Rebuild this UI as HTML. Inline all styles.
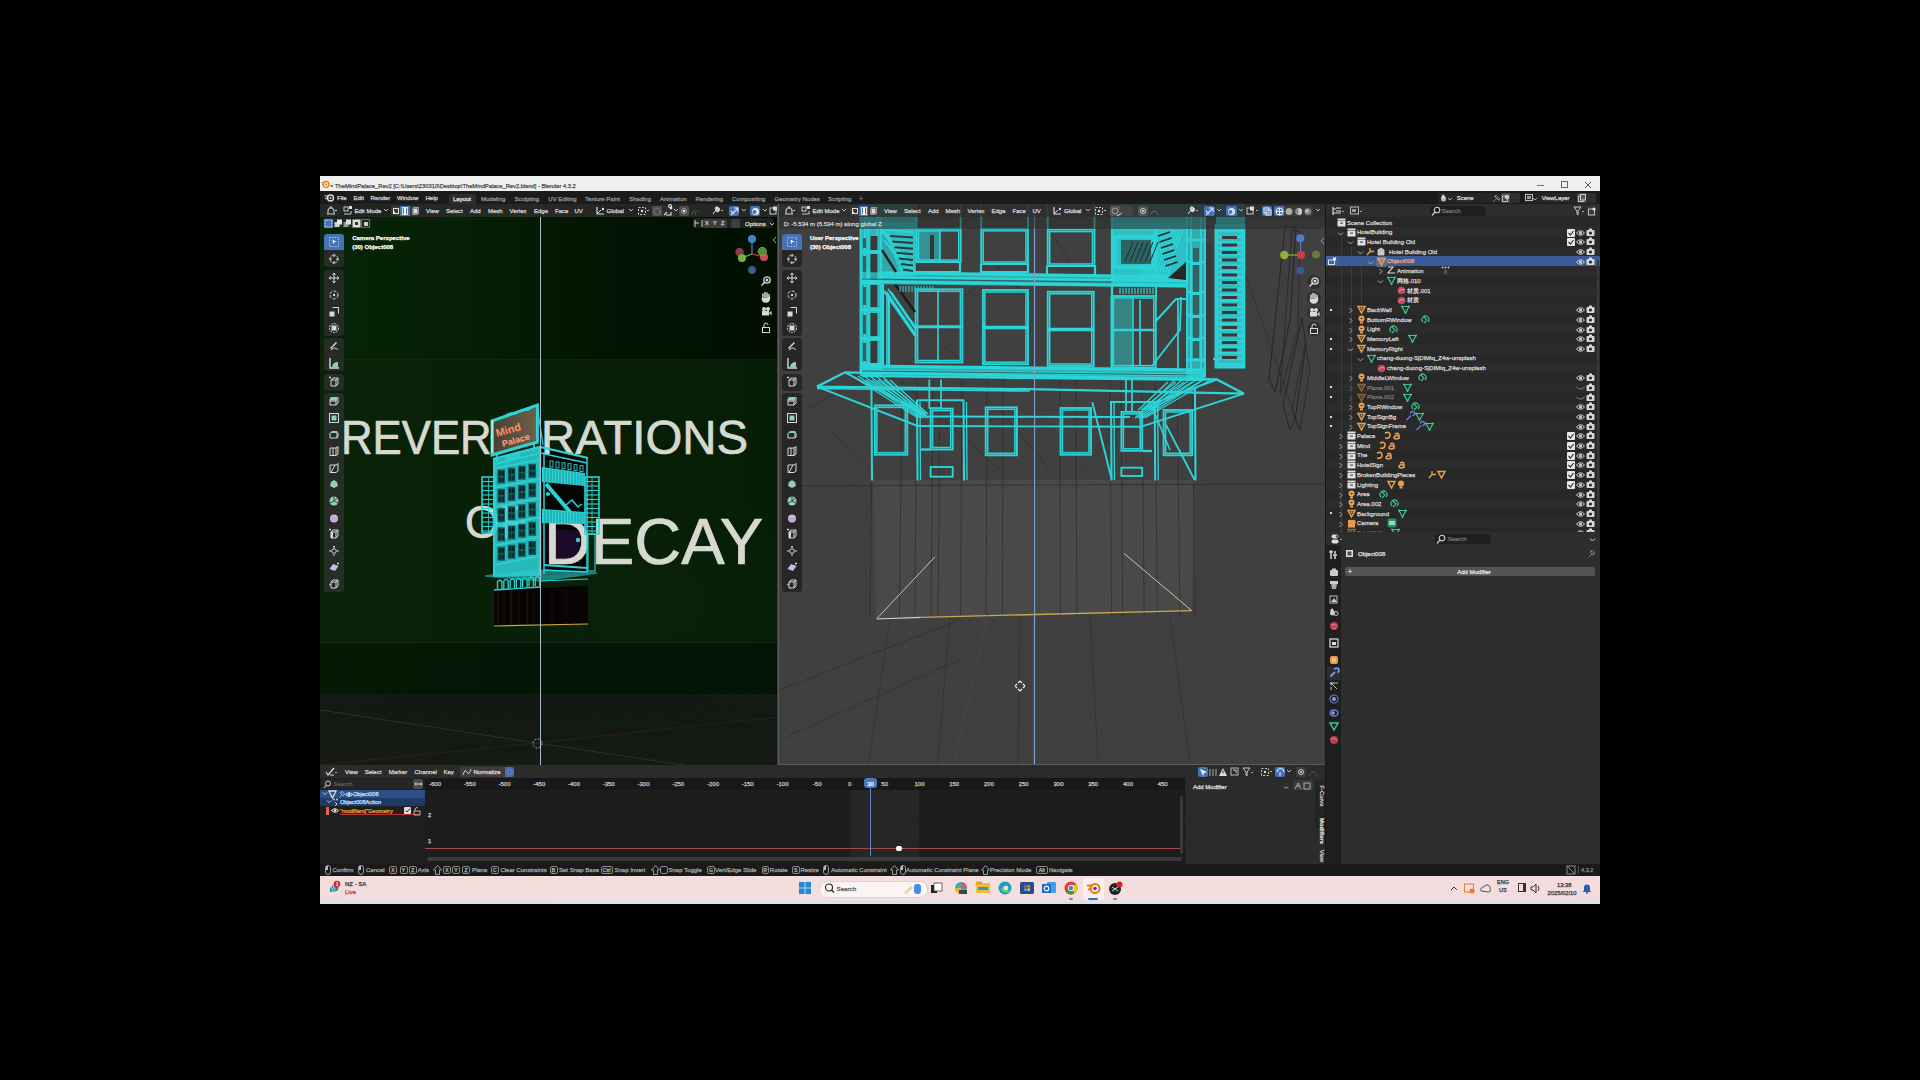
<!DOCTYPE html>
<html><head><meta charset="utf-8">
<style>
html,body{margin:0;padding:0;width:1920px;height:1080px;overflow:hidden;background:#000;}
body{font-family:"Liberation Sans",sans-serif;position:relative;}
.a{position:absolute;}
.t{position:absolute;white-space:nowrap;line-height:1;-webkit-text-stroke:0.25px currentColor;}
svg.a{overflow:visible;}
</style></head><body>
<!-- frames -->
<div class="a" style="left:320px;top:204px;width:457px;height:561px;background:#061406;"></div>
<div class="a" style="left:779px;top:204px;width:546px;height:561px;background:#3d3d3d;"></div>
<div class="a" style="left:1325px;top:204px;width:1px;height:660px;background:#161616;"></div>
<div class="a" style="left:1326px;top:204px;width:274px;height:328px;background:#282828;"></div>
<div class="a" style="left:1326px;top:532px;width:274px;height:332px;background:#2f2f2f;"></div>
<div class="a" style="left:320px;top:765px;width:1005px;height:99px;background:#1e1e1e;"></div>
<div class="a" style="left:320px;top:864px;width:1280px;height:12px;background:#1a1a1a;"></div>
<div class="a" style="left:320px;top:876px;width:1280px;height:28px;background:#f4dcdc;"></div>
<!-- top -->
<div class="a" style="left:320px;top:176px;width:1280px;height:15px;background:#f0f0f0;"></div>
<svg class="a" style="left:321px;top:180px" width="9" height="8" viewBox="0 0 9 8"><circle cx="5" cy="4.3" r="3" fill="none" stroke="#e87d0d" stroke-width="1.3"/><circle cx="5" cy="4.3" r="1.1" fill="#e87d0d"/><path d="M0.5 2.5 L4 2.5 M1 5 L3 4" stroke="#e87d0d" stroke-width="1"/></svg>
<div class="t" style="left:330.5px;top:183.92px;font-size:6px;color:#555;">*</div>
<div class="t" style="left:334.87px;top:183.07px;font-size:6.17px;color:#4a4a4a;transform:scaleX(0.9356);transform-origin:0 0;">TheMindPalace_Rev2 [C:\Users\230310\Desktop\TheMindPalace_Rev2.blend] - Blender 4.3.2</div>
<div class="a" style="left:1537px;top:185px;width:7px;height:1px;background:#777;"></div>
<div class="a" style="left:1561px;top:181px;width:5px;height:5px;border:1px solid #666;"></div>
<svg class="a" style="left:1584px;top:181px" width="8" height="8"><path d="M1 1L7 7M7 1L1 7" stroke="#555" stroke-width="1"/></svg>
<div class="a" style="left:320px;top:191px;width:1280px;height:13px;background:#1b1b1b;"></div>
<svg class="a" style="left:324px;top:193px" width="11" height="9" viewBox="0 0 11 9"><circle cx="6.5" cy="5" r="3" fill="none" stroke="#ddd" stroke-width="1.4"/><circle cx="6.5" cy="5" r="1" fill="#ddd"/><path d="M0.5 3 L5 3 M1 6 L4 4.5" stroke="#ddd" stroke-width="1.1"/></svg>
<div class="t" style="left:337px;top:195.12px;font-size:6px;color:#d8d8d8;">File</div>
<div class="t" style="left:353.5px;top:195.12px;font-size:6px;color:#d8d8d8;">Edit</div>
<div class="t" style="left:370.5px;top:195.12px;font-size:6px;color:#d8d8d8;">Render</div>
<div class="t" style="left:397px;top:195.12px;font-size:6px;color:#d8d8d8;">Window</div>
<div class="t" style="left:425.5px;top:195.12px;font-size:6px;color:#d8d8d8;">Help</div>
<div class="a" style="left:449px;top:194px;width:27px;height:10px;background:#2d2d2d;border-radius:2px 2px 0 0;"></div>
<div class="t" style="left:453px;top:195.92px;font-size:6px;color:#e8e8e8;">Layout</div>
<div class="t" style="left:481px;top:195.92px;font-size:6px;color:#9a9a9a;">Modeling</div>
<div class="t" style="left:514.5px;top:195.92px;font-size:6px;color:#9a9a9a;">Sculpting</div>
<div class="t" style="left:548.3px;top:195.92px;font-size:6px;color:#9a9a9a;">UV Editing</div>
<div class="t" style="left:585px;top:195.92px;font-size:6px;color:#9a9a9a;">Texture Paint</div>
<div class="t" style="left:629px;top:195.92px;font-size:6px;color:#9a9a9a;">Shading</div>
<div class="t" style="left:660px;top:195.92px;font-size:6px;color:#9a9a9a;">Animation</div>
<div class="t" style="left:695.5px;top:195.92px;font-size:6px;color:#9a9a9a;">Rendering</div>
<div class="t" style="left:732px;top:195.92px;font-size:6px;color:#9a9a9a;">Compositing</div>
<div class="t" style="left:774.5px;top:195.92px;font-size:6px;color:#9a9a9a;">Geometry Nodes</div>
<div class="t" style="left:828px;top:195.92px;font-size:6px;color:#9a9a9a;">Scripting</div>
<div class="t" style="left:859px;top:195.07px;font-size:7px;color:#777;">+</div>
<div class="a" style="left:1438px;top:193px;width:82px;height:10px;background:#252525;border-radius:2px;"></div>
<svg class="a" style="left:1440px;top:194px" width="12" height="8"><circle cx="3.5" cy="5" r="2.5" fill="#bbb"/><path d="M3 0 L6 4 L1 4Z" fill="#ddd"/><path d="M8 4 L10 6 L12 4" stroke="#aaa" fill="none"/></svg>
<div class="t" style="left:1456.7px;top:195.42px;font-size:6px;color:#dcdcdc;">Scene</div>
<svg class="a" style="left:1492px;top:194px" width="9" height="9"><path d="M1 8 L4 5 M3 2 L7 6 M4 1 L8 5 L6.5 6.5 L2.5 2.5Z" stroke="#888" fill="none" stroke-width="0.9"/></svg>
<div class="a" style="left:1501px;top:193px;width:9px;height:10px;background:#4a4a4a;border-radius:2px 0 0 2px;"></div>
<div class="a" style="left:1510px;top:193px;width:10px;height:10px;background:#303030;border-radius:0 2px 2px 0;"></div>
<svg class="a" style="left:1502px;top:194px" width="8" height="8"><rect x="0.5" y="2" width="5" height="5.5" fill="none" stroke="#bbb"/><circle cx="5" cy="3" r="2.3" fill="#ccc"/></svg>
<div class="a" style="left:1524px;top:193px;width:72px;height:10px;background:#252525;border-radius:2px;"></div>
<svg class="a" style="left:1525px;top:194px" width="12" height="8"><rect x="0.5" y="0.5" width="7" height="6" fill="none" stroke="#bbb"/><rect x="2" y="2" width="4" height="3" fill="#999"/><path d="M8 4 L10 6 L12 4" stroke="#aaa" fill="none"/></svg>
<div class="t" style="left:1541.7px;top:195.42px;font-size:6px;color:#dcdcdc;">ViewLayer</div>
<div class="a" style="left:1577px;top:193px;width:9px;height:10px;background:#4a4a4a;border-radius:2px 0 0 2px;"></div>
<div class="a" style="left:1586px;top:193px;width:10px;height:10px;background:#303030;border-radius:0 2px 2px 0;"></div>
<svg class="a" style="left:1578px;top:194px" width="8" height="8"><rect x="0.5" y="2" width="5" height="5.5" fill="none" stroke="#bbb"/><rect x="2.5" y="0.5" width="5" height="5.5" fill="#555" stroke="#ccc"/></svg>
<!-- lv -->
<div class="a" style="left:320px;top:204px;width:457px;height:561px;overflow:hidden;background:#041404;"><div class="a" style="left:0;top:0;width:457px;height:156px;background:linear-gradient(to right,#062406 0%,#052005 30%,#021402 65%,#011001 100%);"></div><div class="a" style="left:0;top:156px;width:457px;height:282px;background:linear-gradient(to right,#082308 0%,#072007 50%,#061d06 100%);"></div><div class="a" style="left:0;top:156px;width:457px;height:282px;background:radial-gradient(ellipse 150px 120px at 340px 240px, rgba(10,36,10,0.6), rgba(0,0,0,0) 100%);"></div><div class="a" style="left:0;top:438px;width:457px;height:52px;background:linear-gradient(to right,#051905,#041604 60%,#041404);"></div><div class="a" style="left:0;top:155px;width:457px;height:1px;background:rgba(40,80,40,0.25);"></div><div class="a" style="left:0;top:438px;width:457px;height:1px;background:rgba(70,110,70,0.25);"></div><div class="a" style="left:0;top:490px;width:457px;height:71px;background:linear-gradient(#111711,#151a15);"></div></div>
<svg class="a" style="left:0;top:0" width="1920" height="1080"><defs><clipPath id="lvclip"><rect x="320" y="694" width="456" height="71"/></clipPath></defs><g clip-path="url(#lvclip)"><line x1="313" y1="694" x2="-331" y2="765" stroke="#1b211b" stroke-width="0.6"/><line x1="329" y1="694" x2="-269" y2="765" stroke="#1b211b" stroke-width="0.6"/><line x1="345" y1="694" x2="-207" y2="765" stroke="#1b211b" stroke-width="0.6"/><line x1="361" y1="694" x2="-145" y2="765" stroke="#1b211b" stroke-width="0.6"/><line x1="377" y1="694" x2="-83" y2="765" stroke="#1b211b" stroke-width="0.6"/><line x1="393" y1="694" x2="-21" y2="765" stroke="#1b211b" stroke-width="0.6"/><line x1="409" y1="694" x2="41" y2="765" stroke="#1b211b" stroke-width="0.6"/><line x1="425" y1="694" x2="103" y2="765" stroke="#1b211b" stroke-width="0.6"/><line x1="441" y1="694" x2="165" y2="765" stroke="#1b211b" stroke-width="0.6"/><line x1="457" y1="694" x2="227" y2="765" stroke="#1b211b" stroke-width="0.6"/><line x1="473" y1="694" x2="289" y2="765" stroke="#1b211b" stroke-width="0.6"/><line x1="489" y1="694" x2="351" y2="765" stroke="#1b211b" stroke-width="0.6"/><line x1="505" y1="694" x2="413" y2="765" stroke="#1b211b" stroke-width="0.6"/><line x1="521" y1="694" x2="475" y2="765" stroke="#1b211b" stroke-width="0.6"/><line x1="537" y1="694" x2="537" y2="765" stroke="#1b211b" stroke-width="0.6"/><line x1="553" y1="694" x2="599" y2="765" stroke="#1b211b" stroke-width="0.6"/><line x1="569" y1="694" x2="661" y2="765" stroke="#1b211b" stroke-width="0.6"/><line x1="585" y1="694" x2="723" y2="765" stroke="#1b211b" stroke-width="0.6"/><line x1="601" y1="694" x2="785" y2="765" stroke="#1b211b" stroke-width="0.6"/><line x1="617" y1="694" x2="847" y2="765" stroke="#1b211b" stroke-width="0.6"/><line x1="633" y1="694" x2="909" y2="765" stroke="#1b211b" stroke-width="0.6"/><line x1="649" y1="694" x2="971" y2="765" stroke="#1b211b" stroke-width="0.6"/><line x1="665" y1="694" x2="1033" y2="765" stroke="#1b211b" stroke-width="0.6"/><line x1="681" y1="694" x2="1095" y2="765" stroke="#1b211b" stroke-width="0.6"/><line x1="697" y1="694" x2="1157" y2="765" stroke="#1b211b" stroke-width="0.6"/><line x1="713" y1="694" x2="1219" y2="765" stroke="#1b211b" stroke-width="0.6"/><line x1="729" y1="694" x2="1281" y2="765" stroke="#1b211b" stroke-width="0.6"/><line x1="745" y1="694" x2="1343" y2="765" stroke="#1b211b" stroke-width="0.6"/><line x1="761" y1="694" x2="1405" y2="765" stroke="#1b211b" stroke-width="0.6"/><line x1="320" y1="699" x2="777" y2="699" stroke="#1a1f1a" stroke-width="0.6"/><line x1="320" y1="705" x2="777" y2="705" stroke="#1a1f1a" stroke-width="0.6"/><line x1="320" y1="713" x2="777" y2="713" stroke="#1a1f1a" stroke-width="0.6"/><line x1="320" y1="723" x2="777" y2="723" stroke="#1a1f1a" stroke-width="0.6"/><line x1="320" y1="736" x2="777" y2="736" stroke="#1a1f1a" stroke-width="0.6"/><line x1="320" y1="752" x2="777" y2="752" stroke="#1a1f1a" stroke-width="0.6"/><line x1="320" y1="710" x2="537" y2="743" stroke="#3c3e1c" stroke-width="0.7"/><line x1="537" y1="743" x2="690" y2="766" stroke="#3c3e1c" stroke-width="0.7"/><line x1="320" y1="765" x2="537" y2="743" stroke="#3e2020" stroke-width="0.7"/><line x1="537" y1="743" x2="777" y2="717" stroke="#3e2020" stroke-width="0.7"/></g></svg>
<svg class="a" style="left:0;top:0" width="1920" height="1080"><polygon points="494,589 588,586 588,624 494,626" fill="#070403"/><line x1="498" y1="591" x2="498" y2="624" stroke="#2a1808" stroke-width="1.2"/><line x1="504" y1="591" x2="504" y2="624" stroke="#1c1006" stroke-width="1.2"/><line x1="511" y1="591" x2="511" y2="624" stroke="#2a1808" stroke-width="1.2"/><line x1="519" y1="591" x2="519" y2="624" stroke="#1c1006" stroke-width="1.2"/><line x1="527" y1="591" x2="527" y2="624" stroke="#2a1808" stroke-width="1.2"/><line x1="534" y1="591" x2="534" y2="624" stroke="#1c1006" stroke-width="1.2"/><line x1="552" y1="591" x2="552" y2="624" stroke="#160c06" stroke-width="1.2"/><line x1="566" y1="591" x2="566" y2="624" stroke="#160c06" stroke-width="1.2"/><line x1="494" y1="626" x2="588" y2="624" stroke="#c8a838" stroke-width="1.2"/><polygon points="540,447 588,458 588,573 540,576" fill="#040606"/><polygon points="548,528 582,531 582,562 548,563" fill="#1c0a26"/></svg>
<div class="t" style="left:340.89px;top:413.57px;font-size:47.46px;color:#d6d9d0;transform:scaleX(0.9216);transform-origin:0 0;-webkit-text-stroke:0.7px #d6d9d0;">REVER</div>
<div class="t" style="left:540.59px;top:413.57px;font-size:47.46px;color:#d6d9d0;transform:scaleX(0.9982);transform-origin:0 0;-webkit-text-stroke:0.7px #d6d9d0;">RATIONS</div>
<div class="t" style="left:464.57px;top:500.45px;font-size:45.54px;color:#d6d9d0;transform:scaleX(0.9847);transform-origin:0 0;-webkit-text-stroke:0.7px #d6d9d0;">OF</div>
<div class="t" style="left:544.13px;top:509.62px;font-size:64.47px;color:#d6d9d0;transform:scaleX(1.0087);transform-origin:0 0;-webkit-text-stroke:0.7px #d6d9d0;">DECAY</div>
<svg class="a" style="left:0;top:0" width="1920" height="1080"><polygon points="493,459 540,447 540,576 493,577" fill="#2bd3d6" opacity="0.86"/><rect x="497.5" y="469.5" width="7.5" height="14" fill="#0d4648" opacity="0.85"/><rect x="498.7" y="471.0" width="2.2" height="4.5" fill="#061c1d"/><rect x="501.8" y="471.0" width="2.2" height="4.5" fill="#061c1d"/><rect x="498.7" y="477.5" width="2.2" height="4.5" fill="#0a2a2b"/><rect x="501.8" y="477.5" width="2.2" height="4.5" fill="#0a2a2b"/><rect x="507.8" y="467.6" width="7.5" height="14" fill="#0d4648" opacity="0.85"/><rect x="509.0" y="469.1" width="2.2" height="4.5" fill="#061c1d"/><rect x="512.1" y="469.1" width="2.2" height="4.5" fill="#061c1d"/><rect x="509.0" y="475.6" width="2.2" height="4.5" fill="#0a2a2b"/><rect x="512.1" y="475.6" width="2.2" height="4.5" fill="#0a2a2b"/><rect x="518.1" y="465.7" width="7.5" height="14" fill="#0d4648" opacity="0.85"/><rect x="519.3" y="467.2" width="2.2" height="4.5" fill="#061c1d"/><rect x="522.4" y="467.2" width="2.2" height="4.5" fill="#061c1d"/><rect x="519.3" y="473.7" width="2.2" height="4.5" fill="#0a2a2b"/><rect x="522.4" y="473.7" width="2.2" height="4.5" fill="#0a2a2b"/><rect x="528.4" y="463.8" width="7.5" height="14" fill="#0d4648" opacity="0.85"/><rect x="529.6" y="465.3" width="2.2" height="4.5" fill="#061c1d"/><rect x="532.7" y="465.3" width="2.2" height="4.5" fill="#061c1d"/><rect x="529.6" y="471.8" width="2.2" height="4.5" fill="#0a2a2b"/><rect x="532.7" y="471.8" width="2.2" height="4.5" fill="#0a2a2b"/><rect x="497.5" y="488.8" width="7.5" height="14" fill="#0d4648" opacity="0.85"/><rect x="498.7" y="490.3" width="2.2" height="4.5" fill="#061c1d"/><rect x="501.8" y="490.3" width="2.2" height="4.5" fill="#061c1d"/><rect x="498.7" y="496.8" width="2.2" height="4.5" fill="#0a2a2b"/><rect x="501.8" y="496.8" width="2.2" height="4.5" fill="#0a2a2b"/><rect x="507.8" y="486.9" width="7.5" height="14" fill="#0d4648" opacity="0.85"/><rect x="509.0" y="488.4" width="2.2" height="4.5" fill="#061c1d"/><rect x="512.1" y="488.4" width="2.2" height="4.5" fill="#061c1d"/><rect x="509.0" y="494.9" width="2.2" height="4.5" fill="#0a2a2b"/><rect x="512.1" y="494.9" width="2.2" height="4.5" fill="#0a2a2b"/><rect x="518.1" y="485.0" width="7.5" height="14" fill="#0d4648" opacity="0.85"/><rect x="519.3" y="486.5" width="2.2" height="4.5" fill="#061c1d"/><rect x="522.4" y="486.5" width="2.2" height="4.5" fill="#061c1d"/><rect x="519.3" y="493.0" width="2.2" height="4.5" fill="#0a2a2b"/><rect x="522.4" y="493.0" width="2.2" height="4.5" fill="#0a2a2b"/><rect x="528.4" y="483.1" width="7.5" height="14" fill="#0d4648" opacity="0.85"/><rect x="529.6" y="484.6" width="2.2" height="4.5" fill="#061c1d"/><rect x="532.7" y="484.6" width="2.2" height="4.5" fill="#061c1d"/><rect x="529.6" y="491.1" width="2.2" height="4.5" fill="#0a2a2b"/><rect x="532.7" y="491.1" width="2.2" height="4.5" fill="#0a2a2b"/><rect x="497.5" y="508.1" width="7.5" height="14" fill="#0d4648" opacity="0.85"/><rect x="498.7" y="509.6" width="2.2" height="4.5" fill="#061c1d"/><rect x="501.8" y="509.6" width="2.2" height="4.5" fill="#061c1d"/><rect x="498.7" y="516.1" width="2.2" height="4.5" fill="#0a2a2b"/><rect x="501.8" y="516.1" width="2.2" height="4.5" fill="#0a2a2b"/><rect x="507.8" y="506.2" width="7.5" height="14" fill="#0d4648" opacity="0.85"/><rect x="509.0" y="507.7" width="2.2" height="4.5" fill="#061c1d"/><rect x="512.1" y="507.7" width="2.2" height="4.5" fill="#061c1d"/><rect x="509.0" y="514.2" width="2.2" height="4.5" fill="#0a2a2b"/><rect x="512.1" y="514.2" width="2.2" height="4.5" fill="#0a2a2b"/><rect x="518.1" y="504.3" width="7.5" height="14" fill="#0d4648" opacity="0.85"/><rect x="519.3" y="505.8" width="2.2" height="4.5" fill="#061c1d"/><rect x="522.4" y="505.8" width="2.2" height="4.5" fill="#061c1d"/><rect x="519.3" y="512.3" width="2.2" height="4.5" fill="#0a2a2b"/><rect x="522.4" y="512.3" width="2.2" height="4.5" fill="#0a2a2b"/><rect x="528.4" y="502.4" width="7.5" height="14" fill="#0d4648" opacity="0.85"/><rect x="529.6" y="503.9" width="2.2" height="4.5" fill="#061c1d"/><rect x="532.7" y="503.9" width="2.2" height="4.5" fill="#061c1d"/><rect x="529.6" y="510.4" width="2.2" height="4.5" fill="#0a2a2b"/><rect x="532.7" y="510.4" width="2.2" height="4.5" fill="#0a2a2b"/><rect x="497.5" y="527.4" width="7.5" height="14" fill="#0d4648" opacity="0.85"/><rect x="498.7" y="528.9" width="2.2" height="4.5" fill="#061c1d"/><rect x="501.8" y="528.9" width="2.2" height="4.5" fill="#061c1d"/><rect x="498.7" y="535.4" width="2.2" height="4.5" fill="#0a2a2b"/><rect x="501.8" y="535.4" width="2.2" height="4.5" fill="#0a2a2b"/><rect x="507.8" y="525.5" width="7.5" height="14" fill="#0d4648" opacity="0.85"/><rect x="509.0" y="527.0" width="2.2" height="4.5" fill="#061c1d"/><rect x="512.1" y="527.0" width="2.2" height="4.5" fill="#061c1d"/><rect x="509.0" y="533.5" width="2.2" height="4.5" fill="#0a2a2b"/><rect x="512.1" y="533.5" width="2.2" height="4.5" fill="#0a2a2b"/><rect x="518.1" y="523.6" width="7.5" height="14" fill="#0d4648" opacity="0.85"/><rect x="519.3" y="525.1" width="2.2" height="4.5" fill="#061c1d"/><rect x="522.4" y="525.1" width="2.2" height="4.5" fill="#061c1d"/><rect x="519.3" y="531.6" width="2.2" height="4.5" fill="#0a2a2b"/><rect x="522.4" y="531.6" width="2.2" height="4.5" fill="#0a2a2b"/><rect x="528.4" y="521.7" width="7.5" height="14" fill="#0d4648" opacity="0.85"/><rect x="529.6" y="523.2" width="2.2" height="4.5" fill="#061c1d"/><rect x="532.7" y="523.2" width="2.2" height="4.5" fill="#061c1d"/><rect x="529.6" y="529.7" width="2.2" height="4.5" fill="#0a2a2b"/><rect x="532.7" y="529.7" width="2.2" height="4.5" fill="#0a2a2b"/><rect x="497.5" y="546.7" width="7.5" height="14" fill="#0d4648" opacity="0.85"/><rect x="498.7" y="548.2" width="2.2" height="4.5" fill="#061c1d"/><rect x="501.8" y="548.2" width="2.2" height="4.5" fill="#061c1d"/><rect x="498.7" y="554.7" width="2.2" height="4.5" fill="#0a2a2b"/><rect x="501.8" y="554.7" width="2.2" height="4.5" fill="#0a2a2b"/><rect x="507.8" y="544.8" width="7.5" height="14" fill="#0d4648" opacity="0.85"/><rect x="509.0" y="546.3" width="2.2" height="4.5" fill="#061c1d"/><rect x="512.1" y="546.3" width="2.2" height="4.5" fill="#061c1d"/><rect x="509.0" y="552.8" width="2.2" height="4.5" fill="#0a2a2b"/><rect x="512.1" y="552.8" width="2.2" height="4.5" fill="#0a2a2b"/><rect x="518.1" y="542.9" width="7.5" height="14" fill="#0d4648" opacity="0.85"/><rect x="519.3" y="544.4" width="2.2" height="4.5" fill="#061c1d"/><rect x="522.4" y="544.4" width="2.2" height="4.5" fill="#061c1d"/><rect x="519.3" y="550.9" width="2.2" height="4.5" fill="#0a2a2b"/><rect x="522.4" y="550.9" width="2.2" height="4.5" fill="#0a2a2b"/><rect x="528.4" y="541.0" width="7.5" height="14" fill="#0d4648" opacity="0.85"/><rect x="529.6" y="542.5" width="2.2" height="4.5" fill="#061c1d"/><rect x="532.7" y="542.5" width="2.2" height="4.5" fill="#061c1d"/><rect x="529.6" y="549.0" width="2.2" height="4.5" fill="#0a2a2b"/><rect x="532.7" y="549.0" width="2.2" height="4.5" fill="#0a2a2b"/><line x1="494" y1="468.5" x2="540" y2="459.5" stroke="#2bd3d6" stroke-width="1.6"/><line x1="494" y1="487.8" x2="540" y2="478.8" stroke="#2bd3d6" stroke-width="1.6"/><line x1="494" y1="507.1" x2="540" y2="498.1" stroke="#2bd3d6" stroke-width="1.6"/><line x1="494" y1="526.4" x2="540" y2="517.4" stroke="#2bd3d6" stroke-width="1.6"/><line x1="494" y1="545.7" x2="540" y2="536.7" stroke="#2bd3d6" stroke-width="1.6"/><line x1="494" y1="565.0" x2="540" y2="556.0" stroke="#2bd3d6" stroke-width="1.6"/><polyline points="493,459 540,447 588,458" fill="none" stroke="#2bd3d6" stroke-width="2.2"/><polyline points="495,464 540,453 587,463" fill="none" stroke="#2bd3d6" stroke-width="1.6"/><line x1="540" y1="447" x2="540" y2="576" stroke="#2bd3d6" stroke-width="2.5"/><line x1="494" y1="459" x2="494" y2="577" stroke="#2bd3d6" stroke-width="1.8"/><line x1="587" y1="458" x2="587" y2="573" stroke="#2bd3d6" stroke-width="1.5"/><line x1="544" y1="452" x2="544" y2="574" stroke="#2bd3d6" stroke-width="1.5"/><rect x="550" y="461.0" width="3" height="6" fill="none" stroke="#2bd3d6" stroke-width="0.9"/><rect x="556" y="461.9" width="3" height="6" fill="none" stroke="#2bd3d6" stroke-width="0.9"/><rect x="562" y="462.8" width="3" height="6" fill="none" stroke="#2bd3d6" stroke-width="0.9"/><rect x="568" y="463.7" width="3" height="6" fill="none" stroke="#2bd3d6" stroke-width="0.9"/><rect x="574" y="464.6" width="3" height="6" fill="none" stroke="#2bd3d6" stroke-width="0.9"/><rect x="580" y="465.5" width="3" height="6" fill="none" stroke="#2bd3d6" stroke-width="0.9"/><polygon points="542,467 585,473 585,486 542,482" fill="#2bd3d6"/><line x1="545" y1="468.4" x2="545" y2="482.3" stroke="#17888a" stroke-width="0.8"/><line x1="548" y1="468.8" x2="548" y2="482.5" stroke="#17888a" stroke-width="0.8"/><line x1="551" y1="469.3" x2="551" y2="482.8" stroke="#17888a" stroke-width="0.8"/><line x1="554" y1="469.7" x2="554" y2="483.1" stroke="#17888a" stroke-width="0.8"/><line x1="557" y1="470.1" x2="557" y2="483.4" stroke="#17888a" stroke-width="0.8"/><line x1="560" y1="470.5" x2="560" y2="483.6" stroke="#17888a" stroke-width="0.8"/><line x1="563" y1="470.9" x2="563" y2="483.9" stroke="#17888a" stroke-width="0.8"/><line x1="566" y1="471.4" x2="566" y2="484.2" stroke="#17888a" stroke-width="0.8"/><line x1="569" y1="471.8" x2="569" y2="484.4" stroke="#17888a" stroke-width="0.8"/><line x1="572" y1="472.2" x2="572" y2="484.7" stroke="#17888a" stroke-width="0.8"/><line x1="575" y1="472.6" x2="575" y2="485.0" stroke="#17888a" stroke-width="0.8"/><line x1="578" y1="473.0" x2="578" y2="485.2" stroke="#17888a" stroke-width="0.8"/><line x1="581" y1="473.5" x2="581" y2="485.5" stroke="#17888a" stroke-width="0.8"/><line x1="584" y1="473.9" x2="584" y2="485.8" stroke="#17888a" stroke-width="0.8"/><polygon points="542,509 585,512 585,524 542,523" fill="#2bd3d6"/><line x1="545" y1="510.2" x2="545" y2="523.1" stroke="#17888a" stroke-width="0.8"/><line x1="548" y1="510.4" x2="548" y2="523.1" stroke="#17888a" stroke-width="0.8"/><line x1="551" y1="510.6" x2="551" y2="523.2" stroke="#17888a" stroke-width="0.8"/><line x1="554" y1="510.8" x2="554" y2="523.2" stroke="#17888a" stroke-width="0.8"/><line x1="557" y1="511.1" x2="557" y2="523.3" stroke="#17888a" stroke-width="0.8"/><line x1="560" y1="511.3" x2="560" y2="523.4" stroke="#17888a" stroke-width="0.8"/><line x1="563" y1="511.5" x2="563" y2="523.4" stroke="#17888a" stroke-width="0.8"/><line x1="566" y1="511.7" x2="566" y2="523.5" stroke="#17888a" stroke-width="0.8"/><line x1="569" y1="511.9" x2="569" y2="523.5" stroke="#17888a" stroke-width="0.8"/><line x1="572" y1="512.1" x2="572" y2="523.6" stroke="#17888a" stroke-width="0.8"/><line x1="575" y1="512.3" x2="575" y2="523.7" stroke="#17888a" stroke-width="0.8"/><line x1="578" y1="512.5" x2="578" y2="523.7" stroke="#17888a" stroke-width="0.8"/><line x1="581" y1="512.7" x2="581" y2="523.8" stroke="#17888a" stroke-width="0.8"/><line x1="584" y1="512.9" x2="584" y2="523.8" stroke="#17888a" stroke-width="0.8"/><line x1="546" y1="484" x2="570" y2="512" stroke="#2bd3d6" stroke-width="4"/><path d="M566 505 L572 500 L578 507 L582 504" stroke="#2bd3d6" stroke-width="1.5" fill="none"/><circle cx="548" cy="494" r="2" fill="#2bd3d6"/><circle cx="578" cy="540" r="2.2" fill="#2bd3d6"/><line x1="544" y1="565" x2="587" y2="568" stroke="#2bd3d6" stroke-width="2"/><line x1="544" y1="570" x2="587" y2="572" stroke="#2bd3d6" stroke-width="1.5"/><rect x="482" y="477" width="13" height="56" fill="none" stroke="#2bd3d6" stroke-width="1.6"/><line x1="488.5" y1="477" x2="488.5" y2="533" stroke="#2bd3d6" stroke-width="0.8"/><line x1="482" y1="481.5" x2="495" y2="481.5" stroke="#2bd3d6" stroke-width="1.1"/><line x1="482" y1="486.0" x2="495" y2="486.0" stroke="#2bd3d6" stroke-width="1.1"/><line x1="482" y1="490.5" x2="495" y2="490.5" stroke="#2bd3d6" stroke-width="1.1"/><line x1="482" y1="495.0" x2="495" y2="495.0" stroke="#2bd3d6" stroke-width="1.1"/><line x1="482" y1="499.5" x2="495" y2="499.5" stroke="#2bd3d6" stroke-width="1.1"/><line x1="482" y1="504.0" x2="495" y2="504.0" stroke="#2bd3d6" stroke-width="1.1"/><line x1="482" y1="508.5" x2="495" y2="508.5" stroke="#2bd3d6" stroke-width="1.1"/><line x1="482" y1="513.0" x2="495" y2="513.0" stroke="#2bd3d6" stroke-width="1.1"/><line x1="482" y1="517.5" x2="495" y2="517.5" stroke="#2bd3d6" stroke-width="1.1"/><line x1="482" y1="522.0" x2="495" y2="522.0" stroke="#2bd3d6" stroke-width="1.1"/><line x1="482" y1="526.5" x2="495" y2="526.5" stroke="#2bd3d6" stroke-width="1.1"/><line x1="482" y1="531.0" x2="495" y2="531.0" stroke="#2bd3d6" stroke-width="1.1"/><rect x="585" y="477" width="14" height="57" fill="none" stroke="#2bd3d6" stroke-width="1.6"/><line x1="592.0" y1="477" x2="592.0" y2="534" stroke="#2bd3d6" stroke-width="0.8"/><line x1="585" y1="481.5" x2="599" y2="481.5" stroke="#2bd3d6" stroke-width="1.1"/><line x1="585" y1="486.0" x2="599" y2="486.0" stroke="#2bd3d6" stroke-width="1.1"/><line x1="585" y1="490.5" x2="599" y2="490.5" stroke="#2bd3d6" stroke-width="1.1"/><line x1="585" y1="495.0" x2="599" y2="495.0" stroke="#2bd3d6" stroke-width="1.1"/><line x1="585" y1="499.5" x2="599" y2="499.5" stroke="#2bd3d6" stroke-width="1.1"/><line x1="585" y1="504.0" x2="599" y2="504.0" stroke="#2bd3d6" stroke-width="1.1"/><line x1="585" y1="508.5" x2="599" y2="508.5" stroke="#2bd3d6" stroke-width="1.1"/><line x1="585" y1="513.0" x2="599" y2="513.0" stroke="#2bd3d6" stroke-width="1.1"/><line x1="585" y1="517.5" x2="599" y2="517.5" stroke="#2bd3d6" stroke-width="1.1"/><line x1="585" y1="522.0" x2="599" y2="522.0" stroke="#2bd3d6" stroke-width="1.1"/><line x1="585" y1="526.5" x2="599" y2="526.5" stroke="#2bd3d6" stroke-width="1.1"/><line x1="585" y1="531.0" x2="599" y2="531.0" stroke="#2bd3d6" stroke-width="1.1"/><rect x="588" y="534" width="7" height="37" fill="none" stroke="#2bd3d6" stroke-width="1.1"/><polygon points="485,576 540,570 597,573 540,581" fill="#2bd3d6" opacity="0.55" stroke="#2bd3d6" stroke-width="1.6"/><path d="M497.5 589.5 V581.5 Q499.7 579.0 501.9 581.5 V589.5" fill="none" stroke="#2bd3d6" stroke-width="1.3"/><path d="M503.8 588.9 V580.9 Q506.0 578.4 508.2 580.9 V588.9" fill="none" stroke="#2bd3d6" stroke-width="1.3"/><path d="M510.1 588.3 V580.3 Q512.3 577.8 514.5 580.3 V588.3" fill="none" stroke="#2bd3d6" stroke-width="1.3"/><path d="M516.4 587.7 V579.7 Q518.6 577.2 520.8 579.7 V587.7" fill="none" stroke="#2bd3d6" stroke-width="1.3"/><path d="M522.7 587.1 V579.1 Q524.9 576.6 527.1 579.1 V587.1" fill="none" stroke="#2bd3d6" stroke-width="1.3"/><path d="M529.0 586.5 V578.5 Q531.2 576.0 533.4 578.5 V586.5" fill="none" stroke="#2bd3d6" stroke-width="1.3"/><path d="M535.3 585.9 V577.9 Q537.5 575.4 539.7 577.9 V585.9" fill="none" stroke="#2bd3d6" stroke-width="1.3"/><line x1="494" y1="590" x2="540" y2="587" stroke="#2bd3d6" stroke-width="1.4"/><line x1="540" y1="581" x2="588" y2="579" stroke="#2bd3d6" stroke-width="1.2"/><line x1="497" y1="452" x2="497" y2="462" stroke="#2bd3d6" stroke-width="1.8"/><line x1="534" y1="443" x2="534" y2="452" stroke="#2bd3d6" stroke-width="1.8"/><polygon points="505,455 520,451 520,458 505,461" fill="#2bd3d6" opacity="0.7"/><defs><linearGradient id="sgn" x1="0" y1="0" x2="1" y2="0"><stop offset="0" stop-color="#4a4030"/><stop offset="1" stop-color="#6c6048"/></linearGradient></defs><polygon points="492,421 537.4,405 537.4,442 492,455" fill="url(#sgn)" stroke="#2bd3d6" stroke-width="3"/><path d="M505 416 Q510 412 515 414 Q522 409 528 410 Q533 406 537 405" fill="none" stroke="#2bd3d6" stroke-width="2"/><rect x="491" y="420" width="2.5" height="33" fill="#bfe8e8" opacity="0.8"/><text x="497" y="437" font-family="Liberation Sans" font-weight="bold" font-size="11" fill="#ff8f6a" transform="rotate(-16 497 437)">Mind</text><text x="503" y="447" font-family="Liberation Sans" font-weight="bold" font-size="9" fill="#ffa080" transform="rotate(-16 503 447)">Palace</text><line x1="537" y1="405" x2="543" y2="445" stroke="#2bd3d6" stroke-width="1.2"/></svg>
<div class="a" style="left:540px;top:204px;width:1px;height:561px;background:#a8bcd0;"></div>
<svg class="a" style="left:531px;top:737px" width="13" height="13"><circle cx="6.5" cy="6.5" r="4.5" fill="none" stroke="#c8c8c8" stroke-dasharray="2 1.5" stroke-width="0.8"/></svg>
<div class="a" style="left:320px;top:204px;width:457px;height:13px;background:rgba(40,42,40,0.92);"></div>
<svg class="a" style="left:325px;top:205px" width="14" height="11" viewBox="0 0 14 11"><path d="M3 9 L3 6 A3 3 0 0 1 9 6 L9 9 M2 9H10 M6 1 V3 M4 3 H8" stroke="#ccc" fill="none" stroke-width="1.1"/><path d="M10 5 L11 6 L12 5" stroke="#ccc" fill="none"/></svg>
<div class="a" style="left:341px;top:205px;width:50px;height:11px;background:rgba(30,30,30,0.6);border-radius:2px;"></div>
<svg class="a" style="left:343px;top:205px" width="10" height="11" viewBox="0 0 10 11"><rect x="1" y="2" width="4" height="4" fill="none" stroke="#ccc"/><rect x="6" y="1" width="3" height="3" fill="#ddd"/><path d="M1 9 H8 V6" stroke="#ccc" fill="none"/></svg>
<div class="t" style="left:354.4px;top:208.22px;font-size:6px;color:#dddddd;">Edit Mode</div>
<svg class="a" style="left:383px;top:208px" width="6" height="5" viewBox="0 0 6 5"><path d="M1 1 L3 3 L5 1" stroke="#bbb" fill="none"/></svg>
<div class="a" style="left:391px;top:206px;width:9px;height:10px;background:#3a3a3a;border-radius:2px 0 0 2px;"></div>
<div class="a" style="left:400px;top:206px;width:10px;height:10px;background:#4772b3;"></div>
<div class="a" style="left:410px;top:206px;width:9px;height:10px;background:#3a3a3a;border-radius:0 2px 2px 0;"></div>
<svg class="a" style="left:393px;top:208px" width="6" height="6" viewBox="0 0 6 6"><rect x="0.5" y="0.5" width="5" height="5" fill="none" stroke="#ddd"/><circle cx="1" cy="4.5" r="1" fill="#fff"/></svg>
<svg class="a" style="left:402px;top:207px" width="6" height="8" viewBox="0 0 6 8"><rect x="0.5" y="0.5" width="5" height="7" fill="none" stroke="#ddd"/><rect x="2" y="1" width="2" height="7" fill="#fff"/></svg>
<svg class="a" style="left:412px;top:207px" width="7" height="8" viewBox="0 0 7 8"><rect x="0.5" y="1.5" width="5" height="6" fill="#ddd"/><rect x="1.5" y="0.5" width="5" height="6" fill="none" stroke="#999"/></svg>
<div class="t" style="left:426px;top:208.22px;font-size:6px;color:#d6d6d6;">View</div>
<div class="t" style="left:446px;top:208.22px;font-size:6px;color:#d6d6d6;">Select</div>
<div class="t" style="left:470px;top:208.22px;font-size:6px;color:#d6d6d6;">Add</div>
<div class="t" style="left:488px;top:208.22px;font-size:6px;color:#d6d6d6;">Mesh</div>
<div class="t" style="left:509.5px;top:208.22px;font-size:6px;color:#d6d6d6;">Vertex</div>
<div class="t" style="left:534px;top:208.22px;font-size:6px;color:#d6d6d6;">Edge</div>
<div class="t" style="left:555px;top:208.22px;font-size:6px;color:#d6d6d6;">Face</div>
<div class="t" style="left:574.5px;top:208.22px;font-size:6px;color:#d6d6d6;">UV</div>
<svg class="a" style="left:595px;top:206px" width="10" height="10" viewBox="0 0 10 10"><path d="M2 1 V8 H9" stroke="#ddd" fill="none" stroke-width="1.2"/><path d="M2 8 L6 4" stroke="#ddd"/><circle cx="8" cy="3" r="1.2" fill="#ddd"/></svg>
<div class="a" style="left:604px;top:206px;width:34px;height:10px;background:rgba(30,30,30,0.5);border-radius:2px;"></div>
<div class="t" style="left:606.5px;top:208.22px;font-size:6px;color:#dddddd;">Global</div>
<svg class="a" style="left:628px;top:208px" width="6" height="5" viewBox="0 0 6 5"><path d="M1 1 L3 3 L5 1" stroke="#bbb" fill="none"/></svg>
<svg class="a" style="left:637px;top:206px" width="13" height="10" viewBox="0 0 13 10"><rect x="1.5" y="1.5" width="7" height="7" fill="none" stroke="#ccc" stroke-dasharray="2 1.5"/><circle cx="5" cy="5" r="1.2" fill="#ddd"/><path d="M10 4 L11 5 L12 4" stroke="#bbb" fill="none"/></svg>
<div class="a" style="left:652px;top:206px;width:10px;height:10px;background:#4d4d4d;border-radius:2px 0 0 2px;"></div>
<div class="a" style="left:662px;top:206px;width:15px;height:10px;background:#2e2e2e;border-radius:0 2px 2px 0;"></div>
<svg class="a" style="left:653px;top:207px" width="9" height="9" viewBox="0 0 9 9"><circle cx="4" cy="4.5" r="3.2" fill="none" stroke="#999" stroke-dasharray="1.2 0.8"/></svg>
<svg class="a" style="left:663px;top:206px" width="10" height="10" viewBox="0 0 10 10"><path d="M1 9 L4 6 M3 9 H8 V6 M7 1.5 A1.5 1.5 0 1 1 7.1 1.5" stroke="#ddd" fill="none" stroke-width="1.2"/><circle cx="8" cy="2" r="1.3" fill="#eee"/></svg>
<svg class="a" style="left:673px;top:208px" width="6" height="5" viewBox="0 0 6 5"><path d="M1 1 L3 3 L5 1" stroke="#bbb" fill="none"/></svg>
<div class="a" style="left:679px;top:206px;width:10px;height:10px;background:#4d4d4d;border-radius:2px;"></div>
<svg class="a" style="left:681px;top:208px" width="6" height="6" viewBox="0 0 6 6"><circle cx="3" cy="3" r="2.5" fill="none" stroke="#999"/><circle cx="3" cy="3" r="1.2" fill="#eee"/></svg>
<svg class="a" style="left:691px;top:207px" width="10" height="9" viewBox="0 0 10 9"><path d="M1 8 Q3 0 5 8 M6 5 L8 3" stroke="#555" fill="none"/></svg>
<svg class="a" style="left:711px;top:206px" width="13" height="10" viewBox="0 0 13 10"><path d="M2 8 L5 4 M4 2 A2.5 2.5 0 1 1 8 5 L6 6Z" stroke="#ddd" fill="#ccc"/><path d="M10 4 L11 5 L12 4" stroke="#bbb" fill="none"/></svg>
<div class="a" style="left:729px;top:206px;width:10px;height:10px;background:#4772b3;border-radius:2px;"></div>
<svg class="a" style="left:730px;top:207px" width="9" height="9" viewBox="0 0 9 9"><path d="M1 8 L8 1 M4 1 H8 V5 M1 4 L4 7" stroke="#cfe0ff" fill="none" stroke-width="1.1"/></svg>
<svg class="a" style="left:741px;top:208px" width="6" height="5" viewBox="0 0 6 5"><path d="M1 1 L3 3 L5 1" stroke="#bbb" fill="none"/></svg>
<div class="a" style="left:750px;top:206px;width:10px;height:10px;background:#4772b3;border-radius:2px;"></div>
<svg class="a" style="left:751px;top:207px" width="9" height="9" viewBox="0 0 9 9"><circle cx="4.5" cy="4.5" r="3.5" fill="#dfe8ff"/><circle cx="3.5" cy="5" r="2" fill="#4772b3"/></svg>
<svg class="a" style="left:762px;top:208px" width="6" height="5" viewBox="0 0 6 5"><path d="M1 1 L3 3 L5 1" stroke="#bbb" fill="none"/></svg>
<svg class="a" style="left:769px;top:206px" width="9" height="10" viewBox="0 0 9 10"><rect x="1" y="2" width="6" height="6" fill="none" stroke="#ccc"/><rect x="4" y="0.5" width="4" height="4" fill="#ddd"/></svg>
<div class="a" style="left:323px;top:218px;width:48px;height:10px;background:rgba(40,44,40,0.75);border-radius:2px;"></div>
<div class="a" style="left:324px;top:219px;width:9px;height:9px;background:#4772b3;"></div>
<svg class="a" style="left:324px;top:219px" width="9" height="9" viewBox="0 0 9 9"><rect x="1" y="1" width="7" height="7" fill="none" stroke="#cfe0ff" stroke-dasharray="1.2 0.8"/></svg>
<svg class="a" style="left:334px;top:219px" width="9" height="9" viewBox="0 0 9 9"><rect x="0.5" y="3" width="5" height="5" fill="#d0d0d0"/><rect x="3" y="0.5" width="5" height="5" fill="#e8e8e8"/></svg>
<svg class="a" style="left:343px;top:219px" width="9" height="9" viewBox="0 0 9 9"><rect x="0.5" y="3" width="5" height="5" fill="#999" /><rect x="3" y="0.5" width="5" height="5" fill="#e0e0e0"/></svg>
<svg class="a" style="left:352px;top:219px" width="9" height="9" viewBox="0 0 9 9"><rect x="0.5" y="0.5" width="8" height="8" fill="#ddd"/><rect x="3" y="3" width="3" height="3" fill="#333"/></svg>
<svg class="a" style="left:361px;top:219px" width="9" height="9" viewBox="0 0 9 9"><rect x="0.5" y="0.5" width="8" height="8" fill="none" stroke="#aaa" stroke-dasharray="1 1"/><rect x="3" y="3" width="4" height="4" fill="#ccc"/></svg>
<div class="a" style="left:693px;top:218px;width:80px;height:10px;background:rgba(40,44,40,0.75);border-radius:2px;"></div>
<svg class="a" style="left:694px;top:219px" width="10" height="9" viewBox="0 0 10 9"><path d="M1 1 V8 M1 4 H5 M8 1 V8" stroke="#ccc" fill="none"/></svg>
<div class="a" style="left:703px;top:219px;width:24px;height:9px;background:#3d3d3d;border-radius:2px;"></div>
<div class="t" style="left:705px;top:221.34px;font-size:5.5px;color:#ccc;">X</div>
<div class="t" style="left:713px;top:221.34px;font-size:5.5px;color:#ccc;">Y</div>
<div class="t" style="left:721px;top:221.34px;font-size:5.5px;color:#ccc;">Z</div>
<div class="a" style="left:731px;top:219px;width:9px;height:9px;background:#3d3d3d;border-radius:2px;"></div>
<div class="t" style="left:745px;top:221.22px;font-size:6px;color:#dddddd;">Options</div>
<svg class="a" style="left:769px;top:222px" width="6" height="5" viewBox="0 0 6 5"><path d="M1 1 L3 3 L5 1" stroke="#bbb" fill="none"/></svg>
<div class="t" style="left:352.2px;top:234.52px;font-size:6px;color:#ffffff;font-weight:bold;">Camera Perspective</div>
<div class="t" style="left:352.2px;top:243.52px;font-size:6px;color:#ffffff;font-weight:bold;">(30) Object008</div>
<div class="a" style="left:324px;top:234px;width:20px;height:33px;background:rgba(42,46,42,0.88);border-radius:3px;"></div>
<div class="a" style="left:324px;top:234px;width:20px;height:16px;background:#4772b3;border-radius:3px 3px 0 0;"></div>
<svg class="a" style="left:328px;top:236px" width="12" height="12" viewBox="0 0 12 12"><rect x="1.5" y="1.5" width="9" height="9" fill="none" stroke="#9cc0ee" stroke-dasharray="1.5 1"/><path d="M4.5 3.5 L8.5 6 L6 6.3 L5.2 8.5Z" fill="#fff"/></svg>
<svg class="a" style="left:328px;top:253px" width="12" height="12" viewBox="0 0 12 12"><circle cx="6" cy="6" r="4" fill="none" stroke="#d9d9d9" stroke-dasharray="2 1"/><path d="M6 1V4M6 8V11M1 6H4M8 6H11" stroke="#d9d9d9"/></svg>
<div class="a" style="left:324px;top:270px;width:20px;height:66px;background:rgba(42,46,42,0.88);border-radius:3px;"></div>
<svg class="a" style="left:328px;top:272px" width="12" height="12" viewBox="0 0 12 12"><path d="M6 1V11M1 6H11M6 1L4.5 2.8M6 1L7.5 2.8M6 11L4.5 9.2M6 11L7.5 9.2M1 6L2.8 4.5M1 6L2.8 7.5M11 6L9.2 4.5M11 6L9.2 7.5" stroke="#d9d9d9" fill="none"/></svg>
<svg class="a" style="left:328px;top:289px" width="12" height="12" viewBox="0 0 12 12"><circle cx="6" cy="6" r="4" fill="none" stroke="#d9d9d9" stroke-dasharray="3 1.5"/><circle cx="6" cy="6" r="1.2" fill="#d9d9d9"/></svg>
<svg class="a" style="left:328px;top:306px" width="12" height="12" viewBox="0 0 12 12"><rect x="1.5" y="5.5" width="5" height="5" fill="#d9d9d9"/><path d="M4.5 1.5H10.5V7.5" fill="none" stroke="#d9d9d9"/></svg>
<svg class="a" style="left:328px;top:322px" width="12" height="12" viewBox="0 0 12 12"><circle cx="6" cy="6" r="4.5" fill="none" stroke="#d9d9d9" stroke-dasharray="2 1"/><rect x="3.5" y="3.5" width="5" height="5" fill="#d9d9d9"/></svg>
<div class="a" style="left:324px;top:338px;width:20px;height:33px;background:rgba(42,46,42,0.88);border-radius:3px;"></div>
<svg class="a" style="left:328px;top:340px" width="12" height="12" viewBox="0 0 12 12"><path d="M2 8 L8 2 L9 3 L3 9Z" fill="#d9d9d9"/><path d="M3 10 Q7 6 10 10" stroke="#d9d9d9" fill="none"/></svg>
<svg class="a" style="left:328px;top:357px" width="12" height="12" viewBox="0 0 12 12"><path d="M2 1V11H11" stroke="#d9d9d9" fill="none" stroke-width="1.4"/><path d="M4 10 A6 6 0 0 1 10 5 V10Z" fill="#8fd1b0"/></svg>
<div class="a" style="left:324px;top:374px;width:20px;height:17px;background:rgba(42,46,42,0.88);border-radius:3px;"></div>
<svg class="a" style="left:328px;top:376px" width="12" height="12" viewBox="0 0 12 12"><path d="M3 4 L8 4 L10 2 L5 2Z M3 4V10H8V4 M8 10L10 8V2" stroke="#d9d9d9" fill="none"/><path d="M1 1.5H3M2 0.5V2.5" stroke="#d9d9d9"/></svg>
<div class="a" style="left:324px;top:393px;width:20px;height:199px;background:rgba(42,46,42,0.88);border-radius:3px;"></div>
<svg class="a" style="left:328px;top:395px" width="12" height="12" viewBox="0 0 12 12"><path d="M2 4 L8 4 L10 2 L4 2Z" fill="#8fd1b0"/><path d="M2 4V6H8V4M2 6V10H8V6M8 10L10 8V2" stroke="#d9d9d9" fill="none"/><rect x="2" y="2.5" width="7" height="3" fill="#8fd1b0"/></svg>
<svg class="a" style="left:328px;top:412px" width="12" height="12" viewBox="0 0 12 12"><rect x="1.5" y="1.5" width="9" height="9" fill="none" stroke="#d9d9d9"/><rect x="3.5" y="3.5" width="5" height="5" fill="#8fd1b0"/></svg>
<svg class="a" style="left:328px;top:428px" width="12" height="12" viewBox="0 0 12 12"><path d="M2 5 L4 3 H9 L10 5Z" fill="#8fd1b0"/><path d="M2 5V10H9V5M9 10L10 9V5" stroke="#d9d9d9" fill="none"/></svg>
<svg class="a" style="left:328px;top:445px" width="12" height="12" viewBox="0 0 12 12"><path d="M2 3H8L10 1.5V9L8 10.5H2Z M8 3V10.5 M5 3V10.5" stroke="#d9d9d9" fill="none"/></svg>
<svg class="a" style="left:328px;top:462px" width="12" height="12" viewBox="0 0 12 12"><path d="M2 3H8L10 1.5V9L8 10.5H2Z M3 10.5L7 3" stroke="#d9d9d9" fill="none"/></svg>
<svg class="a" style="left:328px;top:478px" width="12" height="12" viewBox="0 0 12 12"><path d="M3 4 L6 2 L9 4 L10 8 L6 10 L2 8Z" fill="#8fd1b0"/></svg>
<svg class="a" style="left:328px;top:495px" width="12" height="12" viewBox="0 0 12 12"><circle cx="6" cy="6" r="4.5" fill="#8fd1b0"/><path d="M6 6V1.5M6 6L10 8M6 6L2 8M6 6L9.5 3" stroke="#2a2a2a" stroke-width="0.8"/></svg>
<svg class="a" style="left:328px;top:512px" width="12" height="12" viewBox="0 0 12 12"><circle cx="6" cy="6.5" r="4" fill="#cdb8e0"/><path d="M2.5 6H9.5M3 8H9" stroke="#a590c0" stroke-width="0.7"/></svg>
<svg class="a" style="left:328px;top:528px" width="12" height="12" viewBox="0 0 12 12"><path d="M3 4 L8 4 L10 2 L5 2Z M3 4V10H8V4 M8 10L10 8V2" stroke="#d9d9d9" fill="none"/><path d="M1 1.5H3M2 0.5V2.5" stroke="#d9d9d9"/><rect x="3" y="4" width="2" height="6" fill="#d9d9d9"/></svg>
<svg class="a" style="left:328px;top:545px" width="12" height="12" viewBox="0 0 12 12"><circle cx="6" cy="6" r="2.3" fill="none" stroke="#d9d9d9"/><path d="M6 1V3M6 9V11M1 6H3M9 6H11M6 1L5 2M6 1L7 2" stroke="#d9d9d9" fill="none"/></svg>
<svg class="a" style="left:328px;top:561px" width="12" height="12" viewBox="0 0 12 12"><path d="M1.5 8 L5 3 L10.5 5 L7 10Z" fill="#cdb8e0"/><path d="M10 1.5V3.5M9 2.5H11" stroke="#d9d9d9"/></svg>
<svg class="a" style="left:328px;top:578px" width="12" height="12" viewBox="0 0 12 12"><path d="M3 4 L8 4 L10 2 L5 2Z M3 4V10H8V4 M8 10L10 8V2" stroke="#d9d9d9" fill="none"/><path d="M1 7 L3 6" stroke="#d9d9d9"/></svg>
<svg class="a" style="left:0;top:0" width="1920" height="1080"><line x1="752" y1="254" x2="752" y2="240" stroke="#5a80c0" stroke-width="1.2"/><line x1="752" y1="254" x2="742" y2="258" stroke="#7ab040" stroke-width="1.2"/><line x1="752" y1="254" x2="764" y2="257" stroke="#c04050" stroke-width="1.2"/><circle cx="739.5" cy="252" r="4.2" fill="#8a3a44"/><circle cx="752" cy="270" r="4" fill="#3a5a90"/><circle cx="742" cy="258" r="4" fill="#7ab040"/><circle cx="764" cy="257" r="4" fill="#d04858"/><circle cx="762.3" cy="251.5" r="4.2" fill="#5a8a30" stroke="#a0c060" stroke-width="0.6"/><circle cx="752" cy="239" r="4" fill="#4a80d0"/></svg>
<svg class="a" style="left:760px;top:275.0px" width="12" height="12" viewBox="0 0 12 12"><circle cx="7" cy="5" r="3.2" fill="none" stroke="#d9d9d9" stroke-width="1.3"/><circle cx="7" cy="5" r="1.5" fill="#d9d9d9"/><path d="M4.7 7.3 L1.5 10.5" stroke="#d9d9d9" stroke-width="1.5"/></svg>
<svg class="a" style="left:760px;top:290.5px" width="12" height="12" viewBox="0 0 12 12"><path d="M3 6 V3 M5 6V1.5 M7 6V2 M9 6.5V3.5 M2.5 7 Q2 11 6 11 Q9.5 11 9.5 6" stroke="#d9d9d9" stroke-width="1.5" fill="#d9d9d9" stroke-linecap="round"/></svg>
<svg class="a" style="left:760px;top:306.0px" width="12" height="12" viewBox="0 0 12 12"><circle cx="4" cy="3" r="2" fill="#d9d9d9"/><circle cx="8" cy="3" r="2" fill="#d9d9d9"/><rect x="2" y="5" width="7" height="4.5" fill="#d9d9d9"/><path d="M9 7 L11.5 5 V9.5Z" fill="#d9d9d9"/></svg>
<svg class="a" style="left:760px;top:321.5px" width="12" height="12" viewBox="0 0 12 12"><rect x="2.5" y="5.5" width="7" height="5" fill="none" stroke="#d9d9d9"/><path d="M4 5.5 V3 A2 2 0 0 1 8 3" stroke="#d9d9d9" fill="none"/></svg>
<svg class="a" style="left:772px;top:236px" width="6" height="8" viewBox="0 0 6 8"><path d="M4 1 L1 4 L4 7" stroke="#999" fill="none"/></svg>
<div class="a" style="left:776.5px;top:204px;width:1.5px;height:561px;background:#2a2a2a;"></div>
<!-- rv -->
<div class="a" style="left:777px;top:204px;width:548px;height:561px;background:#3c3c3c;"></div>
<svg class="a" style="left:0;top:0" width="1920" height="1080"><defs><clipPath id="rvclip"><rect x="778" y="204" width="547" height="560"/></clipPath></defs><g clip-path="url(#rvclip)"><rect x="778" y="204" width="547" height="561" fill="#404040"/><line x1="754" y1="480" x2="-66" y2="765" stroke="#474747" stroke-width="0.6"/><line x1="782" y1="480" x2="44" y2="765" stroke="#474747" stroke-width="0.6"/><line x1="810" y1="480" x2="154" y2="765" stroke="#474747" stroke-width="0.6"/><line x1="838" y1="480" x2="264" y2="765" stroke="#474747" stroke-width="0.6"/><line x1="866" y1="480" x2="374" y2="765" stroke="#474747" stroke-width="0.6"/><line x1="894" y1="480" x2="484" y2="765" stroke="#474747" stroke-width="0.6"/><line x1="922" y1="480" x2="594" y2="765" stroke="#474747" stroke-width="0.6"/><line x1="950" y1="480" x2="704" y2="765" stroke="#474747" stroke-width="0.6"/><line x1="978" y1="480" x2="814" y2="765" stroke="#474747" stroke-width="0.6"/><line x1="1006" y1="480" x2="924" y2="765" stroke="#474747" stroke-width="0.6"/><line x1="1034" y1="480" x2="1034" y2="765" stroke="#474747" stroke-width="0.6"/><line x1="1062" y1="480" x2="1144" y2="765" stroke="#474747" stroke-width="0.6"/><line x1="1090" y1="480" x2="1254" y2="765" stroke="#474747" stroke-width="0.6"/><line x1="1118" y1="480" x2="1364" y2="765" stroke="#474747" stroke-width="0.6"/><line x1="1146" y1="480" x2="1474" y2="765" stroke="#474747" stroke-width="0.6"/><line x1="1174" y1="480" x2="1584" y2="765" stroke="#474747" stroke-width="0.6"/><line x1="1202" y1="480" x2="1694" y2="765" stroke="#474747" stroke-width="0.6"/><line x1="1230" y1="480" x2="1804" y2="765" stroke="#474747" stroke-width="0.6"/><line x1="1258" y1="480" x2="1914" y2="765" stroke="#474747" stroke-width="0.6"/><line x1="1286" y1="480" x2="2024" y2="765" stroke="#474747" stroke-width="0.6"/><line x1="1314" y1="480" x2="2134" y2="765" stroke="#474747" stroke-width="0.6"/><line x1="1342" y1="480" x2="2244" y2="765" stroke="#474747" stroke-width="0.6"/><line x1="779" y1="500" x2="1325" y2="488" stroke="#464646" stroke-width="0.6"/><line x1="779" y1="522" x2="1325" y2="510" stroke="#464646" stroke-width="0.6"/><line x1="779" y1="548" x2="1325" y2="536" stroke="#464646" stroke-width="0.6"/><line x1="779" y1="580" x2="1325" y2="568" stroke="#464646" stroke-width="0.6"/><line x1="779" y1="620" x2="1325" y2="608" stroke="#464646" stroke-width="0.6"/><line x1="779" y1="670" x2="1325" y2="658" stroke="#464646" stroke-width="0.6"/><line x1="779" y1="735" x2="1325" y2="723" stroke="#464646" stroke-width="0.6"/><line x1="779" y1="690" x2="960" y2="620" stroke="#2a2a2a" stroke-width="0.6"/><line x1="779" y1="740" x2="963" y2="658" stroke="#2c2c2c" stroke-width="0.6"/><polygon points="873,480 1194,480 1192,611 876,619" fill="#4c4c4c" opacity="0.75"/><line x1="873" y1="380" x2="869.8" y2="617" stroke="#2e2e2e" stroke-width="0.8"/><line x1="902" y1="380" x2="899.4" y2="617" stroke="#2e2e2e" stroke-width="0.8"/><line x1="917" y1="380" x2="914.7" y2="617" stroke="#2e2e2e" stroke-width="0.8"/><line x1="933" y1="380" x2="931.0" y2="617" stroke="#2e2e2e" stroke-width="0.8"/><line x1="940" y1="380" x2="938.1" y2="617" stroke="#2e2e2e" stroke-width="0.8"/><line x1="962" y1="380" x2="960.6" y2="617" stroke="#2e2e2e" stroke-width="0.8"/><line x1="987" y1="380" x2="986.1" y2="617" stroke="#2e2e2e" stroke-width="0.8"/><line x1="1003" y1="380" x2="1002.4" y2="617" stroke="#2e2e2e" stroke-width="0.8"/><line x1="1034" y1="380" x2="1034.0" y2="617" stroke="#2e2e2e" stroke-width="0.8"/><line x1="1060" y1="380" x2="1060.5" y2="617" stroke="#2e2e2e" stroke-width="0.8"/><line x1="1076" y1="380" x2="1076.8" y2="617" stroke="#2e2e2e" stroke-width="0.8"/><line x1="1110" y1="380" x2="1111.5" y2="617" stroke="#2e2e2e" stroke-width="0.8"/><line x1="1121" y1="380" x2="1122.7" y2="617" stroke="#2e2e2e" stroke-width="0.8"/><line x1="1142" y1="380" x2="1144.2" y2="617" stroke="#2e2e2e" stroke-width="0.8"/><line x1="1155" y1="380" x2="1157.4" y2="617" stroke="#2e2e2e" stroke-width="0.8"/><line x1="1177" y1="380" x2="1179.9" y2="617" stroke="#2e2e2e" stroke-width="0.8"/><line x1="1192" y1="380" x2="1195.2" y2="617" stroke="#2e2e2e" stroke-width="0.8"/><line x1="890" y1="617" x2="868.4" y2="765" stroke="#2e2e2e" stroke-width="0.6"/><line x1="950" y1="617" x2="937.4" y2="765" stroke="#2e2e2e" stroke-width="0.6"/><line x1="1020" y1="617" x2="1017.9" y2="765" stroke="#2e2e2e" stroke-width="0.6"/><line x1="1090" y1="617" x2="1098.4" y2="765" stroke="#2e2e2e" stroke-width="0.6"/><line x1="1170" y1="617" x2="1190.4" y2="765" stroke="#2e2e2e" stroke-width="0.6"/><line x1="860" y1="230" x2="940" y2="300" stroke="#2c2c2c" stroke-width="0.6"/><line x1="880" y1="290" x2="960" y2="360" stroke="#2c2c2c" stroke-width="0.6"/><line x1="960" y1="228" x2="1030" y2="300" stroke="#2c2c2c" stroke-width="0.6"/><line x1="1050" y1="230" x2="1100" y2="310" stroke="#2c2c2c" stroke-width="0.6"/><line x1="1120" y1="300" x2="1190" y2="240" stroke="#2c2c2c" stroke-width="0.6"/><line x1="900" y1="380" x2="1000" y2="470" stroke="#2c2c2c" stroke-width="0.6"/><line x1="1080" y1="470" x2="1160" y2="385" stroke="#2c2c2c" stroke-width="0.6"/><line x1="960" y1="300" x2="1030" y2="240" stroke="#2c2c2c" stroke-width="0.6"/><line x1="1000" y1="410" x2="1050" y2="470" stroke="#2c2c2c" stroke-width="0.6"/><line x1="830" y1="430" x2="873" y2="470" stroke="#2c2c2c" stroke-width="0.6"/><line x1="779" y1="425" x2="860" y2="380" stroke="#2c2c2c" stroke-width="0.6"/><line x1="1230" y1="230" x2="1300" y2="430" stroke="#2c2c2c" stroke-width="0.6"/><polygon points="1285,227 1296,227 1290,320 1275,392 1269,379" fill="none" stroke="#1e1e1e" stroke-width="0.8"/><polygon points="1292,230 1300,232 1298,330 1280,394" fill="none" stroke="#1e1e1e" stroke-width="0.6"/><polygon points="1302,318 1306,345 1295,420 1290,430 1283,405" fill="none" stroke="#1e1e1e" stroke-width="0.8"/><polygon points="1305,345 1310,370 1300,430 1292,410" fill="none" stroke="#1e1e1e" stroke-width="0.6"/><polyline points="860.5,204 860.5,375" fill="none" stroke="#2bd5d8" stroke-width="1.885" opacity="1"/><polyline points="865,204 865,375" fill="none" stroke="#2bd5d8" stroke-width="1.885" opacity="1"/><polyline points="868.5,204 868.5,375" fill="none" stroke="#2bd5d8" stroke-width="1.885" opacity="1"/><polyline points="877.5,204 877.5,375" fill="none" stroke="#2bd5d8" stroke-width="1.885" opacity="1"/><polyline points="881,204 881,375" fill="none" stroke="#2bd5d8" stroke-width="1.885" opacity="1"/><polyline points="860,251.8 881,251.8" fill="none" stroke="#2bd5d8" stroke-width="3.19" opacity="1"/><polyline points="860,282.4 881,282.4" fill="none" stroke="#2bd5d8" stroke-width="3.19" opacity="1"/><polyline points="860,309.7 881,309.7" fill="none" stroke="#2bd5d8" stroke-width="3.19" opacity="1"/><polyline points="860,338.7 881,338.7" fill="none" stroke="#2bd5d8" stroke-width="3.19" opacity="1"/><polyline points="860,364.2 881,364.2" fill="none" stroke="#2bd5d8" stroke-width="3.19" opacity="1"/><polygon points="881,222 915,222 915,272 900,272" fill="#2bd5d8" opacity="0.55"/><polyline points="882,224.0 914,227.0" fill="none" stroke="#2bd5d8" stroke-width="1.595" opacity="1"/><polyline points="884,229.5 914,232.5" fill="none" stroke="#2bd5d8" stroke-width="1.595" opacity="1"/><polyline points="886,235.0 914,238.0" fill="none" stroke="#2bd5d8" stroke-width="1.595" opacity="1"/><polyline points="888,240.5 914,243.5" fill="none" stroke="#2bd5d8" stroke-width="1.595" opacity="1"/><polyline points="890,246.0 914,249.0" fill="none" stroke="#2bd5d8" stroke-width="1.595" opacity="1"/><polyline points="892,251.5 914,254.5" fill="none" stroke="#2bd5d8" stroke-width="1.595" opacity="1"/><polyline points="894,257.0 914,260.0" fill="none" stroke="#2bd5d8" stroke-width="1.595" opacity="1"/><polyline points="896,262.5 914,265.5" fill="none" stroke="#2bd5d8" stroke-width="1.595" opacity="1"/><polyline points="898,268.0 914,271.0" fill="none" stroke="#2bd5d8" stroke-width="1.595" opacity="1"/><polyline points="881,229 915,272" fill="none" stroke="#2bd5d8" stroke-width="2.9" opacity="1"/><polyline points="884,240 912,276" fill="none" stroke="#2bd5d8" stroke-width="1.885" opacity="1"/><rect x="916.5" y="228.8" width="44.200000000000045" height="33.19999999999999" fill="none" stroke="#2bd5d8" stroke-width="1.885"/><rect x="918.5" y="230.8" width="40.200000000000045" height="29.19999999999999" fill="none" stroke="#2bd5d8" stroke-width="1.508"/><polyline points="940,230 940,262" fill="none" stroke="#2bd5d8" stroke-width="1.74" opacity="1"/><polyline points="916,262 960,262 960,272 916,272" fill="none" stroke="#2bd5d8" stroke-width="2.175" opacity="1"/><rect x="981.2" y="228.8" width="46.799999999999955" height="35.19999999999999" fill="none" stroke="#2bd5d8" stroke-width="1.885"/><rect x="983.2" y="230.8" width="42.799999999999955" height="31.19999999999999" fill="none" stroke="#2bd5d8" stroke-width="1.508"/><polyline points="981.2,204 981.2,229" fill="none" stroke="#2bd5d8" stroke-width="1.885" opacity="1"/><polyline points="1028,204 1028,229" fill="none" stroke="#2bd5d8" stroke-width="1.885" opacity="1"/><polyline points="1047.7,204 1047.7,229" fill="none" stroke="#2bd5d8" stroke-width="1.885" opacity="1"/><polyline points="1094.5,204 1094.5,229" fill="none" stroke="#2bd5d8" stroke-width="1.885" opacity="1"/><polyline points="916.5,204 916.5,229" fill="none" stroke="#2bd5d8" stroke-width="1.885" opacity="1"/><polyline points="960.7,204 960.7,229" fill="none" stroke="#2bd5d8" stroke-width="1.885" opacity="1"/><polyline points="981,264 1028,264 1028,272 981,272 981,264" fill="none" stroke="#2bd5d8" stroke-width="2.175" opacity="1"/><rect x="1047.7" y="229.6" width="46.799999999999955" height="36.400000000000006" fill="none" stroke="#2bd5d8" stroke-width="1.885"/><rect x="1049.7" y="231.6" width="42.799999999999955" height="32.400000000000006" fill="none" stroke="#2bd5d8" stroke-width="1.508"/><polyline points="1047,266 1095,266 1095,275 1047,275 1047,266" fill="none" stroke="#2bd5d8" stroke-width="2.175" opacity="1"/><polyline points="860,272.5 1188,277" fill="none" stroke="#2bd5d8" stroke-width="3.19" opacity="1"/><polyline points="860,277 1188,281" fill="none" stroke="#2bd5d8" stroke-width="2.32" opacity="1"/><polyline points="860,281.5 1188,286" fill="none" stroke="#2bd5d8" stroke-width="2.9" opacity="1"/><rect x="915.6" y="289.3" width="46.799999999999955" height="73.19999999999999" fill="none" stroke="#2bd5d8" stroke-width="1.885"/><rect x="917.6" y="291.3" width="42.799999999999955" height="69.19999999999999" fill="none" stroke="#2bd5d8" stroke-width="1.508"/><polyline points="916,326.7 962,326.7" fill="none" stroke="#2bd5d8" stroke-width="2.9" opacity="1"/><polyline points="938,290 938,362" fill="none" stroke="#2bd5d8" stroke-width="1.595" opacity="1"/><rect x="982.9" y="290" width="45.10000000000002" height="74.19999999999999" fill="none" stroke="#2bd5d8" stroke-width="1.885"/><rect x="984.9" y="292" width="41.10000000000002" height="70.19999999999999" fill="none" stroke="#2bd5d8" stroke-width="1.508"/><polyline points="983,327.5 1028,327.5" fill="none" stroke="#2bd5d8" stroke-width="3.48" opacity="1"/><rect x="1047.7" y="291.8" width="46.0" height="74.19999999999999" fill="none" stroke="#2bd5d8" stroke-width="1.885"/><rect x="1049.7" y="293.8" width="42.0" height="70.19999999999999" fill="none" stroke="#2bd5d8" stroke-width="1.508"/><polyline points="1048,329.5 1094,329.5" fill="none" stroke="#2bd5d8" stroke-width="3.48" opacity="1"/><polyline points="884,291 914.7,335" fill="none" stroke="#2bd5d8" stroke-width="2.32" opacity="1"/><polyline points="888,289 916,330" fill="none" stroke="#2bd5d8" stroke-width="1.595" opacity="1"/><polyline points="883,291 883,366" fill="none" stroke="#2bd5d8" stroke-width="1.885" opacity="1"/><polyline points="887,295 887,366" fill="none" stroke="#2bd5d8" stroke-width="1.595" opacity="1"/><polygon points="1112,222 1188,222 1188,284 1112,284" fill="#2bd5d8" opacity="0.45"/><rect x="1114" y="236" width="41" height="32" fill="none" stroke="#2bd5d8" stroke-width="1.885"/><rect x="1116" y="238" width="37" height="28" fill="none" stroke="#2bd5d8" stroke-width="1.508"/><polyline points="1155,230 1138,284" fill="none" stroke="#2bd5d8" stroke-width="1.45" opacity="1"/><polyline points="1158,230 1141,284" fill="none" stroke="#2bd5d8" stroke-width="1.45" opacity="1"/><polyline points="1161,230 1144,284" fill="none" stroke="#2bd5d8" stroke-width="1.45" opacity="1"/><polyline points="1164,230 1147,284" fill="none" stroke="#2bd5d8" stroke-width="1.45" opacity="1"/><polyline points="1167,230 1150,284" fill="none" stroke="#2bd5d8" stroke-width="1.45" opacity="1"/><polyline points="1170,230 1153,284" fill="none" stroke="#2bd5d8" stroke-width="1.45" opacity="1"/><polyline points="1173,230 1156,284" fill="none" stroke="#2bd5d8" stroke-width="1.45" opacity="1"/><polyline points="1176,230 1159,284" fill="none" stroke="#2bd5d8" stroke-width="1.45" opacity="1"/><polyline points="1179,230 1162,284" fill="none" stroke="#2bd5d8" stroke-width="1.45" opacity="1"/><polyline points="1182,230 1165,284" fill="none" stroke="#2bd5d8" stroke-width="1.45" opacity="1"/><polyline points="1112,204 1112,368" fill="none" stroke="#2bd5d8" stroke-width="2.32" opacity="1"/><polyline points="1156,228 1156,300" fill="none" stroke="#2bd5d8" stroke-width="1.885" opacity="1"/><rect x="1111.5" y="296" width="44.299999999999955" height="71.60000000000002" fill="none" stroke="#2bd5d8" stroke-width="1.885"/><rect x="1113.5" y="298" width="40.299999999999955" height="67.60000000000002" fill="none" stroke="#2bd5d8" stroke-width="1.508"/><polyline points="1112,330 1155,330" fill="none" stroke="#2bd5d8" stroke-width="2.61" opacity="1"/><polyline points="1133,296 1133,367" fill="none" stroke="#2bd5d8" stroke-width="1.595" opacity="1"/><polyline points="1155,322 1176,299 1188,299" fill="none" stroke="#2bd5d8" stroke-width="2.03" opacity="1"/><polyline points="1152,366 1180,330 1181,297" fill="none" stroke="#2bd5d8" stroke-width="1.885" opacity="1"/><polyline points="1178,300 1178,370" fill="none" stroke="#2bd5d8" stroke-width="1.74" opacity="1"/><polyline points="1187,204 1187,377" fill="none" stroke="#2bd5d8" stroke-width="1.885" opacity="1"/><polyline points="1191,204 1191,377" fill="none" stroke="#2bd5d8" stroke-width="1.885" opacity="1"/><polyline points="1201,204 1201,377" fill="none" stroke="#2bd5d8" stroke-width="1.885" opacity="1"/><polyline points="1205,204 1205,377" fill="none" stroke="#2bd5d8" stroke-width="1.885" opacity="1"/><polyline points="1187,240 1205,240" fill="none" stroke="#2bd5d8" stroke-width="2.61" opacity="1"/><polyline points="1187,262 1205,262" fill="none" stroke="#2bd5d8" stroke-width="2.61" opacity="1"/><polyline points="1187,292 1205,292" fill="none" stroke="#2bd5d8" stroke-width="2.61" opacity="1"/><polyline points="1187,315 1205,315" fill="none" stroke="#2bd5d8" stroke-width="2.61" opacity="1"/><polyline points="1187,338 1205,338" fill="none" stroke="#2bd5d8" stroke-width="2.61" opacity="1"/><polyline points="1187,360 1205,360" fill="none" stroke="#2bd5d8" stroke-width="2.61" opacity="1"/><rect x="1215.5" y="225" width="28.90000000000009" height="142.60000000000002" fill="none" stroke="#2bd5d8" stroke-width="1.885"/><rect x="1217.5" y="227" width="24.90000000000009" height="138.60000000000002" fill="none" stroke="#2bd5d8" stroke-width="1.508"/><polyline points="1218,231.0 1242,231.0" fill="none" stroke="#2bd5d8" stroke-width="2.465" opacity="1"/><polyline points="1218,236.8 1242,236.8" fill="none" stroke="#2bd5d8" stroke-width="2.465" opacity="1"/><polyline points="1218,242.6 1242,242.6" fill="none" stroke="#2bd5d8" stroke-width="2.465" opacity="1"/><polyline points="1218,248.4 1242,248.4" fill="none" stroke="#2bd5d8" stroke-width="2.465" opacity="1"/><polyline points="1218,254.2 1242,254.2" fill="none" stroke="#2bd5d8" stroke-width="2.465" opacity="1"/><polyline points="1218,260.0 1242,260.0" fill="none" stroke="#2bd5d8" stroke-width="2.465" opacity="1"/><polyline points="1218,265.8 1242,265.8" fill="none" stroke="#2bd5d8" stroke-width="2.465" opacity="1"/><polyline points="1218,271.6 1242,271.6" fill="none" stroke="#2bd5d8" stroke-width="2.465" opacity="1"/><polyline points="1218,277.4 1242,277.4" fill="none" stroke="#2bd5d8" stroke-width="2.465" opacity="1"/><polyline points="1218,283.2 1242,283.2" fill="none" stroke="#2bd5d8" stroke-width="2.465" opacity="1"/><polyline points="1218,289.0 1242,289.0" fill="none" stroke="#2bd5d8" stroke-width="2.465" opacity="1"/><polyline points="1218,294.8 1242,294.8" fill="none" stroke="#2bd5d8" stroke-width="2.465" opacity="1"/><polyline points="1218,300.6 1242,300.6" fill="none" stroke="#2bd5d8" stroke-width="2.465" opacity="1"/><polyline points="1218,306.4 1242,306.4" fill="none" stroke="#2bd5d8" stroke-width="2.465" opacity="1"/><polyline points="1218,312.2 1242,312.2" fill="none" stroke="#2bd5d8" stroke-width="2.465" opacity="1"/><polyline points="1218,318.0 1242,318.0" fill="none" stroke="#2bd5d8" stroke-width="2.465" opacity="1"/><polyline points="1218,323.8 1242,323.8" fill="none" stroke="#2bd5d8" stroke-width="2.465" opacity="1"/><polyline points="1218,329.6 1242,329.6" fill="none" stroke="#2bd5d8" stroke-width="2.465" opacity="1"/><polyline points="1218,335.4 1242,335.4" fill="none" stroke="#2bd5d8" stroke-width="2.465" opacity="1"/><polyline points="1218,341.2 1242,341.2" fill="none" stroke="#2bd5d8" stroke-width="2.465" opacity="1"/><polyline points="1218,347.0 1242,347.0" fill="none" stroke="#2bd5d8" stroke-width="2.465" opacity="1"/><polyline points="1218,352.8 1242,352.8" fill="none" stroke="#2bd5d8" stroke-width="2.465" opacity="1"/><polyline points="1218,358.6 1242,358.6" fill="none" stroke="#2bd5d8" stroke-width="2.465" opacity="1"/><polyline points="1218,364.4 1242,364.4" fill="none" stroke="#2bd5d8" stroke-width="2.465" opacity="1"/><polyline points="1205,359 1216,359" fill="none" stroke="#2bd5d8" stroke-width="2.175" opacity="1"/><polyline points="860,366 1204,370" fill="none" stroke="#2bd5d8" stroke-width="3.19" opacity="1"/><polyline points="860,371 1204,375" fill="none" stroke="#2bd5d8" stroke-width="2.9" opacity="1"/><polyline points="862,376 1204,380" fill="none" stroke="#2bd5d8" stroke-width="2.175" opacity="1"/><polyline points="817,386.6 845,372.3 1216.8,379.5 1244,393.7 1030,389.2 817,386.6" fill="none" stroke="#2bd5d8" stroke-width="2.32" opacity="1"/><polyline points="817,386.6 917.6,426" fill="none" stroke="#2bd5d8" stroke-width="1.885" opacity="1"/><polyline points="817,388.5 1030,391" fill="none" stroke="#2bd5d8" stroke-width="1.595" opacity="1"/><polyline points="845,372.3 926.7,415.8" fill="none" stroke="#2bd5d8" stroke-width="1.885" opacity="1"/><polyline points="866,380 920,414" fill="none" stroke="#2bd5d8" stroke-width="1.45" opacity="1"/><polyline points="872,380 922,414" fill="none" stroke="#2bd5d8" stroke-width="1.45" opacity="1"/><polyline points="878,380 924,414" fill="none" stroke="#2bd5d8" stroke-width="1.45" opacity="1"/><polyline points="884,380 926,414" fill="none" stroke="#2bd5d8" stroke-width="1.45" opacity="1"/><polyline points="890,380 928,414" fill="none" stroke="#2bd5d8" stroke-width="1.45" opacity="1"/><polyline points="1244,393.7 1142.8,426.1" fill="none" stroke="#2bd5d8" stroke-width="1.885" opacity="1"/><polyline points="1216.8,379.5 1154.5,402.8" fill="none" stroke="#2bd5d8" stroke-width="1.885" opacity="1"/><polyline points="1200,382 1150,410" fill="none" stroke="#2bd5d8" stroke-width="1.45" opacity="1"/><polyline points="1192,382 1147,410" fill="none" stroke="#2bd5d8" stroke-width="1.45" opacity="1"/><polyline points="1184,382 1144,410" fill="none" stroke="#2bd5d8" stroke-width="1.45" opacity="1"/><polyline points="1176,382 1141,410" fill="none" stroke="#2bd5d8" stroke-width="1.45" opacity="1"/><polyline points="1168,382 1138,410" fill="none" stroke="#2bd5d8" stroke-width="1.45" opacity="1"/><polyline points="917,426 1143,426.8" fill="none" stroke="#2bd5d8" stroke-width="1.885" opacity="1"/><polyline points="927,416.5 1130,417" fill="none" stroke="#2bd5d8" stroke-width="1.885" opacity="1"/><polyline points="871.5,388.5 872.0,480.5" fill="none" stroke="#2bd5d8" stroke-width="2.03" opacity="1"/><polyline points="917,400 917.5,480.5" fill="none" stroke="#2bd5d8" stroke-width="2.03" opacity="1"/><polyline points="963.5,400 964.0,480.5" fill="none" stroke="#2bd5d8" stroke-width="2.03" opacity="1"/><polyline points="1111,402 1111.5,480.5" fill="none" stroke="#2bd5d8" stroke-width="2.03" opacity="1"/><polyline points="1154.7,402 1155.2,480.5" fill="none" stroke="#2bd5d8" stroke-width="2.03" opacity="1"/><polyline points="1195,388 1195.5,480.5" fill="none" stroke="#2bd5d8" stroke-width="2.03" opacity="1"/><polyline points="916.4,400.2 964,400.2" fill="none" stroke="#2bd5d8" stroke-width="2.03" opacity="1"/><polyline points="1110,402 1155,402" fill="none" stroke="#2bd5d8" stroke-width="2.03" opacity="1"/><rect x="874.9" y="405.4" width="32.39999999999998" height="49.30000000000001" fill="none" stroke="#2bd5d8" stroke-width="1.885"/><rect x="876.9" y="407.4" width="28.399999999999977" height="45.30000000000001" fill="none" stroke="#2bd5d8" stroke-width="1.508"/><rect x="930.6" y="408.6" width="22.100000000000023" height="40.89999999999998" fill="none" stroke="#2bd5d8" stroke-width="1.885"/><rect x="932.6" y="410.6" width="18.100000000000023" height="36.89999999999998" fill="none" stroke="#2bd5d8" stroke-width="1.508"/><polyline points="929.3,379.5 929.3,408 941,408 941,379.5" fill="none" stroke="#2bd5d8" stroke-width="1.74" opacity="1"/><rect x="930.6" y="467" width="22.100000000000023" height="9.699999999999989" fill="none" stroke="#2bd5d8" stroke-width="1.885"/><polyline points="920,449.5 930,449.5" fill="none" stroke="#2bd5d8" stroke-width="2.32" opacity="1"/><rect x="985.7" y="407.3" width="31.199999999999932" height="48.0" fill="none" stroke="#2bd5d8" stroke-width="1.885"/><rect x="987.7" y="409.3" width="27.199999999999932" height="44.0" fill="none" stroke="#2bd5d8" stroke-width="1.508"/><rect x="1060.5" y="408" width="30.5" height="46.69999999999999" fill="none" stroke="#2bd5d8" stroke-width="1.885"/><rect x="1062.5" y="410" width="26.5" height="42.69999999999999" fill="none" stroke="#2bd5d8" stroke-width="1.508"/><polyline points="1092.3,402.2 1111.7,479.3" fill="none" stroke="#2bd5d8" stroke-width="1.885" opacity="1"/><rect x="1121.4" y="411.9" width="20.799999999999955" height="38.900000000000034" fill="none" stroke="#2bd5d8" stroke-width="1.885"/><rect x="1123.4" y="413.9" width="16.799999999999955" height="34.900000000000034" fill="none" stroke="#2bd5d8" stroke-width="1.508"/><polyline points="1126,380 1126,412" fill="none" stroke="#2bd5d8" stroke-width="1.74" opacity="1"/><polyline points="1132,380 1132,412" fill="none" stroke="#2bd5d8" stroke-width="1.74" opacity="1"/><rect x="1121.4" y="467.7" width="20.799999999999955" height="8.300000000000011" fill="none" stroke="#2bd5d8" stroke-width="1.885"/><polyline points="1143,451 1152,451" fill="none" stroke="#2bd5d8" stroke-width="2.32" opacity="1"/><rect x="1163.6" y="410" width="28.5" height="45.30000000000001" fill="none" stroke="#2bd5d8" stroke-width="1.885"/><rect x="1165.6" y="412" width="24.5" height="41.30000000000001" fill="none" stroke="#2bd5d8" stroke-width="1.508"/><polyline points="1166,424.9 1194.7,480" fill="none" stroke="#2bd5d8" stroke-width="1.885" opacity="1"/><polyline points="1150,402 1170,450" fill="none" stroke="#2bd5d8" stroke-width="1.595" opacity="1"/><polygon points="860,204 881,204 881,376 860,376" fill="#2bd5d8" opacity="0.8"/><rect x="870.5" y="236" width="7" height="14" fill="#3a3a3a"/><rect x="863" y="238" width="3" height="10" fill="#3a4444" opacity="0.8"/><rect x="870.5" y="254" width="7" height="26" fill="#3a3a3a"/><rect x="863" y="256" width="3" height="22" fill="#3a4444" opacity="0.8"/><rect x="870.5" y="285" width="7" height="22" fill="#3a3a3a"/><rect x="863" y="287" width="3" height="18" fill="#3a4444" opacity="0.8"/><rect x="870.5" y="313" width="7" height="23" fill="#3a3a3a"/><rect x="863" y="315" width="3" height="19" fill="#3a4444" opacity="0.8"/><rect x="870.5" y="341" width="7" height="22" fill="#3a3a3a"/><rect x="863" y="343" width="3" height="18" fill="#3a4444" opacity="0.8"/><polyline points="883,284 883,366" fill="none" stroke="#2bd5d8" stroke-width="2.175" opacity="1"/><polyline points="889,296 889,366" fill="none" stroke="#2bd5d8" stroke-width="2.175" opacity="1"/><polyline points="886,292 916,336" fill="none" stroke="#2bd5d8" stroke-width="2.9" opacity="1"/><polyline points="891,292 916,328" fill="none" stroke="#2bd5d8" stroke-width="1.885" opacity="1"/><line x1="895" y1="284" x2="915" y2="312" stroke="#1a1a1a" stroke-width="2.5"/><polygon points="881,204 916,204 916,276 881,276" fill="#2bd5d8" opacity="0.7"/><line x1="890.0" y1="236.0" x2="913.0" y2="237.5" stroke="#2c3838" stroke-width="2"/><line x1="892.2" y1="241.6" x2="913.0" y2="243.1" stroke="#2c3838" stroke-width="2"/><line x1="894.4" y1="247.2" x2="913.0" y2="248.7" stroke="#2c3838" stroke-width="2"/><line x1="896.6" y1="252.8" x2="913.0" y2="254.3" stroke="#2c3838" stroke-width="2"/><line x1="898.8" y1="258.4" x2="913.0" y2="259.9" stroke="#2c3838" stroke-width="2"/><line x1="901.0" y1="264.0" x2="913.0" y2="265.5" stroke="#2c3838" stroke-width="2"/><line x1="903.2" y1="269.6" x2="913.0" y2="271.1" stroke="#2c3838" stroke-width="2"/><line x1="882" y1="250" x2="896" y2="272" stroke="#1f2424" stroke-width="2.5"/><polygon points="917,230 940,230 940,262 917,262" fill="#2bd5d8" opacity="0.55"/><rect x="930" y="235" width="4" height="24" fill="#2d3a3a"/><polygon points="860,272 1188,276.5 1188,287.5 860,284" fill="#2bd5d8" opacity="0.7"/><line x1="862" y1="279" x2="1186" y2="283" stroke="#2f4545" stroke-width="0.8"/><polygon points="860,365.5 1204,369.5 1204,380 862,376" fill="#2bd5d8" opacity="0.75"/><line x1="862" y1="371" x2="1202" y2="375" stroke="#2f4545" stroke-width="0.8"/><polygon points="1112,204 1188,204 1188,286 1112,286" fill="#2bd5d8" opacity="0.75"/><rect x="1121" y="240" width="30" height="24" fill="#2f4a4a" opacity="0.8"/><line x1="1125" y1="262" x2="1133" y2="242" stroke="#1f2a2a" stroke-width="1"/><line x1="1130" y1="262" x2="1138" y2="242" stroke="#1f2a2a" stroke-width="1"/><line x1="1135" y1="262" x2="1143" y2="242" stroke="#1f2a2a" stroke-width="1"/><line x1="1140" y1="262" x2="1148" y2="242" stroke="#1f2a2a" stroke-width="1"/><line x1="1145" y1="262" x2="1153" y2="242" stroke="#1f2a2a" stroke-width="1"/><line x1="1150" y1="262" x2="1158" y2="242" stroke="#1f2a2a" stroke-width="1"/><line x1="1158.0" y1="236" x2="1170.0" y2="232" stroke="#1f2a2a" stroke-width="1.8"/><line x1="1159.5" y1="242" x2="1171.5" y2="238" stroke="#1f2a2a" stroke-width="1.8"/><line x1="1161.0" y1="248" x2="1173.0" y2="244" stroke="#1f2a2a" stroke-width="1.8"/><line x1="1162.5" y1="254" x2="1174.5" y2="250" stroke="#1f2a2a" stroke-width="1.8"/><line x1="1164.0" y1="260" x2="1176.0" y2="256" stroke="#1f2a2a" stroke-width="1.8"/><line x1="1165.5" y1="266" x2="1177.5" y2="262" stroke="#1f2a2a" stroke-width="1.8"/><polygon points="1168,278 1186,262 1186,280" fill="#262626"/><line x1="1120" y1="288" x2="1120" y2="294" stroke="#2bd5d8" stroke-width="1.2"/><line x1="1123" y1="288" x2="1123" y2="294" stroke="#2bd5d8" stroke-width="1.2"/><line x1="1126" y1="288" x2="1126" y2="294" stroke="#2bd5d8" stroke-width="1.2"/><line x1="1129" y1="288" x2="1129" y2="294" stroke="#2bd5d8" stroke-width="1.2"/><line x1="1132" y1="288" x2="1132" y2="294" stroke="#2bd5d8" stroke-width="1.2"/><line x1="1135" y1="288" x2="1135" y2="294" stroke="#2bd5d8" stroke-width="1.2"/><line x1="1138" y1="288" x2="1138" y2="294" stroke="#2bd5d8" stroke-width="1.2"/><line x1="1141" y1="288" x2="1141" y2="294" stroke="#2bd5d8" stroke-width="1.2"/><line x1="1144" y1="288" x2="1144" y2="294" stroke="#2bd5d8" stroke-width="1.2"/><line x1="1147" y1="288" x2="1147" y2="294" stroke="#2bd5d8" stroke-width="1.2"/><line x1="1150" y1="288" x2="1150" y2="294" stroke="#2bd5d8" stroke-width="1.2"/><line x1="1153" y1="288" x2="1153" y2="294" stroke="#2bd5d8" stroke-width="1.2"/><line x1="900" y1="286" x2="900" y2="292" stroke="#2bd5d8" stroke-width="1"/><line x1="903" y1="286" x2="903" y2="292" stroke="#2bd5d8" stroke-width="1"/><line x1="906" y1="286" x2="906" y2="292" stroke="#2bd5d8" stroke-width="1"/><line x1="909" y1="286" x2="909" y2="292" stroke="#2bd5d8" stroke-width="1"/><line x1="912" y1="286" x2="912" y2="292" stroke="#2bd5d8" stroke-width="1"/><line x1="915" y1="286" x2="915" y2="292" stroke="#2bd5d8" stroke-width="1"/><line x1="918" y1="286" x2="918" y2="292" stroke="#2bd5d8" stroke-width="1"/><line x1="921" y1="286" x2="921" y2="292" stroke="#2bd5d8" stroke-width="1"/><line x1="924" y1="286" x2="924" y2="292" stroke="#2bd5d8" stroke-width="1"/><line x1="927" y1="286" x2="927" y2="292" stroke="#2bd5d8" stroke-width="1"/><line x1="930" y1="286" x2="930" y2="292" stroke="#2bd5d8" stroke-width="1"/><line x1="933" y1="286" x2="933" y2="292" stroke="#2bd5d8" stroke-width="1"/><polygon points="1187,204 1206,204 1206,378 1187,378" fill="#2bd5d8" opacity="0.72"/><rect x="1193" y="248" width="6" height="110" fill="#3a4040" opacity="0.7"/><rect x="1192" y="262" width="8" height="3" fill="#2bd5d8"/><rect x="1192" y="292" width="8" height="3" fill="#2bd5d8"/><rect x="1192" y="315" width="8" height="3" fill="#2bd5d8"/><rect x="1192" y="338" width="8" height="3" fill="#2bd5d8"/><rect x="1206" y="243" width="7" height="118" fill="#3a3a3a"/><polygon points="1216,204 1245,204 1245,368 1216,368" fill="#2bd5d8" opacity="0.85"/><rect x="1222" y="236.0" width="15" height="3" fill="#383838"/><rect x="1222" y="243.5" width="15" height="3" fill="#383838"/><rect x="1222" y="251.0" width="15" height="3" fill="#383838"/><rect x="1222" y="258.5" width="15" height="3" fill="#383838"/><rect x="1222" y="266.0" width="15" height="3" fill="#383838"/><rect x="1222" y="273.5" width="15" height="3" fill="#383838"/><rect x="1222" y="281.0" width="15" height="3" fill="#383838"/><rect x="1222" y="288.5" width="15" height="3" fill="#383838"/><rect x="1222" y="296.0" width="15" height="3" fill="#383838"/><rect x="1222" y="303.5" width="15" height="3" fill="#383838"/><rect x="1222" y="311.0" width="15" height="3" fill="#383838"/><rect x="1222" y="318.5" width="15" height="3" fill="#383838"/><rect x="1222" y="326.0" width="15" height="3" fill="#383838"/><rect x="1222" y="333.5" width="15" height="3" fill="#383838"/><rect x="1222" y="341.0" width="15" height="3" fill="#383838"/><rect x="1222" y="348.5" width="15" height="3" fill="#383838"/><rect x="1222" y="356.0" width="15" height="3" fill="#383838"/><polygon points="1112,296 1133,296 1133,367 1112,367" fill="#2bd5d8" opacity="0.45"/><polyline points="1140,300 1140,366" fill="none" stroke="#2bd5d8" stroke-width="1.74" opacity="1"/><polyline points="852,376 918,418" fill="none" stroke="#2bd5d8" stroke-width="1.305" opacity="1"/><polyline points="858,376 920,418" fill="none" stroke="#2bd5d8" stroke-width="1.305" opacity="1"/><polyline points="864,376 922,418" fill="none" stroke="#2bd5d8" stroke-width="1.305" opacity="1"/><polyline points="870,376 924,418" fill="none" stroke="#2bd5d8" stroke-width="1.305" opacity="1"/><polyline points="876,376 926,418" fill="none" stroke="#2bd5d8" stroke-width="1.305" opacity="1"/><polyline points="882,376 928,418" fill="none" stroke="#2bd5d8" stroke-width="1.305" opacity="1"/><polyline points="1210,380 1145,418" fill="none" stroke="#2bd5d8" stroke-width="1.305" opacity="1"/><polyline points="1203,380 1143,418" fill="none" stroke="#2bd5d8" stroke-width="1.305" opacity="1"/><polyline points="1196,380 1141,418" fill="none" stroke="#2bd5d8" stroke-width="1.305" opacity="1"/><polyline points="1189,380 1139,418" fill="none" stroke="#2bd5d8" stroke-width="1.305" opacity="1"/><polyline points="1182,380 1137,418" fill="none" stroke="#2bd5d8" stroke-width="1.305" opacity="1"/><polyline points="1175,380 1135,418" fill="none" stroke="#2bd5d8" stroke-width="1.305" opacity="1"/><polyline points="920,402 920.5,480" fill="none" stroke="#2bd5d8" stroke-width="1.305" opacity="1"/><polyline points="966.5,402 967.0,480" fill="none" stroke="#2bd5d8" stroke-width="1.305" opacity="1"/><polyline points="1114,402 1114.5,480" fill="none" stroke="#2bd5d8" stroke-width="1.305" opacity="1"/><polyline points="1157.7,402 1158.2,480" fill="none" stroke="#2bd5d8" stroke-width="1.305" opacity="1"/><line x1="779" y1="485.8" x2="1325" y2="484" stroke="#2a2a2a" stroke-width="0.7"/><polyline points="876.7,618.8 935,556.8" fill="none" stroke="#cfc49a" stroke-width="1"/><polyline points="920.6,617.3 1191.8,610.7" fill="none" stroke="#c8a850" stroke-width="1.3"/><polyline points="1124,553.4 1191.6,610.5" fill="none" stroke="#cfc49a" stroke-width="1"/><polyline points="876.7,619 920.6,617.3" fill="none" stroke="#cfcfcf" stroke-width="1.2"/><line x1="953.5" y1="765" x2="1007.5" y2="531" stroke="#6a3c40" stroke-width="0.7"/><line x1="1034.5" y1="204" x2="1034.5" y2="765" stroke="#7aa2cc" stroke-width="1.2"/></g></svg>
<div class="a" style="left:778px;top:204px;width:547px;height:13px;background:rgba(44,44,44,0.88);"></div>
<div class="a" style="left:778px;top:217px;width:547px;height:12px;background:rgba(44,44,44,0.55);"></div>
<div class="t" style="left:783.7px;top:220.92px;font-size:6px;color:#d0d0d0;">D: -5.534 m (5.534 m) along global Z</div>
<svg class="a" style="left:783px;top:205px" width="14" height="11" viewBox="0 0 14 11"><path d="M3 9 L3 6 A3 3 0 0 1 9 6 L9 9 M2 9H10 M6 1 V3 M4 3 H8" stroke="#ccc" fill="none" stroke-width="1.1"/><path d="M10 5 L11 6 L12 5" stroke="#ccc" fill="none"/></svg>
<svg class="a" style="left:801px;top:205px" width="10" height="11" viewBox="0 0 10 11"><rect x="1" y="2" width="4" height="4" fill="none" stroke="#ccc"/><rect x="6" y="1" width="3" height="3" fill="#ddd"/><path d="M1 9 H8 V6" stroke="#ccc" fill="none"/></svg>
<div class="t" style="left:812.5px;top:208.22px;font-size:6px;color:#dddddd;">Edit Mode</div>
<svg class="a" style="left:841px;top:208px" width="6" height="5" viewBox="0 0 6 5"><path d="M1 1 L3 3 L5 1" stroke="#bbb" fill="none"/></svg>
<div class="a" style="left:850px;top:206px;width:9px;height:10px;background:#3a3a3a;border-radius:2px 0 0 2px;"></div>
<div class="a" style="left:859px;top:206px;width:9px;height:10px;background:#4772b3;"></div>
<div class="a" style="left:868px;top:206px;width:9px;height:10px;background:#3a3a3a;border-radius:0 2px 2px 0;"></div>
<svg class="a" style="left:852px;top:208px" width="6" height="6" viewBox="0 0 6 6"><rect x="0.5" y="0.5" width="5" height="5" fill="none" stroke="#ddd"/><circle cx="1" cy="4.5" r="1" fill="#fff"/></svg>
<svg class="a" style="left:861px;top:207px" width="6" height="8" viewBox="0 0 6 8"><rect x="0.5" y="0.5" width="5" height="7" fill="none" stroke="#ddd"/><rect x="2" y="1" width="2" height="7" fill="#fff"/></svg>
<svg class="a" style="left:870px;top:207px" width="7" height="8" viewBox="0 0 7 8"><rect x="0.5" y="1.5" width="5" height="6" fill="#ddd"/><rect x="1.5" y="0.5" width="5" height="6" fill="none" stroke="#999"/></svg>
<div class="t" style="left:884px;top:208.22px;font-size:6px;color:#d6d6d6;">View</div>
<div class="t" style="left:904px;top:208.22px;font-size:6px;color:#d6d6d6;">Select</div>
<div class="t" style="left:928px;top:208.22px;font-size:6px;color:#d6d6d6;">Add</div>
<div class="t" style="left:945.5px;top:208.22px;font-size:6px;color:#d6d6d6;">Mesh</div>
<div class="t" style="left:967.5px;top:208.22px;font-size:6px;color:#d6d6d6;">Vertex</div>
<div class="t" style="left:991.5px;top:208.22px;font-size:6px;color:#d6d6d6;">Edge</div>
<div class="t" style="left:1012.5px;top:208.22px;font-size:6px;color:#d6d6d6;">Face</div>
<div class="t" style="left:1032.5px;top:208.22px;font-size:6px;color:#d6d6d6;">UV</div>
<svg class="a" style="left:1052px;top:206px" width="10" height="10" viewBox="0 0 10 10"><path d="M2 1 V8 H9" stroke="#ddd" fill="none" stroke-width="1.2"/><path d="M2 8 L6 4" stroke="#ddd"/><circle cx="8" cy="3" r="1.2" fill="#ddd"/></svg>
<div class="t" style="left:1064px;top:208.22px;font-size:6px;color:#dddddd;">Global</div>
<svg class="a" style="left:1085px;top:208px" width="6" height="5" viewBox="0 0 6 5"><path d="M1 1 L3 3 L5 1" stroke="#bbb" fill="none"/></svg>
<svg class="a" style="left:1094px;top:206px" width="13" height="10" viewBox="0 0 13 10"><rect x="1.5" y="1.5" width="7" height="7" fill="none" stroke="#ccc" stroke-dasharray="2 1.5"/><circle cx="5" cy="5" r="1.2" fill="#ddd"/><path d="M10 4 L11 5 L12 4" stroke="#bbb" fill="none"/></svg>
<div class="a" style="left:1110px;top:206px;width:10px;height:10px;background:#555;border-radius:2px 0 0 2px;"></div>
<div class="a" style="left:1120px;top:206px;width:13px;height:10px;background:#444;border-radius:0 2px 2px 0;"></div>
<svg class="a" style="left:1111px;top:207px" width="12" height="9" viewBox="0 0 12 9"><circle cx="4" cy="4" r="3" fill="none" stroke="#999"/><path d="M6 9 L11 6" stroke="#ccc"/></svg>
<div class="a" style="left:1138px;top:206px;width:10px;height:10px;background:#555;border-radius:2px;"></div>
<svg class="a" style="left:1140px;top:208px" width="6" height="6" viewBox="0 0 6 6"><circle cx="3" cy="3" r="2.5" fill="none" stroke="#ccc"/><circle cx="3" cy="3" r="1" fill="#ddd"/></svg>
<svg class="a" style="left:1149px;top:207px" width="10" height="9" viewBox="0 0 10 9"><path d="M1 8 Q5 0 9 8" stroke="#666" fill="none"/></svg>
<svg class="a" style="left:1186px;top:206px" width="13" height="10" viewBox="0 0 13 10"><path d="M2 8 L5 4 M4 2 A2.5 2.5 0 1 1 8 5 L6 6Z" stroke="#ddd" fill="#ccc"/><path d="M10 4 L11 5 L12 4" stroke="#bbb" fill="none"/></svg>
<div class="a" style="left:1204px;top:206px;width:11px;height:10px;background:#4772b3;border-radius:2px;"></div>
<svg class="a" style="left:1205px;top:207px" width="9" height="9" viewBox="0 0 9 9"><path d="M1 8 L8 1 M4 1 H8 V5 M1 4 L4 7" stroke="#cfe0ff" fill="none" stroke-width="1.1"/></svg>
<svg class="a" style="left:1216px;top:208px" width="6" height="5" viewBox="0 0 6 5"><path d="M1 1 L3 3 L5 1" stroke="#bbb" fill="none"/></svg>
<div class="a" style="left:1226px;top:206px;width:11px;height:10px;background:#4772b3;border-radius:2px;"></div>
<svg class="a" style="left:1227px;top:207px" width="9" height="9" viewBox="0 0 9 9"><circle cx="4.5" cy="4.5" r="3.5" fill="#dfe8ff"/><circle cx="3.5" cy="5" r="2" fill="#4772b3"/></svg>
<svg class="a" style="left:1238px;top:208px" width="6" height="5" viewBox="0 0 6 5"><path d="M1 1 L3 3 L5 1" stroke="#bbb" fill="none"/></svg>
<svg class="a" style="left:1246px;top:206px" width="13" height="10" viewBox="0 0 13 10"><rect x="1" y="2" width="6" height="6" fill="none" stroke="#ccc"/><rect x="4" y="0.5" width="4" height="4" fill="#ddd"/><path d="M10 4 L11 5 L12 4" stroke="#bbb" fill="none"/></svg>
<div class="a" style="left:1262px;top:206px;width:10px;height:10px;background:#4772b3;border-radius:2px;"></div>
<svg class="a" style="left:1263px;top:207px" width="9" height="9" viewBox="0 0 9 9"><rect x="1" y="1" width="5" height="5" fill="none" stroke="#dfe8ff"/><rect x="3" y="3" width="5" height="5" fill="none" stroke="#dfe8ff"/></svg>
<div class="a" style="left:1274px;top:206px;width:10px;height:10px;background:#4772b3;border-radius:2px 0 0 2px;"></div>
<svg class="a" style="left:1275px;top:207px" width="9" height="9" viewBox="0 0 9 9"><circle cx="4.5" cy="4.5" r="3.5" fill="none" stroke="#eef"/><path d="M1 4.5H8M4.5 1V8" stroke="#eef"/></svg>
<div class="a" style="left:1284px;top:206px;width:29px;height:10px;background:#3a3a3a;border-radius:0 2px 2px 0;"></div>
<svg class="a" style="left:1285px;top:207px" width="28" height="9" viewBox="0 0 28 9"><circle cx="4" cy="4.5" r="3.5" fill="#aaa"/><circle cx="13.5" cy="4.5" r="3.5" fill="#888"/><path d="M13.5 1 A3.5 3.5 0 0 1 13.5 8Z" fill="#ccc"/><circle cx="23" cy="4.5" r="3.5" fill="#777"/><circle cx="22" cy="4" r="2" fill="#bbb"/></svg>
<svg class="a" style="left:1315px;top:208px" width="6" height="5" viewBox="0 0 6 5"><path d="M1 1 L3 3 L5 1" stroke="#bbb" fill="none"/></svg>
<div class="t" style="left:810px;top:234.52px;font-size:6px;color:#ffffff;font-weight:bold;">User Perspective</div>
<div class="t" style="left:810px;top:243.72px;font-size:6px;color:#ffffff;font-weight:bold;">(30) Object008</div>
<div class="a" style="left:782px;top:234px;width:20px;height:33px;background:rgba(36,36,36,0.92);border-radius:3px;"></div>
<div class="a" style="left:782px;top:234px;width:20px;height:16px;background:#4772b3;border-radius:3px 3px 0 0;"></div>
<svg class="a" style="left:786px;top:236px" width="12" height="12" viewBox="0 0 12 12"><rect x="1.5" y="1.5" width="9" height="9" fill="none" stroke="#9cc0ee" stroke-dasharray="1.5 1"/><path d="M4.5 3.5 L8.5 6 L6 6.3 L5.2 8.5Z" fill="#fff"/></svg>
<svg class="a" style="left:786px;top:253px" width="12" height="12" viewBox="0 0 12 12"><circle cx="6" cy="6" r="4" fill="none" stroke="#d9d9d9" stroke-dasharray="2 1"/><path d="M6 1V4M6 8V11M1 6H4M8 6H11" stroke="#d9d9d9"/></svg>
<div class="a" style="left:782px;top:270px;width:20px;height:66px;background:rgba(36,36,36,0.92);border-radius:3px;"></div>
<svg class="a" style="left:786px;top:272px" width="12" height="12" viewBox="0 0 12 12"><path d="M6 1V11M1 6H11M6 1L4.5 2.8M6 1L7.5 2.8M6 11L4.5 9.2M6 11L7.5 9.2M1 6L2.8 4.5M1 6L2.8 7.5M11 6L9.2 4.5M11 6L9.2 7.5" stroke="#d9d9d9" fill="none"/></svg>
<svg class="a" style="left:786px;top:289px" width="12" height="12" viewBox="0 0 12 12"><circle cx="6" cy="6" r="4" fill="none" stroke="#d9d9d9" stroke-dasharray="3 1.5"/><circle cx="6" cy="6" r="1.2" fill="#d9d9d9"/></svg>
<svg class="a" style="left:786px;top:306px" width="12" height="12" viewBox="0 0 12 12"><rect x="1.5" y="5.5" width="5" height="5" fill="#d9d9d9"/><path d="M4.5 1.5H10.5V7.5" fill="none" stroke="#d9d9d9"/></svg>
<svg class="a" style="left:786px;top:322px" width="12" height="12" viewBox="0 0 12 12"><circle cx="6" cy="6" r="4.5" fill="none" stroke="#d9d9d9" stroke-dasharray="2 1"/><rect x="3.5" y="3.5" width="5" height="5" fill="#d9d9d9"/></svg>
<div class="a" style="left:782px;top:338px;width:20px;height:33px;background:rgba(36,36,36,0.92);border-radius:3px;"></div>
<svg class="a" style="left:786px;top:340px" width="12" height="12" viewBox="0 0 12 12"><path d="M2 8 L8 2 L9 3 L3 9Z" fill="#d9d9d9"/><path d="M3 10 Q7 6 10 10" stroke="#d9d9d9" fill="none"/></svg>
<svg class="a" style="left:786px;top:357px" width="12" height="12" viewBox="0 0 12 12"><path d="M2 1V11H11" stroke="#d9d9d9" fill="none" stroke-width="1.4"/><path d="M4 10 A6 6 0 0 1 10 5 V10Z" fill="#8fd1b0"/></svg>
<div class="a" style="left:782px;top:374px;width:20px;height:17px;background:rgba(36,36,36,0.92);border-radius:3px;"></div>
<svg class="a" style="left:786px;top:376px" width="12" height="12" viewBox="0 0 12 12"><path d="M3 4 L8 4 L10 2 L5 2Z M3 4V10H8V4 M8 10L10 8V2" stroke="#d9d9d9" fill="none"/><path d="M1 1.5H3M2 0.5V2.5" stroke="#d9d9d9"/></svg>
<div class="a" style="left:782px;top:393px;width:20px;height:199px;background:rgba(36,36,36,0.92);border-radius:3px;"></div>
<svg class="a" style="left:786px;top:395px" width="12" height="12" viewBox="0 0 12 12"><path d="M2 4 L8 4 L10 2 L4 2Z" fill="#8fd1b0"/><path d="M2 4V6H8V4M2 6V10H8V6M8 10L10 8V2" stroke="#d9d9d9" fill="none"/><rect x="2" y="2.5" width="7" height="3" fill="#8fd1b0"/></svg>
<svg class="a" style="left:786px;top:412px" width="12" height="12" viewBox="0 0 12 12"><rect x="1.5" y="1.5" width="9" height="9" fill="none" stroke="#d9d9d9"/><rect x="3.5" y="3.5" width="5" height="5" fill="#8fd1b0"/></svg>
<svg class="a" style="left:786px;top:428px" width="12" height="12" viewBox="0 0 12 12"><path d="M2 5 L4 3 H9 L10 5Z" fill="#8fd1b0"/><path d="M2 5V10H9V5M9 10L10 9V5" stroke="#d9d9d9" fill="none"/></svg>
<svg class="a" style="left:786px;top:445px" width="12" height="12" viewBox="0 0 12 12"><path d="M2 3H8L10 1.5V9L8 10.5H2Z M8 3V10.5 M5 3V10.5" stroke="#d9d9d9" fill="none"/></svg>
<svg class="a" style="left:786px;top:462px" width="12" height="12" viewBox="0 0 12 12"><path d="M2 3H8L10 1.5V9L8 10.5H2Z M3 10.5L7 3" stroke="#d9d9d9" fill="none"/></svg>
<svg class="a" style="left:786px;top:478px" width="12" height="12" viewBox="0 0 12 12"><path d="M3 4 L6 2 L9 4 L10 8 L6 10 L2 8Z" fill="#8fd1b0"/></svg>
<svg class="a" style="left:786px;top:495px" width="12" height="12" viewBox="0 0 12 12"><circle cx="6" cy="6" r="4.5" fill="#8fd1b0"/><path d="M6 6V1.5M6 6L10 8M6 6L2 8M6 6L9.5 3" stroke="#2a2a2a" stroke-width="0.8"/></svg>
<svg class="a" style="left:786px;top:512px" width="12" height="12" viewBox="0 0 12 12"><circle cx="6" cy="6.5" r="4" fill="#cdb8e0"/><path d="M2.5 6H9.5M3 8H9" stroke="#a590c0" stroke-width="0.7"/></svg>
<svg class="a" style="left:786px;top:528px" width="12" height="12" viewBox="0 0 12 12"><path d="M3 4 L8 4 L10 2 L5 2Z M3 4V10H8V4 M8 10L10 8V2" stroke="#d9d9d9" fill="none"/><path d="M1 1.5H3M2 0.5V2.5" stroke="#d9d9d9"/><rect x="3" y="4" width="2" height="6" fill="#d9d9d9"/></svg>
<svg class="a" style="left:786px;top:545px" width="12" height="12" viewBox="0 0 12 12"><circle cx="6" cy="6" r="2.3" fill="none" stroke="#d9d9d9"/><path d="M6 1V3M6 9V11M1 6H3M9 6H11M6 1L5 2M6 1L7 2" stroke="#d9d9d9" fill="none"/></svg>
<svg class="a" style="left:786px;top:561px" width="12" height="12" viewBox="0 0 12 12"><path d="M1.5 8 L5 3 L10.5 5 L7 10Z" fill="#cdb8e0"/><path d="M10 1.5V3.5M9 2.5H11" stroke="#d9d9d9"/></svg>
<svg class="a" style="left:786px;top:578px" width="12" height="12" viewBox="0 0 12 12"><path d="M3 4 L8 4 L10 2 L5 2Z M3 4V10H8V4 M8 10L10 8V2" stroke="#d9d9d9" fill="none"/><path d="M1 7 L3 6" stroke="#d9d9d9"/></svg>
<svg class="a" style="left:0;top:0" width="1920" height="1080"><line x1="1300.5" y1="255" x2="1300.5" y2="239" stroke="#5a80c0" stroke-width="1.2"/><line x1="1300.5" y1="255" x2="1284.5" y2="255" stroke="#9ab040" stroke-width="1.2"/><circle cx="1316" cy="254.6" r="4" fill="#6a7a3a"/><circle cx="1300.3" cy="270.4" r="4" fill="#3a5a90"/><circle cx="1284.3" cy="255" r="4.2" fill="#8ab430"/><circle cx="1301" cy="255" r="4.2" fill="#c0404c"/><circle cx="1300.3" cy="238.3" r="4" fill="#4a80d0"/></svg>
<div class="a" style="left:1307px;top:275.0px;width:14px;height:14px;background:rgba(30,30,30,0.5);border-radius:7px;"></div>
<svg class="a" style="left:1308px;top:276.0px" width="12" height="12" viewBox="0 0 12 12"><circle cx="7" cy="5" r="3.2" fill="none" stroke="#d9d9d9" stroke-width="1.3"/><circle cx="7" cy="5" r="1.5" fill="#d9d9d9"/><path d="M4.7 7.3 L1.5 10.5" stroke="#d9d9d9" stroke-width="1.5"/></svg>
<div class="a" style="left:1307px;top:290.5px;width:14px;height:14px;background:rgba(30,30,30,0.5);border-radius:7px;"></div>
<svg class="a" style="left:1308px;top:291.5px" width="12" height="12" viewBox="0 0 12 12"><path d="M3 6 V3 M5 6V1.5 M7 6V2 M9 6.5V3.5 M2.5 7 Q2 11 6 11 Q9.5 11 9.5 6" stroke="#d9d9d9" stroke-width="1.5" fill="#d9d9d9" stroke-linecap="round"/></svg>
<div class="a" style="left:1307px;top:306.0px;width:14px;height:14px;background:rgba(30,30,30,0.5);border-radius:7px;"></div>
<svg class="a" style="left:1308px;top:307.0px" width="12" height="12" viewBox="0 0 12 12"><circle cx="4" cy="3" r="2" fill="#d9d9d9"/><circle cx="8" cy="3" r="2" fill="#d9d9d9"/><rect x="2" y="5" width="7" height="4.5" fill="#d9d9d9"/><path d="M9 7 L11.5 5 V9.5Z" fill="#d9d9d9"/></svg>
<div class="a" style="left:1307px;top:321.5px;width:14px;height:14px;background:rgba(30,30,30,0.5);border-radius:7px;"></div>
<svg class="a" style="left:1308px;top:322.5px" width="12" height="12" viewBox="0 0 12 12"><rect x="2.5" y="5.5" width="7" height="5" fill="none" stroke="#d9d9d9"/><path d="M4 5.5 V3 A2 2 0 0 1 8 3" stroke="#d9d9d9" fill="none"/></svg>
<svg class="a" style="left:1320px;top:237px" width="6" height="8" viewBox="0 0 6 8"><path d="M4 1 L1 4 L4 7" stroke="#999" fill="none"/></svg>
<svg class="a" style="left:1014px;top:680px" width="12" height="12" viewBox="0 0 12 12"><path d="M6 1 L8 3 M6 1 L4 3 M6 11 L8 9 M6 11 L4 9 M1 6 L3 4 M1 6 L3 8 M11 6 L9 4 M11 6 L9 8" stroke="#eee" fill="none" stroke-width="1.1"/></svg>
<div class="a" style="left:777.5px;top:204px;width:1px;height:561px;background:#5e5e5e;"></div>
<div class="a" style="left:778px;top:763.5px;width:547px;height:1px;background:#5a5a5a;"></div>
<!-- ol -->
<div class="a" style="left:1326px;top:204px;width:274px;height:328px;background:#282828;"></div>
<div class="a" style="left:1326px;top:204px;width:274px;height:13px;background:#2d2d2d;"></div>
<svg class="a" style="left:1332px;top:206px" width="13" height="10" viewBox="0 0 13 10"><path d="M1 1 V9 M1 3 H4 M4 2 H9 M4 5 H9 M1 7 H4 M4 7 H9" stroke="#ddd" fill="none" stroke-width="1.2"/><path d="M10 5 L11 6 L12 5" stroke="#aaa" fill="none"/></svg>
<svg class="a" style="left:1350px;top:206px" width="13" height="10" viewBox="0 0 13 10"><rect x="0.5" y="1" width="8" height="7" fill="none" stroke="#bbb"/><rect x="2" y="3" width="4" height="3" fill="#999"/><path d="M10 5 L11 6 L12 5" stroke="#aaa" fill="none"/></svg>
<div class="a" style="left:1430px;top:206px;width:56px;height:10px;background:#1f1f1f;border-radius:3px;"></div>
<svg class="a" style="left:1431px;top:206px" width="10" height="10" viewBox="0 0 10 10"><circle cx="6" cy="4" r="2.8" fill="none" stroke="#ccc" stroke-width="1.1"/><path d="M4 6 L1 9.5" stroke="#ccc" stroke-width="1.2"/></svg>
<div class="t" style="left:1441.5px;top:208.42px;font-size:6px;color:#777;">Search</div>
<svg class="a" style="left:1573px;top:206px" width="12" height="10" viewBox="0 0 12 10"><path d="M1 1 H8 L5 5 V9 L4 8 V5Z" fill="none" stroke="#ccc" stroke-width="1"/><path d="M9 5 L10 6 L11 5" stroke="#aaa" fill="none"/></svg>
<div class="a" style="left:1587px;top:206px;width:9px;height:10px;background:#3a3a3a;border-radius:2px;"></div>
<svg class="a" style="left:1588px;top:207px" width="8" height="9" viewBox="0 0 8 9"><rect x="0.5" y="2" width="6" height="6" fill="none" stroke="#bbb"/><circle cx="6" cy="2" r="1.6" fill="#ddd"/></svg>
<div class="a" style="left:1326px;top:227px;width:274px;height:10px;background:#2b2b2b;"></div>
<div class="a" style="left:1326px;top:247px;width:274px;height:10px;background:#2b2b2b;"></div>
<div class="a" style="left:1326px;top:266px;width:274px;height:10px;background:#2b2b2b;"></div>
<div class="a" style="left:1326px;top:286px;width:274px;height:10px;background:#2b2b2b;"></div>
<div class="a" style="left:1326px;top:305px;width:274px;height:10px;background:#2b2b2b;"></div>
<div class="a" style="left:1326px;top:324px;width:274px;height:10px;background:#2b2b2b;"></div>
<div class="a" style="left:1326px;top:344px;width:274px;height:10px;background:#2b2b2b;"></div>
<div class="a" style="left:1326px;top:363px;width:274px;height:10px;background:#2b2b2b;"></div>
<div class="a" style="left:1326px;top:383px;width:274px;height:10px;background:#2b2b2b;"></div>
<div class="a" style="left:1326px;top:402px;width:274px;height:10px;background:#2b2b2b;"></div>
<div class="a" style="left:1326px;top:421px;width:274px;height:10px;background:#2b2b2b;"></div>
<div class="a" style="left:1326px;top:441px;width:274px;height:10px;background:#2b2b2b;"></div>
<div class="a" style="left:1326px;top:460px;width:274px;height:10px;background:#2b2b2b;"></div>
<div class="a" style="left:1326px;top:480px;width:274px;height:10px;background:#2b2b2b;"></div>
<div class="a" style="left:1326px;top:499px;width:274px;height:10px;background:#2b2b2b;"></div>
<div class="a" style="left:1326px;top:518px;width:274px;height:10px;background:#2b2b2b;"></div>
<div class="a" style="left:1340.5px;top:237px;width:1px;height:295px;background:#3c3c3c;"></div>
<div class="a" style="left:1350.5px;top:246px;width:1px;height:180px;background:#3c3c3c;"></div>
<div class="a" style="left:1360.5px;top:256px;width:1px;height:48px;background:#3c3c3c;"></div>
<div class="a" style="left:1326px;top:256px;width:274px;height:10px;background:#3a5a98;"></div>
<div class="a" style="left:1326px;top:256px;width:12px;height:10px;background:#4262a0;"></div>
<div class="a" style="left:1330px;top:309px;width:2px;height:2px;background:#ddd;"></div>
<div class="a" style="left:1330px;top:338px;width:2px;height:2px;background:#ddd;"></div>
<div class="a" style="left:1330px;top:348px;width:2px;height:2px;background:#ddd;"></div>
<div class="a" style="left:1330px;top:386px;width:2px;height:2px;background:#ddd;"></div>
<div class="a" style="left:1330px;top:396px;width:2px;height:2px;background:#ddd;"></div>
<div class="a" style="left:1330px;top:416px;width:2px;height:2px;background:#ddd;"></div>
<div class="a" style="left:1330px;top:425px;width:2px;height:2px;background:#ddd;"></div>
<div class="a" style="left:1330px;top:512px;width:2px;height:2px;background:#ddd;"></div>
<div class="a" style="left:1330px;top:532px;width:2px;height:2px;background:#ddd;"></div>
<svg class="a" style="left:1328px;top:257px" width="9" height="9" viewBox="0 0 9 9"><rect x="0.5" y="3" width="6" height="4.5" fill="none" stroke="#cde"/><rect x="5" y="0.5" width="3" height="3" fill="#eef"/></svg>
<svg class="a" style="left:1337px;top:218px" width="9" height="9" viewBox="0 0 9 9"><rect x="0.5" y="0.5" width="8" height="2" fill="#e0e0e0"/><rect x="0.5" y="3" width="8" height="5.5" fill="#e0e0e0"/><rect x="3" y="4.5" width="3" height="1.2" fill="#555"/></svg>
<div class="t" style="left:1347px;top:219.62px;font-size:6px;color:#d8d8d8;">Scene Collection</div>
<svg class="a" style="left:1337px;top:230.5px" width="7" height="5" viewBox="0 0 7 5"><path d="M1 1.5 L3.5 4 L6 1.5" stroke="#aaa" fill="none" stroke-width="1"/></svg>
<svg class="a" style="left:1347px;top:228px" width="9" height="9" viewBox="0 0 9 9"><rect x="0.5" y="0.5" width="8" height="2" fill="#e0e0e0"/><rect x="0.5" y="3" width="8" height="5.5" fill="#e0e0e0"/><rect x="3" y="4.5" width="3" height="1.2" fill="#555"/></svg>
<div class="t" style="left:1357px;top:229.32px;font-size:6px;color:#d8d8d8;">HotelBuilding</div>
<svg class="a" style="left:1566.5px;top:228.5px" width="8" height="8" viewBox="0 0 8 8"><rect x="0" y="0" width="8" height="8" fill="#e8e8e8" rx="1"/><path d="M1.5 4 L3.5 6 L6.5 2" stroke="#333" fill="none" stroke-width="1.2"/></svg>
<svg class="a" style="left:1576px;top:228.5px" width="9" height="8" viewBox="0 0 9 8"><path d="M0.5 4 Q4.5 -0.5 8.5 4 Q4.5 8.5 0.5 4Z" fill="none" stroke="#d8d8d8" stroke-width="1"/><circle cx="4.5" cy="4" r="1.5" fill="#d8d8d8"/></svg>
<svg class="a" style="left:1586px;top:228px" width="9" height="9" viewBox="0 0 9 9"><rect x="0.5" y="2" width="8" height="6" fill="#d8d8d8" rx="1"/><rect x="3" y="0.5" width="3" height="2" fill="#d8d8d8"/><circle cx="4.5" cy="5" r="1.6" fill="#2a2a2a"/></svg>
<svg class="a" style="left:1347px;top:239.5px" width="7" height="5" viewBox="0 0 7 5"><path d="M1 1.5 L3.5 4 L6 1.5" stroke="#aaa" fill="none" stroke-width="1"/></svg>
<svg class="a" style="left:1357px;top:237px" width="9" height="9" viewBox="0 0 9 9"><rect x="0.5" y="0.5" width="8" height="2" fill="#e0e0e0"/><rect x="0.5" y="3" width="8" height="5.5" fill="#e0e0e0"/><rect x="3" y="4.5" width="3" height="1.2" fill="#555"/></svg>
<div class="t" style="left:1367px;top:239.02px;font-size:6px;color:#d8d8d8;">Hotel Building Old</div>
<svg class="a" style="left:1566.5px;top:237.5px" width="8" height="8" viewBox="0 0 8 8"><rect x="0" y="0" width="8" height="8" fill="#e8e8e8" rx="1"/><path d="M1.5 4 L3.5 6 L6.5 2" stroke="#333" fill="none" stroke-width="1.2"/></svg>
<svg class="a" style="left:1576px;top:237.5px" width="9" height="8" viewBox="0 0 9 8"><path d="M0.5 4 Q4.5 -0.5 8.5 4 Q4.5 8.5 0.5 4Z" fill="none" stroke="#d8d8d8" stroke-width="1"/><circle cx="4.5" cy="4" r="1.5" fill="#d8d8d8"/></svg>
<svg class="a" style="left:1586px;top:237px" width="9" height="9" viewBox="0 0 9 9"><rect x="0.5" y="2" width="8" height="6" fill="#d8d8d8" rx="1"/><rect x="3" y="0.5" width="3" height="2" fill="#d8d8d8"/><circle cx="4.5" cy="5" r="1.6" fill="#2a2a2a"/></svg>
<svg class="a" style="left:1357px;top:249.5px" width="7" height="5" viewBox="0 0 7 5"><path d="M1 1.5 L3.5 4 L6 1.5" stroke="#aaa" fill="none" stroke-width="1"/></svg>
<svg class="a" style="left:1366px;top:247px" width="9" height="9" viewBox="0 0 9 9"><path d="M1 8 L4 4.5 H8 M4 4.5 V1" stroke="#e8a050" fill="none" stroke-width="1.3"/></svg>
<svg class="a" style="left:1377px;top:247px" width="9" height="9" viewBox="0 0 9 9"><path d="M1 8 V3 L4 1 L7 3 V8Z M3 8 V5 H5 V8" stroke="#ddd" fill="#bbb" stroke-width="0.8"/></svg>
<div class="t" style="left:1389px;top:248.72px;font-size:6px;color:#d8d8d8;">Hotel Building Old</div>
<svg class="a" style="left:1576px;top:247.5px" width="9" height="8" viewBox="0 0 9 8"><path d="M0.5 4 Q4.5 -0.5 8.5 4 Q4.5 8.5 0.5 4Z" fill="none" stroke="#d8d8d8" stroke-width="1"/><circle cx="4.5" cy="4" r="1.5" fill="#d8d8d8"/></svg>
<svg class="a" style="left:1586px;top:247px" width="9" height="9" viewBox="0 0 9 9"><rect x="0.5" y="2" width="8" height="6" fill="#d8d8d8" rx="1"/><rect x="3" y="0.5" width="3" height="2" fill="#d8d8d8"/><circle cx="4.5" cy="5" r="1.6" fill="#2a2a2a"/></svg>
<div class="a" style="left:1376px;top:256.5px;width:11px;height:10px;background:#5a6e98;border-radius:2px;"></div>
<svg class="a" style="left:1367px;top:259.5px" width="7" height="5" viewBox="0 0 7 5"><path d="M1 1.5 L3.5 4 L6 1.5" stroke="#aaa" fill="none" stroke-width="1"/></svg>
<svg class="a" style="left:1377px;top:257px" width="9" height="9" viewBox="0 0 9 9"><path d="M1 1.5 H8 L4.5 8Z" fill="none" stroke="#e8a050" stroke-width="1.5"/><circle cx="4.5" cy="3.5" r="0.9" fill="#e8a050"/></svg>
<div class="t" style="left:1387px;top:258.42px;font-size:6px;color:#f0a888;">Object008</div>
<svg class="a" style="left:1576px;top:257.5px" width="9" height="8" viewBox="0 0 9 8"><path d="M0.5 4 Q4.5 -0.5 8.5 4 Q4.5 8.5 0.5 4Z" fill="none" stroke="#d8d8d8" stroke-width="1"/><circle cx="4.5" cy="4" r="1.5" fill="#d8d8d8"/></svg>
<svg class="a" style="left:1586px;top:257px" width="9" height="9" viewBox="0 0 9 9"><rect x="0.5" y="2" width="8" height="6" fill="#d8d8d8" rx="1"/><rect x="3" y="0.5" width="3" height="2" fill="#d8d8d8"/><circle cx="4.5" cy="5" r="1.6" fill="#2a2a2a"/></svg>
<svg class="a" style="left:1378px;top:267.5px" width="5" height="7" viewBox="0 0 5 7"><path d="M1.5 1 L4 3.5 L1.5 6" stroke="#aaa" fill="none" stroke-width="1"/></svg>
<svg class="a" style="left:1387px;top:266px" width="9" height="9" viewBox="0 0 9 9"><path d="M1 1 H6 L1 7 H8" stroke="#ddd" fill="none" stroke-width="1.1"/></svg>
<div class="t" style="left:1397px;top:268.12px;font-size:6px;color:#d8d8d8;">Animation</div>
<svg class="a" style="left:1440.68171875px;top:266px" width="9" height="9" viewBox="0 0 9 9"><circle cx="1.5" cy="1.5" r="1" fill="#ccc"/><circle cx="4.5" cy="1.5" r="1" fill="#ccc"/><circle cx="7.5" cy="1.5" r="1" fill="#ccc"/><text x="3" y="8" font-size="5" fill="#aaa" font-family="Liberation Sans">0</text></svg>
<svg class="a" style="left:1377px;top:278.5px" width="7" height="5" viewBox="0 0 7 5"><path d="M1 1.5 L3.5 4 L6 1.5" stroke="#aaa" fill="none" stroke-width="1"/></svg>
<svg class="a" style="left:1387px;top:276px" width="9" height="9" viewBox="0 0 9 9"><path d="M1 1.5 H8 L4.5 8Z" fill="none" stroke="#3cc890" stroke-width="1.2"/><circle cx="1" cy="1.5" r="1" fill="#3cc890"/><circle cx="8" cy="1.5" r="1" fill="#3cc890"/><circle cx="4.5" cy="8" r="1" fill="#3cc890"/></svg>
<div class="t" style="left:1397px;top:277.82px;font-size:6px;color:#d8d8d8;">网格.010</div>
<svg class="a" style="left:1397px;top:286px" width="9" height="9" viewBox="0 0 9 9"><circle cx="4.5" cy="4.5" r="3.8" fill="#c04a60"/><path d="M1.5 5.5 Q4.5 2 7.5 4" stroke="#f0a0b0" fill="none" stroke-width="1"/></svg>
<div class="t" style="left:1407px;top:287.52px;font-size:6px;color:#d8d8d8;">材质.001</div>
<svg class="a" style="left:1397px;top:296px" width="9" height="9" viewBox="0 0 9 9"><circle cx="4.5" cy="4.5" r="3.8" fill="#c04a60"/><path d="M1.5 5.5 Q4.5 2 7.5 4" stroke="#f0a0b0" fill="none" stroke-width="1"/></svg>
<div class="t" style="left:1407px;top:297.22px;font-size:6px;color:#d8d8d8;">材质</div>
<svg class="a" style="left:1348px;top:306.5px" width="5" height="7" viewBox="0 0 5 7"><path d="M1.5 1 L4 3.5 L1.5 6" stroke="#aaa" fill="none" stroke-width="1"/></svg>
<svg class="a" style="left:1357px;top:305px" width="9" height="9" viewBox="0 0 9 9"><path d="M1 1.5 H8 L4.5 8Z" fill="none" stroke="#e8a050" stroke-width="1.5"/><circle cx="4.5" cy="3.5" r="0.9" fill="#e8a050"/></svg>
<div class="t" style="left:1367px;top:306.92px;font-size:6px;color:#d8d8d8;">BackWall</div>
<svg class="a" style="left:1400.7828125px;top:305px" width="9" height="9" viewBox="0 0 9 9"><path d="M1 1.5 H8 L4.5 8Z" fill="none" stroke="#3cc890" stroke-width="1.2"/><circle cx="1" cy="1.5" r="1" fill="#3cc890"/><circle cx="8" cy="1.5" r="1" fill="#3cc890"/><circle cx="4.5" cy="8" r="1" fill="#3cc890"/></svg>
<svg class="a" style="left:1576px;top:305.5px" width="9" height="8" viewBox="0 0 9 8"><path d="M0.5 4 Q4.5 -0.5 8.5 4 Q4.5 8.5 0.5 4Z" fill="none" stroke="#d8d8d8" stroke-width="1"/><circle cx="4.5" cy="4" r="1.5" fill="#d8d8d8"/></svg>
<svg class="a" style="left:1586px;top:305px" width="9" height="9" viewBox="0 0 9 9"><rect x="0.5" y="2" width="8" height="6" fill="#d8d8d8" rx="1"/><rect x="3" y="0.5" width="3" height="2" fill="#d8d8d8"/><circle cx="4.5" cy="5" r="1.6" fill="#2a2a2a"/></svg>
<svg class="a" style="left:1348px;top:316.5px" width="5" height="7" viewBox="0 0 5 7"><path d="M1.5 1 L4 3.5 L1.5 6" stroke="#aaa" fill="none" stroke-width="1"/></svg>
<svg class="a" style="left:1357px;top:315px" width="9" height="9" viewBox="0 0 9 9"><circle cx="4.5" cy="3.5" r="3" fill="#e8a050"/><rect x="3" y="6.5" width="3" height="2" fill="#e8a050"/><rect x="3.5" y="3" width="2" height="1" fill="#2a2a2a"/></svg>
<div class="t" style="left:1367px;top:316.62px;font-size:6px;color:#d8d8d8;">BottomRWindow</div>
<svg class="a" style="left:1420.5734375px;top:315px" width="9" height="9" viewBox="0 0 9 9"><path d="M2 7 A3.5 3.5 0 1 1 7 7 M3 2 L6 5 L3 8" stroke="#3cc890" fill="none" stroke-width="1.1"/></svg>
<svg class="a" style="left:1576px;top:315.5px" width="9" height="8" viewBox="0 0 9 8"><path d="M0.5 4 Q4.5 -0.5 8.5 4 Q4.5 8.5 0.5 4Z" fill="none" stroke="#d8d8d8" stroke-width="1"/><circle cx="4.5" cy="4" r="1.5" fill="#d8d8d8"/></svg>
<svg class="a" style="left:1586px;top:315px" width="9" height="9" viewBox="0 0 9 9"><rect x="0.5" y="2" width="8" height="6" fill="#d8d8d8" rx="1"/><rect x="3" y="0.5" width="3" height="2" fill="#d8d8d8"/><circle cx="4.5" cy="5" r="1.6" fill="#2a2a2a"/></svg>
<svg class="a" style="left:1348px;top:326.5px" width="5" height="7" viewBox="0 0 5 7"><path d="M1.5 1 L4 3.5 L1.5 6" stroke="#aaa" fill="none" stroke-width="1"/></svg>
<svg class="a" style="left:1357px;top:325px" width="9" height="9" viewBox="0 0 9 9"><circle cx="4.5" cy="3.5" r="3" fill="#e8a050"/><rect x="3" y="6.5" width="3" height="2" fill="#e8a050"/><rect x="3.5" y="3" width="2" height="1" fill="#2a2a2a"/></svg>
<div class="t" style="left:1367px;top:326.32px;font-size:6px;color:#d8d8d8;">Light</div>
<svg class="a" style="left:1389.01109375px;top:325px" width="9" height="9" viewBox="0 0 9 9"><path d="M2 7 A3.5 3.5 0 1 1 7 7 M3 2 L6 5 L3 8" stroke="#3cc890" fill="none" stroke-width="1.1"/></svg>
<svg class="a" style="left:1576px;top:325.5px" width="9" height="8" viewBox="0 0 9 8"><path d="M0.5 4 Q4.5 -0.5 8.5 4 Q4.5 8.5 0.5 4Z" fill="none" stroke="#d8d8d8" stroke-width="1"/><circle cx="4.5" cy="4" r="1.5" fill="#d8d8d8"/></svg>
<svg class="a" style="left:1586px;top:325px" width="9" height="9" viewBox="0 0 9 9"><rect x="0.5" y="2" width="8" height="6" fill="#d8d8d8" rx="1"/><rect x="3" y="0.5" width="3" height="2" fill="#d8d8d8"/><circle cx="4.5" cy="5" r="1.6" fill="#2a2a2a"/></svg>
<svg class="a" style="left:1348px;top:335.5px" width="5" height="7" viewBox="0 0 5 7"><path d="M1.5 1 L4 3.5 L1.5 6" stroke="#aaa" fill="none" stroke-width="1"/></svg>
<svg class="a" style="left:1357px;top:334px" width="9" height="9" viewBox="0 0 9 9"><path d="M1 1.5 H8 L4.5 8Z" fill="none" stroke="#e8a050" stroke-width="1.5"/><circle cx="4.5" cy="3.5" r="0.9" fill="#e8a050"/></svg>
<div class="t" style="left:1367px;top:336.02px;font-size:6px;color:#d8d8d8;">MemoryLeft</div>
<svg class="a" style="left:1407.67671875px;top:334px" width="9" height="9" viewBox="0 0 9 9"><path d="M1 1.5 H8 L4.5 8Z" fill="none" stroke="#3cc890" stroke-width="1.2"/><circle cx="1" cy="1.5" r="1" fill="#3cc890"/><circle cx="8" cy="1.5" r="1" fill="#3cc890"/><circle cx="4.5" cy="8" r="1" fill="#3cc890"/></svg>
<svg class="a" style="left:1576px;top:334.5px" width="9" height="8" viewBox="0 0 9 8"><path d="M0.5 4 Q4.5 -0.5 8.5 4 Q4.5 8.5 0.5 4Z" fill="none" stroke="#d8d8d8" stroke-width="1"/><circle cx="4.5" cy="4" r="1.5" fill="#d8d8d8"/></svg>
<svg class="a" style="left:1586px;top:334px" width="9" height="9" viewBox="0 0 9 9"><rect x="0.5" y="2" width="8" height="6" fill="#d8d8d8" rx="1"/><rect x="3" y="0.5" width="3" height="2" fill="#d8d8d8"/><circle cx="4.5" cy="5" r="1.6" fill="#2a2a2a"/></svg>
<svg class="a" style="left:1347px;top:346.5px" width="7" height="5" viewBox="0 0 7 5"><path d="M1 1.5 L3.5 4 L6 1.5" stroke="#aaa" fill="none" stroke-width="1"/></svg>
<svg class="a" style="left:1357px;top:344px" width="9" height="9" viewBox="0 0 9 9"><path d="M1 1.5 H8 L4.5 8Z" fill="none" stroke="#e8a050" stroke-width="1.5"/><circle cx="4.5" cy="3.5" r="0.9" fill="#e8a050"/></svg>
<div class="t" style="left:1367px;top:345.72px;font-size:6px;color:#d8d8d8;">MemoryRight</div>
<svg class="a" style="left:1576px;top:344.5px" width="9" height="8" viewBox="0 0 9 8"><path d="M0.5 4 Q4.5 -0.5 8.5 4 Q4.5 8.5 0.5 4Z" fill="none" stroke="#d8d8d8" stroke-width="1"/><circle cx="4.5" cy="4" r="1.5" fill="#d8d8d8"/></svg>
<svg class="a" style="left:1586px;top:344px" width="9" height="9" viewBox="0 0 9 9"><rect x="0.5" y="2" width="8" height="6" fill="#d8d8d8" rx="1"/><rect x="3" y="0.5" width="3" height="2" fill="#d8d8d8"/><circle cx="4.5" cy="5" r="1.6" fill="#2a2a2a"/></svg>
<svg class="a" style="left:1357px;top:356.5px" width="7" height="5" viewBox="0 0 7 5"><path d="M1 1.5 L3.5 4 L6 1.5" stroke="#aaa" fill="none" stroke-width="1"/></svg>
<svg class="a" style="left:1367px;top:354px" width="9" height="9" viewBox="0 0 9 9"><path d="M1 1.5 H8 L4.5 8Z" fill="none" stroke="#3cc890" stroke-width="1.2"/><circle cx="1" cy="1.5" r="1" fill="#3cc890"/><circle cx="8" cy="1.5" r="1" fill="#3cc890"/><circle cx="4.5" cy="8" r="1" fill="#3cc890"/></svg>
<div class="t" style="left:1377px;top:355.42px;font-size:6px;color:#d8d8d8;">chang-duong-SjDlMtq_Z4w-unsplash</div>
<svg class="a" style="left:1377px;top:364px" width="9" height="9" viewBox="0 0 9 9"><circle cx="4.5" cy="4.5" r="3.8" fill="#c04a60"/><path d="M1.5 5.5 Q4.5 2 7.5 4" stroke="#f0a0b0" fill="none" stroke-width="1"/></svg>
<div class="t" style="left:1387px;top:365.12px;font-size:6px;color:#d8d8d8;">chang-duong-SjDlMtq_Z4w-unsplash</div>
<svg class="a" style="left:1348px;top:374.5px" width="5" height="7" viewBox="0 0 5 7"><path d="M1.5 1 L4 3.5 L1.5 6" stroke="#aaa" fill="none" stroke-width="1"/></svg>
<svg class="a" style="left:1357px;top:373px" width="9" height="9" viewBox="0 0 9 9"><circle cx="4.5" cy="3.5" r="3" fill="#e8a050"/><rect x="3" y="6.5" width="3" height="2" fill="#e8a050"/><rect x="3.5" y="3" width="2" height="1" fill="#2a2a2a"/></svg>
<div class="t" style="left:1367px;top:374.82px;font-size:6px;color:#d8d8d8;">MiddleLWindow</div>
<svg class="a" style="left:1417.90765625px;top:373px" width="9" height="9" viewBox="0 0 9 9"><path d="M2 7 A3.5 3.5 0 1 1 7 7 M3 2 L6 5 L3 8" stroke="#3cc890" fill="none" stroke-width="1.1"/></svg>
<svg class="a" style="left:1576px;top:373.5px" width="9" height="8" viewBox="0 0 9 8"><path d="M0.5 4 Q4.5 -0.5 8.5 4 Q4.5 8.5 0.5 4Z" fill="none" stroke="#d8d8d8" stroke-width="1"/><circle cx="4.5" cy="4" r="1.5" fill="#d8d8d8"/></svg>
<svg class="a" style="left:1586px;top:373px" width="9" height="9" viewBox="0 0 9 9"><rect x="0.5" y="2" width="8" height="6" fill="#d8d8d8" rx="1"/><rect x="3" y="0.5" width="3" height="2" fill="#d8d8d8"/><circle cx="4.5" cy="5" r="1.6" fill="#2a2a2a"/></svg>
<svg class="a" style="left:1348px;top:384.5px" width="5" height="7" viewBox="0 0 5 7"><path d="M1.5 1 L4 3.5 L1.5 6" stroke="#666" fill="none" stroke-width="1"/></svg>
<svg class="a" style="left:1357px;top:383px" width="9" height="9" viewBox="0 0 9 9"><path d="M1 1.5 H8 L4.5 8Z" fill="none" stroke="#8a6a40" stroke-width="1.5"/><circle cx="4.5" cy="3.5" r="0.9" fill="#8a6a40"/></svg>
<div class="t" style="left:1367px;top:384.52px;font-size:6px;color:#7a7a7a;">Plane.001</div>
<svg class="a" style="left:1403.024375px;top:383px" width="9" height="9" viewBox="0 0 9 9"><path d="M1 1.5 H8 L4.5 8Z" fill="none" stroke="#3cc890" stroke-width="1.2"/><circle cx="1" cy="1.5" r="1" fill="#3cc890"/><circle cx="8" cy="1.5" r="1" fill="#3cc890"/><circle cx="4.5" cy="8" r="1" fill="#3cc890"/></svg>
<svg class="a" style="left:1576px;top:384px" width="9" height="8" viewBox="0 0 9 8"><path d="M0.5 3 Q4.5 7 8.5 3" stroke="#888" fill="none"/></svg>
<svg class="a" style="left:1586px;top:383px" width="9" height="9" viewBox="0 0 9 9"><rect x="0.5" y="2" width="8" height="6" fill="#d8d8d8" rx="1"/><rect x="3" y="0.5" width="3" height="2" fill="#d8d8d8"/><circle cx="4.5" cy="5" r="1.6" fill="#2a2a2a"/></svg>
<svg class="a" style="left:1348px;top:394.5px" width="5" height="7" viewBox="0 0 5 7"><path d="M1.5 1 L4 3.5 L1.5 6" stroke="#666" fill="none" stroke-width="1"/></svg>
<svg class="a" style="left:1357px;top:393px" width="9" height="9" viewBox="0 0 9 9"><path d="M1 1.5 H8 L4.5 8Z" fill="none" stroke="#8a6a40" stroke-width="1.5"/><circle cx="4.5" cy="3.5" r="0.9" fill="#8a6a40"/></svg>
<div class="t" style="left:1367px;top:394.22px;font-size:6px;color:#7a7a7a;">Plane.002</div>
<svg class="a" style="left:1403.024375px;top:393px" width="9" height="9" viewBox="0 0 9 9"><path d="M1 1.5 H8 L4.5 8Z" fill="none" stroke="#3cc890" stroke-width="1.2"/><circle cx="1" cy="1.5" r="1" fill="#3cc890"/><circle cx="8" cy="1.5" r="1" fill="#3cc890"/><circle cx="4.5" cy="8" r="1" fill="#3cc890"/></svg>
<svg class="a" style="left:1576px;top:394px" width="9" height="8" viewBox="0 0 9 8"><path d="M0.5 3 Q4.5 7 8.5 3" stroke="#888" fill="none"/></svg>
<svg class="a" style="left:1586px;top:393px" width="9" height="9" viewBox="0 0 9 9"><rect x="0.5" y="2" width="8" height="6" fill="#d8d8d8" rx="1"/><rect x="3" y="0.5" width="3" height="2" fill="#d8d8d8"/><circle cx="4.5" cy="5" r="1.6" fill="#2a2a2a"/></svg>
<svg class="a" style="left:1348px;top:403.5px" width="5" height="7" viewBox="0 0 5 7"><path d="M1.5 1 L4 3.5 L1.5 6" stroke="#aaa" fill="none" stroke-width="1"/></svg>
<svg class="a" style="left:1357px;top:402px" width="9" height="9" viewBox="0 0 9 9"><circle cx="4.5" cy="3.5" r="3" fill="#e8a050"/><rect x="3" y="6.5" width="3" height="2" fill="#e8a050"/><rect x="3.5" y="3" width="2" height="1" fill="#2a2a2a"/></svg>
<div class="t" style="left:1367px;top:403.92px;font-size:6px;color:#d8d8d8;">TopRWindow</div>
<svg class="a" style="left:1411.23921875px;top:402px" width="9" height="9" viewBox="0 0 9 9"><path d="M2 7 A3.5 3.5 0 1 1 7 7 M3 2 L6 5 L3 8" stroke="#3cc890" fill="none" stroke-width="1.1"/></svg>
<svg class="a" style="left:1576px;top:402.5px" width="9" height="8" viewBox="0 0 9 8"><path d="M0.5 4 Q4.5 -0.5 8.5 4 Q4.5 8.5 0.5 4Z" fill="none" stroke="#d8d8d8" stroke-width="1"/><circle cx="4.5" cy="4" r="1.5" fill="#d8d8d8"/></svg>
<svg class="a" style="left:1586px;top:402px" width="9" height="9" viewBox="0 0 9 9"><rect x="0.5" y="2" width="8" height="6" fill="#d8d8d8" rx="1"/><rect x="3" y="0.5" width="3" height="2" fill="#d8d8d8"/><circle cx="4.5" cy="5" r="1.6" fill="#2a2a2a"/></svg>
<svg class="a" style="left:1348px;top:413.5px" width="5" height="7" viewBox="0 0 5 7"><path d="M1.5 1 L4 3.5 L1.5 6" stroke="#aaa" fill="none" stroke-width="1"/></svg>
<svg class="a" style="left:1357px;top:412px" width="9" height="9" viewBox="0 0 9 9"><path d="M1 1.5 H8 L4.5 8Z" fill="none" stroke="#e8a050" stroke-width="1.5"/><circle cx="4.5" cy="3.5" r="0.9" fill="#e8a050"/></svg>
<div class="t" style="left:1367px;top:413.62px;font-size:6px;color:#d8d8d8;">TopSignBg</div>
<svg class="a" style="left:1405.02265625px;top:412px" width="9" height="9" viewBox="0 0 9 9"><path d="M1.5 8 L6 3.5 M5.5 1.5 A2 2 0 1 1 7.5 3.5" stroke="#6a7ad0" fill="none" stroke-width="1.4"/></svg>
<svg class="a" style="left:1415.02265625px;top:412px" width="9" height="9" viewBox="0 0 9 9"><path d="M1 1.5 H8 L4.5 8Z" fill="none" stroke="#3cc890" stroke-width="1.2"/><circle cx="1" cy="1.5" r="1" fill="#3cc890"/><circle cx="8" cy="1.5" r="1" fill="#3cc890"/><circle cx="4.5" cy="8" r="1" fill="#3cc890"/></svg>
<svg class="a" style="left:1576px;top:412.5px" width="9" height="8" viewBox="0 0 9 8"><path d="M0.5 4 Q4.5 -0.5 8.5 4 Q4.5 8.5 0.5 4Z" fill="none" stroke="#d8d8d8" stroke-width="1"/><circle cx="4.5" cy="4" r="1.5" fill="#d8d8d8"/></svg>
<svg class="a" style="left:1586px;top:412px" width="9" height="9" viewBox="0 0 9 9"><rect x="0.5" y="2" width="8" height="6" fill="#d8d8d8" rx="1"/><rect x="3" y="0.5" width="3" height="2" fill="#d8d8d8"/><circle cx="4.5" cy="5" r="1.6" fill="#2a2a2a"/></svg>
<svg class="a" style="left:1348px;top:423.5px" width="5" height="7" viewBox="0 0 5 7"><path d="M1.5 1 L4 3.5 L1.5 6" stroke="#aaa" fill="none" stroke-width="1"/></svg>
<svg class="a" style="left:1357px;top:422px" width="9" height="9" viewBox="0 0 9 9"><path d="M1 1.5 H8 L4.5 8Z" fill="none" stroke="#e8a050" stroke-width="1.5"/><circle cx="4.5" cy="3.5" r="0.9" fill="#e8a050"/></svg>
<div class="t" style="left:1367px;top:423.32px;font-size:6px;color:#d8d8d8;">TopSignFrame</div>
<svg class="a" style="left:1415.01921875px;top:422px" width="9" height="9" viewBox="0 0 9 9"><path d="M1.5 8 L6 3.5 M5.5 1.5 A2 2 0 1 1 7.5 3.5" stroke="#6a7ad0" fill="none" stroke-width="1.4"/></svg>
<svg class="a" style="left:1425.01921875px;top:422px" width="9" height="9" viewBox="0 0 9 9"><path d="M1 1.5 H8 L4.5 8Z" fill="none" stroke="#3cc890" stroke-width="1.2"/><circle cx="1" cy="1.5" r="1" fill="#3cc890"/><circle cx="8" cy="1.5" r="1" fill="#3cc890"/><circle cx="4.5" cy="8" r="1" fill="#3cc890"/></svg>
<svg class="a" style="left:1576px;top:422.5px" width="9" height="8" viewBox="0 0 9 8"><path d="M0.5 4 Q4.5 -0.5 8.5 4 Q4.5 8.5 0.5 4Z" fill="none" stroke="#d8d8d8" stroke-width="1"/><circle cx="4.5" cy="4" r="1.5" fill="#d8d8d8"/></svg>
<svg class="a" style="left:1586px;top:422px" width="9" height="9" viewBox="0 0 9 9"><rect x="0.5" y="2" width="8" height="6" fill="#d8d8d8" rx="1"/><rect x="3" y="0.5" width="3" height="2" fill="#d8d8d8"/><circle cx="4.5" cy="5" r="1.6" fill="#2a2a2a"/></svg>
<svg class="a" style="left:1338px;top:432.5px" width="5" height="7" viewBox="0 0 5 7"><path d="M1.5 1 L4 3.5 L1.5 6" stroke="#aaa" fill="none" stroke-width="1"/></svg>
<svg class="a" style="left:1347px;top:431px" width="9" height="9" viewBox="0 0 9 9"><rect x="0.5" y="0.5" width="8" height="2" fill="#e0e0e0"/><rect x="0.5" y="3" width="8" height="5.5" fill="#e0e0e0"/><rect x="3" y="4.5" width="3" height="1.2" fill="#555"/></svg>
<div class="t" style="left:1357px;top:433.02px;font-size:6px;color:#d8d8d8;">Palace</div>
<svg class="a" style="left:1384.34640625px;top:430px" width="18" height="11" viewBox="0 0 18 11"><path d="M1 3 Q6 1 6 5 Q6 9 1 8" stroke="#e8a050" fill="none" stroke-width="1.6"/><path d="M11 4 Q15 2 15 6 V9 M15 6 Q10 5 10 8 Q12 10 15 8" stroke="#e8a050" fill="none" stroke-width="1.6"/></svg>
<svg class="a" style="left:1566.5px;top:431.5px" width="8" height="8" viewBox="0 0 8 8"><rect x="0" y="0" width="8" height="8" fill="#e8e8e8" rx="1"/><path d="M1.5 4 L3.5 6 L6.5 2" stroke="#333" fill="none" stroke-width="1.2"/></svg>
<svg class="a" style="left:1576px;top:431.5px" width="9" height="8" viewBox="0 0 9 8"><path d="M0.5 4 Q4.5 -0.5 8.5 4 Q4.5 8.5 0.5 4Z" fill="none" stroke="#d8d8d8" stroke-width="1"/><circle cx="4.5" cy="4" r="1.5" fill="#d8d8d8"/></svg>
<svg class="a" style="left:1586px;top:431px" width="9" height="9" viewBox="0 0 9 9"><rect x="0.5" y="2" width="8" height="6" fill="#d8d8d8" rx="1"/><rect x="3" y="0.5" width="3" height="2" fill="#d8d8d8"/><circle cx="4.5" cy="5" r="1.6" fill="#2a2a2a"/></svg>
<svg class="a" style="left:1338px;top:442.5px" width="5" height="7" viewBox="0 0 5 7"><path d="M1.5 1 L4 3.5 L1.5 6" stroke="#aaa" fill="none" stroke-width="1"/></svg>
<svg class="a" style="left:1347px;top:441px" width="9" height="9" viewBox="0 0 9 9"><rect x="0.5" y="0.5" width="8" height="2" fill="#e0e0e0"/><rect x="0.5" y="3" width="8" height="5.5" fill="#e0e0e0"/><rect x="3" y="4.5" width="3" height="1.2" fill="#555"/></svg>
<div class="t" style="left:1357px;top:442.72px;font-size:6px;color:#d8d8d8;">Mind</div>
<svg class="a" style="left:1379.00546875px;top:440px" width="18" height="11" viewBox="0 0 18 11"><path d="M1 3 Q6 1 6 5 Q6 9 1 8" stroke="#e8a050" fill="none" stroke-width="1.6"/><path d="M11 4 Q15 2 15 6 V9 M15 6 Q10 5 10 8 Q12 10 15 8" stroke="#e8a050" fill="none" stroke-width="1.6"/></svg>
<svg class="a" style="left:1566.5px;top:441.5px" width="8" height="8" viewBox="0 0 8 8"><rect x="0" y="0" width="8" height="8" fill="#e8e8e8" rx="1"/><path d="M1.5 4 L3.5 6 L6.5 2" stroke="#333" fill="none" stroke-width="1.2"/></svg>
<svg class="a" style="left:1576px;top:441.5px" width="9" height="8" viewBox="0 0 9 8"><path d="M0.5 4 Q4.5 -0.5 8.5 4 Q4.5 8.5 0.5 4Z" fill="none" stroke="#d8d8d8" stroke-width="1"/><circle cx="4.5" cy="4" r="1.5" fill="#d8d8d8"/></svg>
<svg class="a" style="left:1586px;top:441px" width="9" height="9" viewBox="0 0 9 9"><rect x="0.5" y="2" width="8" height="6" fill="#d8d8d8" rx="1"/><rect x="3" y="0.5" width="3" height="2" fill="#d8d8d8"/><circle cx="4.5" cy="5" r="1.6" fill="#2a2a2a"/></svg>
<svg class="a" style="left:1338px;top:452.5px" width="5" height="7" viewBox="0 0 5 7"><path d="M1.5 1 L4 3.5 L1.5 6" stroke="#aaa" fill="none" stroke-width="1"/></svg>
<svg class="a" style="left:1347px;top:451px" width="9" height="9" viewBox="0 0 9 9"><rect x="0.5" y="0.5" width="8" height="2" fill="#e0e0e0"/><rect x="0.5" y="3" width="8" height="5.5" fill="#e0e0e0"/><rect x="3" y="4.5" width="3" height="1.2" fill="#555"/></svg>
<div class="t" style="left:1357px;top:452.42px;font-size:6px;color:#d8d8d8;">The</div>
<svg class="a" style="left:1376.33921875px;top:450px" width="18" height="11" viewBox="0 0 18 11"><path d="M1 3 Q6 1 6 5 Q6 9 1 8" stroke="#e8a050" fill="none" stroke-width="1.6"/><path d="M11 4 Q15 2 15 6 V9 M15 6 Q10 5 10 8 Q12 10 15 8" stroke="#e8a050" fill="none" stroke-width="1.6"/></svg>
<svg class="a" style="left:1566.5px;top:451.5px" width="8" height="8" viewBox="0 0 8 8"><rect x="0" y="0" width="8" height="8" fill="#e8e8e8" rx="1"/><path d="M1.5 4 L3.5 6 L6.5 2" stroke="#333" fill="none" stroke-width="1.2"/></svg>
<svg class="a" style="left:1576px;top:451.5px" width="9" height="8" viewBox="0 0 9 8"><path d="M0.5 4 Q4.5 -0.5 8.5 4 Q4.5 8.5 0.5 4Z" fill="none" stroke="#d8d8d8" stroke-width="1"/><circle cx="4.5" cy="4" r="1.5" fill="#d8d8d8"/></svg>
<svg class="a" style="left:1586px;top:451px" width="9" height="9" viewBox="0 0 9 9"><rect x="0.5" y="2" width="8" height="6" fill="#d8d8d8" rx="1"/><rect x="3" y="0.5" width="3" height="2" fill="#d8d8d8"/><circle cx="4.5" cy="5" r="1.6" fill="#2a2a2a"/></svg>
<svg class="a" style="left:1338px;top:461.5px" width="5" height="7" viewBox="0 0 5 7"><path d="M1.5 1 L4 3.5 L1.5 6" stroke="#aaa" fill="none" stroke-width="1"/></svg>
<svg class="a" style="left:1347px;top:460px" width="9" height="9" viewBox="0 0 9 9"><rect x="0.5" y="0.5" width="8" height="2" fill="#e0e0e0"/><rect x="0.5" y="3" width="8" height="5.5" fill="#e0e0e0"/><rect x="3" y="4.5" width="3" height="1.2" fill="#555"/></svg>
<div class="t" style="left:1357px;top:462.12px;font-size:6px;color:#d8d8d8;">HotelSign</div>
<svg class="a" style="left:1398.0165625px;top:459px" width="9" height="11" viewBox="0 0 9 11"><path d="M2 4 Q6 2 6 6 V9 M6 6 Q1 5 1 8 Q3 10 6 8" stroke="#e8a050" fill="none" stroke-width="1.6"/></svg>
<svg class="a" style="left:1566.5px;top:460.5px" width="8" height="8" viewBox="0 0 8 8"><rect x="0" y="0" width="8" height="8" fill="#e8e8e8" rx="1"/><path d="M1.5 4 L3.5 6 L6.5 2" stroke="#333" fill="none" stroke-width="1.2"/></svg>
<svg class="a" style="left:1576px;top:460.5px" width="9" height="8" viewBox="0 0 9 8"><path d="M0.5 4 Q4.5 -0.5 8.5 4 Q4.5 8.5 0.5 4Z" fill="none" stroke="#d8d8d8" stroke-width="1"/><circle cx="4.5" cy="4" r="1.5" fill="#d8d8d8"/></svg>
<svg class="a" style="left:1586px;top:460px" width="9" height="9" viewBox="0 0 9 9"><rect x="0.5" y="2" width="8" height="6" fill="#d8d8d8" rx="1"/><rect x="3" y="0.5" width="3" height="2" fill="#d8d8d8"/><circle cx="4.5" cy="5" r="1.6" fill="#2a2a2a"/></svg>
<svg class="a" style="left:1338px;top:471.5px" width="5" height="7" viewBox="0 0 5 7"><path d="M1.5 1 L4 3.5 L1.5 6" stroke="#aaa" fill="none" stroke-width="1"/></svg>
<svg class="a" style="left:1347px;top:470px" width="9" height="9" viewBox="0 0 9 9"><rect x="0.5" y="0.5" width="8" height="2" fill="#e0e0e0"/><rect x="0.5" y="3" width="8" height="5.5" fill="#e0e0e0"/><rect x="3" y="4.5" width="3" height="1.2" fill="#555"/></svg>
<div class="t" style="left:1357px;top:471.82px;font-size:6px;color:#d8d8d8;">BrokenBuildingPieces</div>
<svg class="a" style="left:1428.370625px;top:470px" width="18" height="9" viewBox="0 0 18 9"><path d="M1 8 L4 4.5 H8 M4 4.5 V1" stroke="#e8a050" fill="none" stroke-width="1.3"/><path d="M10 1.5 H17 L13.5 8Z" fill="none" stroke="#e8a050" stroke-width="1.5"/></svg>
<svg class="a" style="left:1566.5px;top:470.5px" width="8" height="8" viewBox="0 0 8 8"><rect x="0" y="0" width="8" height="8" fill="#e8e8e8" rx="1"/><path d="M1.5 4 L3.5 6 L6.5 2" stroke="#333" fill="none" stroke-width="1.2"/></svg>
<svg class="a" style="left:1576px;top:470.5px" width="9" height="8" viewBox="0 0 9 8"><path d="M0.5 4 Q4.5 -0.5 8.5 4 Q4.5 8.5 0.5 4Z" fill="none" stroke="#d8d8d8" stroke-width="1"/><circle cx="4.5" cy="4" r="1.5" fill="#d8d8d8"/></svg>
<svg class="a" style="left:1586px;top:470px" width="9" height="9" viewBox="0 0 9 9"><rect x="0.5" y="2" width="8" height="6" fill="#d8d8d8" rx="1"/><rect x="3" y="0.5" width="3" height="2" fill="#d8d8d8"/><circle cx="4.5" cy="5" r="1.6" fill="#2a2a2a"/></svg>
<svg class="a" style="left:1338px;top:481.5px" width="5" height="7" viewBox="0 0 5 7"><path d="M1.5 1 L4 3.5 L1.5 6" stroke="#aaa" fill="none" stroke-width="1"/></svg>
<svg class="a" style="left:1347px;top:480px" width="9" height="9" viewBox="0 0 9 9"><rect x="0.5" y="0.5" width="8" height="2" fill="#e0e0e0"/><rect x="0.5" y="3" width="8" height="5.5" fill="#e0e0e0"/><rect x="3" y="4.5" width="3" height="1.2" fill="#555"/></svg>
<div class="t" style="left:1357px;top:481.52px;font-size:6px;color:#d8d8d8;">Lighting</div>
<svg class="a" style="left:1387.01828125px;top:480px" width="18" height="9" viewBox="0 0 18 9"><path d="M1 1.5 H8 L4.5 8Z" fill="none" stroke="#e8a050" stroke-width="1.5"/><circle cx="14" cy="3.5" r="3" fill="#e8a050"/><rect x="12.5" y="6.5" width="3" height="2" fill="#e8a050"/></svg>
<svg class="a" style="left:1566.5px;top:480.5px" width="8" height="8" viewBox="0 0 8 8"><rect x="0" y="0" width="8" height="8" fill="#e8e8e8" rx="1"/><path d="M1.5 4 L3.5 6 L6.5 2" stroke="#333" fill="none" stroke-width="1.2"/></svg>
<svg class="a" style="left:1576px;top:480.5px" width="9" height="8" viewBox="0 0 9 8"><path d="M0.5 4 Q4.5 -0.5 8.5 4 Q4.5 8.5 0.5 4Z" fill="none" stroke="#d8d8d8" stroke-width="1"/><circle cx="4.5" cy="4" r="1.5" fill="#d8d8d8"/></svg>
<svg class="a" style="left:1586px;top:480px" width="9" height="9" viewBox="0 0 9 9"><rect x="0.5" y="2" width="8" height="6" fill="#d8d8d8" rx="1"/><rect x="3" y="0.5" width="3" height="2" fill="#d8d8d8"/><circle cx="4.5" cy="5" r="1.6" fill="#2a2a2a"/></svg>
<svg class="a" style="left:1338px;top:491.5px" width="5" height="7" viewBox="0 0 5 7"><path d="M1.5 1 L4 3.5 L1.5 6" stroke="#aaa" fill="none" stroke-width="1"/></svg>
<svg class="a" style="left:1347px;top:490px" width="9" height="9" viewBox="0 0 9 9"><circle cx="4.5" cy="3.5" r="3" fill="#e8a050"/><rect x="3" y="6.5" width="3" height="2" fill="#e8a050"/><rect x="3.5" y="3" width="2" height="1" fill="#2a2a2a"/></svg>
<div class="t" style="left:1357px;top:491.22px;font-size:6px;color:#d8d8d8;">Area</div>
<svg class="a" style="left:1378.67453125px;top:490px" width="9" height="9" viewBox="0 0 9 9"><path d="M2 7 A3.5 3.5 0 1 1 7 7 M3 2 L6 5 L3 8" stroke="#3cc890" fill="none" stroke-width="1.1"/></svg>
<svg class="a" style="left:1576px;top:490.5px" width="9" height="8" viewBox="0 0 9 8"><path d="M0.5 4 Q4.5 -0.5 8.5 4 Q4.5 8.5 0.5 4Z" fill="none" stroke="#d8d8d8" stroke-width="1"/><circle cx="4.5" cy="4" r="1.5" fill="#d8d8d8"/></svg>
<svg class="a" style="left:1586px;top:490px" width="9" height="9" viewBox="0 0 9 9"><rect x="0.5" y="2" width="8" height="6" fill="#d8d8d8" rx="1"/><rect x="3" y="0.5" width="3" height="2" fill="#d8d8d8"/><circle cx="4.5" cy="5" r="1.6" fill="#2a2a2a"/></svg>
<svg class="a" style="left:1338px;top:500.5px" width="5" height="7" viewBox="0 0 5 7"><path d="M1.5 1 L4 3.5 L1.5 6" stroke="#aaa" fill="none" stroke-width="1"/></svg>
<svg class="a" style="left:1347px;top:499px" width="9" height="9" viewBox="0 0 9 9"><circle cx="4.5" cy="3.5" r="3" fill="#e8a050"/><rect x="3" y="6.5" width="3" height="2" fill="#e8a050"/><rect x="3.5" y="3" width="2" height="1" fill="#2a2a2a"/></svg>
<div class="t" style="left:1357px;top:500.92px;font-size:6px;color:#d8d8d8;">Area.002</div>
<svg class="a" style="left:1390.3525px;top:499px" width="9" height="9" viewBox="0 0 9 9"><path d="M2 7 A3.5 3.5 0 1 1 7 7 M3 2 L6 5 L3 8" stroke="#3cc890" fill="none" stroke-width="1.1"/></svg>
<svg class="a" style="left:1576px;top:499.5px" width="9" height="8" viewBox="0 0 9 8"><path d="M0.5 4 Q4.5 -0.5 8.5 4 Q4.5 8.5 0.5 4Z" fill="none" stroke="#d8d8d8" stroke-width="1"/><circle cx="4.5" cy="4" r="1.5" fill="#d8d8d8"/></svg>
<svg class="a" style="left:1586px;top:499px" width="9" height="9" viewBox="0 0 9 9"><rect x="0.5" y="2" width="8" height="6" fill="#d8d8d8" rx="1"/><rect x="3" y="0.5" width="3" height="2" fill="#d8d8d8"/><circle cx="4.5" cy="5" r="1.6" fill="#2a2a2a"/></svg>
<svg class="a" style="left:1338px;top:510.5px" width="5" height="7" viewBox="0 0 5 7"><path d="M1.5 1 L4 3.5 L1.5 6" stroke="#aaa" fill="none" stroke-width="1"/></svg>
<svg class="a" style="left:1347px;top:509px" width="9" height="9" viewBox="0 0 9 9"><path d="M1 1.5 H8 L4.5 8Z" fill="none" stroke="#e8a050" stroke-width="1.5"/><circle cx="4.5" cy="3.5" r="0.9" fill="#e8a050"/></svg>
<div class="t" style="left:1357px;top:510.62px;font-size:6px;color:#d8d8d8;">Background</div>
<svg class="a" style="left:1398.02265625px;top:509px" width="9" height="9" viewBox="0 0 9 9"><path d="M1 1.5 H8 L4.5 8Z" fill="none" stroke="#3cc890" stroke-width="1.2"/><circle cx="1" cy="1.5" r="1" fill="#3cc890"/><circle cx="8" cy="1.5" r="1" fill="#3cc890"/><circle cx="4.5" cy="8" r="1" fill="#3cc890"/></svg>
<svg class="a" style="left:1576px;top:509.5px" width="9" height="8" viewBox="0 0 9 8"><path d="M0.5 4 Q4.5 -0.5 8.5 4 Q4.5 8.5 0.5 4Z" fill="none" stroke="#d8d8d8" stroke-width="1"/><circle cx="4.5" cy="4" r="1.5" fill="#d8d8d8"/></svg>
<svg class="a" style="left:1586px;top:509px" width="9" height="9" viewBox="0 0 9 9"><rect x="0.5" y="2" width="8" height="6" fill="#d8d8d8" rx="1"/><rect x="3" y="0.5" width="3" height="2" fill="#d8d8d8"/><circle cx="4.5" cy="5" r="1.6" fill="#2a2a2a"/></svg>
<svg class="a" style="left:1338px;top:520.5px" width="5" height="7" viewBox="0 0 5 7"><path d="M1.5 1 L4 3.5 L1.5 6" stroke="#aaa" fill="none" stroke-width="1"/></svg>
<svg class="a" style="left:1347px;top:519px" width="9" height="9" viewBox="0 0 9 9"><circle cx="3" cy="3" r="2.3" fill="#e8a050"/><circle cx="6.5" cy="3" r="2.3" fill="#e8a050"/><rect x="1" y="5" width="7" height="3.5" fill="#e8a050"/></svg>
<div class="t" style="left:1357px;top:520.32px;font-size:6px;color:#d8d8d8;">Camera</div>
<svg class="a" style="left:1387.34078125px;top:518px" width="10" height="10" viewBox="0 0 10 10"><rect x="0.5" y="0.5" width="9" height="9" rx="2" fill="#3a8a6a"/><rect x="2" y="3" width="6" height="4" fill="#8ae0b0"/></svg>
<svg class="a" style="left:1576px;top:519.5px" width="9" height="8" viewBox="0 0 9 8"><path d="M0.5 4 Q4.5 -0.5 8.5 4 Q4.5 8.5 0.5 4Z" fill="none" stroke="#d8d8d8" stroke-width="1"/><circle cx="4.5" cy="4" r="1.5" fill="#d8d8d8"/></svg>
<svg class="a" style="left:1586px;top:519px" width="9" height="9" viewBox="0 0 9 9"><rect x="0.5" y="2" width="8" height="6" fill="#d8d8d8" rx="1"/><rect x="3" y="0.5" width="3" height="2" fill="#d8d8d8"/><circle cx="4.5" cy="5" r="1.6" fill="#2a2a2a"/></svg>
<svg class="a" style="left:1338px;top:529.5px" width="5" height="7" viewBox="0 0 5 7"><path d="M1.5 1 L4 3.5 L1.5 6" stroke="#666" fill="none" stroke-width="1"/></svg>
<svg class="a" style="left:1347px;top:528px" width="9" height="9" viewBox="0 0 9 9"><path d="M1 1.5 H8 L4.5 8Z" fill="none" stroke="#8a6a40" stroke-width="1.5"/><circle cx="4.5" cy="3.5" r="0.9" fill="#8a6a40"/></svg>
<div class="t" style="left:1357px;top:530.02px;font-size:6px;color:#7a7a7a;">BrickWall</div>
<svg class="a" style="left:1390.7771875px;top:528px" width="9" height="9" viewBox="0 0 9 9"><path d="M1 1.5 H8 L4.5 8Z" fill="none" stroke="#3cc890" stroke-width="1.2"/><circle cx="1" cy="1.5" r="1" fill="#3cc890"/><circle cx="8" cy="1.5" r="1" fill="#3cc890"/><circle cx="4.5" cy="8" r="1" fill="#3cc890"/></svg>
<svg class="a" style="left:1576px;top:528.5px" width="9" height="8" viewBox="0 0 9 8"><path d="M0.5 4 Q4.5 -0.5 8.5 4 Q4.5 8.5 0.5 4Z" fill="none" stroke="#d8d8d8" stroke-width="1"/><circle cx="4.5" cy="4" r="1.5" fill="#d8d8d8"/></svg>
<svg class="a" style="left:1586px;top:528px" width="9" height="9" viewBox="0 0 9 9"><rect x="0.5" y="2" width="8" height="6" fill="#d8d8d8" rx="1"/><rect x="3" y="0.5" width="3" height="2" fill="#d8d8d8"/><circle cx="4.5" cy="5" r="1.6" fill="#2a2a2a"/></svg>
<div class="a" style="left:1597px;top:260px;width:2px;height:260px;background:#3a3a3a;border-radius:1px;"></div>
<!-- pr -->
<div class="a" style="left:1326px;top:532px;width:274px;height:332px;background:#2e2e2e;"></div>
<div class="a" style="left:1326px;top:532px;width:274px;height:13px;background:#2d2d2d;"></div>
<svg class="a" style="left:1331px;top:534px" width="12" height="10" viewBox="0 0 12 10"><rect x="0.5" y="0.5" width="7" height="4" rx="2" fill="#ddd"/><rect x="0.5" y="5.5" width="7" height="4" rx="2" fill="#ddd"/><circle cx="6" cy="2.5" r="1.3" fill="#555"/><path d="M9 5 L10 6 L11 5" stroke="#aaa" fill="none"/></svg>
<div class="a" style="left:1435px;top:534px;width:56px;height:10px;background:#1f1f1f;border-radius:3px;"></div>
<svg class="a" style="left:1436px;top:534px" width="10" height="10" viewBox="0 0 10 10"><circle cx="6" cy="4" r="2.8" fill="none" stroke="#ccc" stroke-width="1.1"/><path d="M4 6 L1 9.5" stroke="#ccc" stroke-width="1.2"/></svg>
<div class="t" style="left:1447.5px;top:536.42px;font-size:6px;color:#777;">Search</div>
<svg class="a" style="left:1589px;top:537px" width="7" height="5" viewBox="0 0 7 5"><path d="M1 1.5 L3.5 4 L6 1.5" stroke="#ccc" fill="none"/></svg>
<div class="a" style="left:1326px;top:545px;width:15px;height:319px;background:#1f1f1f;"></div>
<div class="a" style="left:1327px;top:667px;width:13px;height:13px;background:#2e2e2e;"></div>
<svg class="a" style="left:1329px;top:550px" width="10" height="10" viewBox="0 0 10 10"><path d="M2 9 V4 M2 3 A1 1 0 1 1 2.1 3 M6 9 V5 M4 5 H8 M6 1 V4" stroke="#ddd" stroke-width="1.5" fill="none"/></svg>
<svg class="a" style="left:1329px;top:567px" width="10" height="10" viewBox="0 0 10 10"><rect x="1" y="3" width="8" height="6" fill="#ccc" rx="1"/><rect x="3" y="1.5" width="4" height="2" fill="#ccc"/></svg>
<svg class="a" style="left:1329px;top:580px" width="10" height="10" viewBox="0 0 10 10"><rect x="1" y="1" width="8" height="3" fill="#ccc"/><path d="M2 4 H8 L7 9 H3Z" fill="#aaa"/></svg>
<svg class="a" style="left:1329px;top:594px" width="10" height="10" viewBox="0 0 10 10"><rect x="1" y="2" width="7" height="7" fill="none" stroke="#bbb"/><path d="M2 8 L5 4 L8 8" fill="#ccc"/></svg>
<svg class="a" style="left:1329px;top:607px" width="10" height="10" viewBox="0 0 10 10"><circle cx="3.5" cy="6" r="2.5" fill="#ccc"/><circle cx="7" cy="6.5" r="2" fill="none" stroke="#ccc"/><path d="M3 1 L5 4 L1 4Z" fill="#ddd"/></svg>
<svg class="a" style="left:1329px;top:621px" width="10" height="10" viewBox="0 0 10 10"><circle cx="5" cy="5" r="4" fill="#b8404c"/><path d="M2 4 Q5 2 8 5 M3 8 Q5 5 7 8" stroke="#e08090" fill="none"/></svg>
<svg class="a" style="left:1329px;top:638px" width="10" height="10" viewBox="0 0 10 10"><rect x="1" y="1" width="8" height="8" fill="none" stroke="#ddd" stroke-width="1.2"/><rect x="3" y="4" width="4" height="3" fill="#ddd"/></svg>
<svg class="a" style="left:1329px;top:655px" width="10" height="10" viewBox="0 0 10 10"><rect x="1" y="1" width="8" height="8" rx="2" fill="#e89a50"/><rect x="3" y="3" width="4" height="4" fill="#f0c080"/></svg>
<svg class="a" style="left:1329px;top:668px" width="10" height="10" viewBox="0 0 10 10"><path d="M1.5 8.5 L6 4 M5.5 1.5 A2.3 2.3 0 1 1 8.5 4.5" stroke="#7a9ae8" fill="none" stroke-width="1.8"/></svg>
<svg class="a" style="left:1329px;top:681px" width="10" height="10" viewBox="0 0 10 10"><circle cx="2.5" cy="2.5" r="1.8" fill="#8a9ad8"/><path d="M3 3 L8 8 M4 2 H9 M2 6 V9" stroke="#bbb" fill="none"/></svg>
<svg class="a" style="left:1329px;top:694px" width="10" height="10" viewBox="0 0 10 10"><circle cx="5" cy="5" r="2" fill="#8a9ad8"/><circle cx="5" cy="5" r="4" fill="none" stroke="#6a7ac8" stroke-width="1.2"/></svg>
<svg class="a" style="left:1329px;top:708px" width="10" height="10" viewBox="0 0 10 10"><ellipse cx="5" cy="5" rx="4" ry="3" fill="none" stroke="#6a80d0" stroke-width="1.4"/><circle cx="4" cy="5" r="1.8" fill="#8aa0e8"/></svg>
<svg class="a" style="left:1329px;top:721px" width="10" height="10" viewBox="0 0 10 10"><path d="M1 2 H9 L5 9Z" fill="none" stroke="#3cc890" stroke-width="1.5"/></svg>
<svg class="a" style="left:1329px;top:735px" width="10" height="10" viewBox="0 0 10 10"><circle cx="5" cy="5" r="4" fill="#b8404c"/><path d="M2 4 Q5 2 8 5" stroke="#e08090" fill="none"/></svg>
<svg class="a" style="left:1345px;top:549px" width="9" height="9" viewBox="0 0 9 9"><rect x="1" y="1" width="7" height="7" fill="#ddd"/><rect x="2.5" y="2.5" width="4" height="4" fill="#555"/></svg>
<div class="t" style="left:1358px;top:551.42px;font-size:6px;color:#e0e0e0;">Object008</div>
<svg class="a" style="left:1587px;top:548px" width="10" height="10" viewBox="0 0 10 10"><path d="M2 9 L5 6 M4 3 L7 6 M5 2 L8 5 L6 7 L3 4Z" stroke="#777" fill="none"/></svg>
<div class="a" style="left:1345px;top:567px;width:250px;height:9px;background:#545454;border-radius:2px;"></div>
<div class="t" style="left:1348px;top:568.37px;font-size:7px;color:#ddd;">+</div>
<div class="t" style="left:1274px;width:400px;text-align:center;top:568.92px;font-size:6px;color:#e6e6e6;">Add Modifier</div>
<!-- ge -->
<div class="a" style="left:320px;top:765px;width:1005px;height:99px;background:#1d1d1d;"></div>
<div class="a" style="left:320px;top:765px;width:1005px;height:13px;background:#2b2b2b;"></div>
<svg class="a" style="left:325px;top:767px" width="13" height="10" viewBox="0 0 13 10"><path d="M1 5 L3 8 L9 1 M5 8 H9" stroke="#ddd" fill="none" stroke-width="1.2"/><path d="M10 5 L11 6 L12 5" stroke="#aaa" fill="none"/></svg>
<div class="t" style="left:345px;top:769.22px;font-size:6px;color:#d6d6d6;">View</div>
<div class="t" style="left:364.7px;top:769.22px;font-size:6px;color:#d6d6d6;">Select</div>
<div class="t" style="left:388.7px;top:769.22px;font-size:6px;color:#d6d6d6;">Marker</div>
<div class="t" style="left:414.5px;top:769.22px;font-size:6px;color:#d6d6d6;">Channel</div>
<div class="t" style="left:443.5px;top:769.22px;font-size:6px;color:#d6d6d6;">Key</div>
<div class="a" style="left:460px;top:767px;width:54px;height:10px;background:#3d3d3d;border-radius:2px;"></div>
<div class="a" style="left:505px;top:767px;width:9px;height:10px;background:#4a6ba8;border-radius:0 2px 2px 0;"></div>
<svg class="a" style="left:462px;top:767px" width="10" height="10" viewBox="0 0 10 10"><path d="M1 8 Q3 1 5 5 Q7 9 9 2" stroke="#ccc" fill="none"/></svg>
<div class="t" style="left:473.5px;top:769.22px;font-size:6px;color:#dddddd;">Normalize</div>
<svg class="a" style="left:506px;top:768px" width="8" height="8" viewBox="0 0 8 8"><circle cx="3.5" cy="4" r="2.5" fill="none" stroke="#aac" stroke-dasharray="1 1"/></svg>
<div class="a" style="left:1198px;top:767px;width:10px;height:10px;background:#4772b3;border-radius:2px;"></div>
<svg class="a" style="left:1199px;top:768px" width="9" height="9" viewBox="0 0 9 9"><path d="M1 1 L8 4 L5 5 L4 8Z" fill="#eef"/></svg>
<svg class="a" style="left:1209px;top:768px" width="9" height="9" viewBox="0 0 9 9"><path d="M1 1 V8 M4 1 V8 M7 1 V8" stroke="#aaa" stroke-width="1"/></svg>
<svg class="a" style="left:1218px;top:767px" width="10" height="10" viewBox="0 0 10 10"><path d="M5 1 L9 9 H1Z" fill="#ddd"/><rect x="4.5" y="3.5" width="1" height="3" fill="#333"/></svg>
<svg class="a" style="left:1230px;top:767px" width="10" height="10" viewBox="0 0 10 10"><rect x="1" y="1" width="7" height="7" fill="none" stroke="#bbb"/><path d="M3 3 H6 V6" stroke="#ccc" fill="none"/></svg>
<svg class="a" style="left:1242px;top:767px" width="12" height="10" viewBox="0 0 12 10"><path d="M1 1 H8 L5 5 V9 L4 8 V5Z" fill="none" stroke="#ccc"/><path d="M9 5 L10 6 L11 5" stroke="#aaa" fill="none"/></svg>
<svg class="a" style="left:1260px;top:767px" width="13" height="10" viewBox="0 0 13 10"><rect x="1.5" y="1.5" width="7" height="7" fill="none" stroke="#ccc" stroke-dasharray="2 1.5"/><circle cx="5" cy="5" r="1.2" fill="#ddd"/><path d="M10 4 L11 5 L12 4" stroke="#bbb" fill="none"/></svg>
<div class="a" style="left:1275px;top:767px;width:10px;height:10px;background:#4772b3;border-radius:2px;"></div>
<svg class="a" style="left:1276px;top:768px" width="9" height="9" viewBox="0 0 9 9"><path d="M1 4 A3 3 0 0 1 8 4 M4 8 V4" stroke="#eef" fill="none"/></svg>
<svg class="a" style="left:1286px;top:769px" width="6" height="5" viewBox="0 0 6 5"><path d="M1 1 L3 3 L5 1" stroke="#bbb" fill="none"/></svg>
<div class="a" style="left:1296px;top:767px;width:10px;height:10px;background:#3d3d3d;border-radius:2px;"></div>
<svg class="a" style="left:1298px;top:769px" width="6" height="6" viewBox="0 0 6 6"><circle cx="3" cy="3" r="2.5" fill="none" stroke="#ccc"/><circle cx="3" cy="3" r="1" fill="#ddd"/></svg>
<svg class="a" style="left:1308px;top:767px" width="10" height="10" viewBox="0 0 10 10"><path d="M1 9 Q5 0 9 9" stroke="#555" fill="none"/></svg>
<div class="a" style="left:320px;top:778px;width:105px;height:86px;background:#1f1f1f;"></div>
<div class="a" style="left:322px;top:779px;width:100px;height:10px;background:#252525;border-radius:2px;"></div>
<svg class="a" style="left:323px;top:780px" width="9" height="9" viewBox="0 0 9 9"><circle cx="5" cy="3.5" r="2.5" fill="none" stroke="#ccc" stroke-width="1"/><path d="M3.2 5.5 L1 8" stroke="#ccc" stroke-width="1.1"/></svg>
<div class="t" style="left:333.5px;top:781.12px;font-size:6px;color:#5a5a5a;">Search</div>
<div class="a" style="left:413px;top:779px;width:10px;height:10px;background:#4a4a4a;border-radius:2px;"></div>
<svg class="a" style="left:414px;top:781px" width="9" height="6" viewBox="0 0 9 6"><path d="M1 3 H8 M2 1.5 L1 3 L2 4.5 M7 1.5 L8 3 L7 4.5" stroke="#ddd" fill="none"/></svg>
<div class="a" style="left:320px;top:790px;width:105px;height:8px;background:#2a5088;"></div>
<div class="a" style="left:320px;top:798px;width:105px;height:8px;background:#203a66;"></div>
<svg class="a" style="left:322px;top:791px" width="6" height="5" viewBox="0 0 6 5"><path d="M1 1.5 L3 3.5 L5 1.5" stroke="#ccc" fill="none"/></svg>
<svg class="a" style="left:328px;top:790px" width="9" height="9" viewBox="0 0 9 9"><path d="M1 1 H8 L4.5 8Z" fill="none" stroke="#ddd" stroke-width="1.3"/></svg>
<svg class="a" style="left:337px;top:790px" width="9" height="9" viewBox="0 0 9 9"><path d="M2 8 L5 5 M4 2 L7 5 M5 1 L8 4 L6 6 L3 3Z" stroke="#8ab0ff" fill="none" stroke-width="0.8"/></svg>
<svg class="a" style="left:345px;top:791px" width="8" height="7" viewBox="0 0 8 7"><path d="M0.5 3.5 Q4 0 7.5 3.5 Q4 7 0.5 3.5Z" fill="none" stroke="#eef"/><circle cx="4" cy="3.5" r="1.2" fill="#eef"/></svg>
<div class="t" style="left:353px;top:791.76px;font-size:5.6px;color:#cfe0ff;">Object008</div>
<svg class="a" style="left:326px;top:799px" width="6" height="5" viewBox="0 0 6 5"><path d="M1 1.5 L3 3.5 L5 1.5" stroke="#ccc" fill="none"/></svg>
<svg class="a" style="left:332px;top:798px" width="8" height="9" viewBox="0 0 8 9"><circle cx="2" cy="1.5" r="1" fill="#ccc"/><circle cx="5" cy="1.5" r="1" fill="#ccc"/><path d="M3 4 L5 6 L3 8" stroke="#ccc" fill="none"/></svg>
<div class="t" style="left:340px;top:799.76px;font-size:5.6px;color:#cfe0ff;">Object008Action</div>
<div class="a" style="left:326px;top:807px;width:3px;height:8px;background:#e06060;"></div>
<svg class="a" style="left:331px;top:807px" width="8" height="7" viewBox="0 0 8 7"><path d="M0.5 3.5 Q4 0 7.5 3.5 Q4 7 0.5 3.5Z" fill="none" stroke="#eee"/><circle cx="4" cy="3.5" r="1.2" fill="#eee"/></svg>
<div class="t" style="left:340px;top:808.76px;font-size:5.6px;color:#e8a030;">"modifiers["Geometry</div>
<div class="a" style="left:340px;top:814px;width:80px;height:1px;background:#c03030;"></div>
<svg class="a" style="left:401px;top:807px" width="8" height="9" viewBox="0 0 8 9"><path d="M2 8 L5 5" stroke="#888"/></svg>
<svg class="a" style="left:404px;top:807px" width="7" height="7" viewBox="0 0 7 7"><rect x="0" y="0" width="7" height="7" fill="#ddd" rx="1"/><path d="M1.5 3.5 L3 5 L6 1.5" stroke="#333" fill="none"/></svg>
<svg class="a" style="left:413px;top:807px" width="8" height="9" viewBox="0 0 8 9"><path d="M1 8 V4 H7 V8Z M2 4 V2 A2 2 0 0 1 5 1" stroke="#bbb" fill="none"/></svg>
<div class="a" style="left:425px;top:778px;width:760px;height:12px;background:#181818;"></div>
<div class="t" style="left:235px;width:400px;text-align:center;top:781.42px;font-size:6px;color:#c8c8c8;">-600</div>
<div class="t" style="left:269.8px;width:400px;text-align:center;top:781.42px;font-size:6px;color:#c8c8c8;">-550</div>
<div class="t" style="left:304.5px;width:400px;text-align:center;top:781.42px;font-size:6px;color:#c8c8c8;">-500</div>
<div class="t" style="left:339.29999999999995px;width:400px;text-align:center;top:781.42px;font-size:6px;color:#c8c8c8;">-450</div>
<div class="t" style="left:374px;width:400px;text-align:center;top:781.42px;font-size:6px;color:#c8c8c8;">-400</div>
<div class="t" style="left:408.70000000000005px;width:400px;text-align:center;top:781.42px;font-size:6px;color:#c8c8c8;">-350</div>
<div class="t" style="left:443.5px;width:400px;text-align:center;top:781.42px;font-size:6px;color:#c8c8c8;">-300</div>
<div class="t" style="left:478.20000000000005px;width:400px;text-align:center;top:781.42px;font-size:6px;color:#c8c8c8;">-250</div>
<div class="t" style="left:513px;width:400px;text-align:center;top:781.42px;font-size:6px;color:#c8c8c8;">-200</div>
<div class="t" style="left:547.7px;width:400px;text-align:center;top:781.42px;font-size:6px;color:#c8c8c8;">-150</div>
<div class="t" style="left:582.5px;width:400px;text-align:center;top:781.42px;font-size:6px;color:#c8c8c8;">-100</div>
<div class="t" style="left:617.2px;width:400px;text-align:center;top:781.42px;font-size:6px;color:#c8c8c8;">-50</div>
<div class="t" style="left:649.7px;width:400px;text-align:center;top:781.42px;font-size:6px;color:#c8c8c8;">0</div>
<div class="t" style="left:684.7px;width:400px;text-align:center;top:781.42px;font-size:6px;color:#c8c8c8;">50</div>
<div class="t" style="left:719.5px;width:400px;text-align:center;top:781.42px;font-size:6px;color:#c8c8c8;">100</div>
<div class="t" style="left:754.2px;width:400px;text-align:center;top:781.42px;font-size:6px;color:#c8c8c8;">150</div>
<div class="t" style="left:789px;width:400px;text-align:center;top:781.42px;font-size:6px;color:#c8c8c8;">200</div>
<div class="t" style="left:823.7px;width:400px;text-align:center;top:781.42px;font-size:6px;color:#c8c8c8;">250</div>
<div class="t" style="left:858.5px;width:400px;text-align:center;top:781.42px;font-size:6px;color:#c8c8c8;">300</div>
<div class="t" style="left:893.2px;width:400px;text-align:center;top:781.42px;font-size:6px;color:#c8c8c8;">350</div>
<div class="t" style="left:928px;width:400px;text-align:center;top:781.42px;font-size:6px;color:#c8c8c8;">400</div>
<div class="t" style="left:962.7px;width:400px;text-align:center;top:781.42px;font-size:6px;color:#c8c8c8;">450</div>
<div class="a" style="left:851px;top:790px;width:68px;height:67px;background:#262626;"></div>
<div class="a" style="left:866px;top:790px;width:1px;height:67px;background:#2c2c2c;"></div>
<div class="a" style="left:425px;top:816px;width:760px;height:1px;background:#222;"></div>
<div class="a" style="left:425px;top:841px;width:760px;height:1px;background:#222;"></div>
<div class="t" style="left:428px;top:813.26px;font-size:5.6px;color:#ddd;">2</div>
<div class="t" style="left:428px;top:839.26px;font-size:5.6px;color:#ddd;">1</div>
<div class="a" style="left:425px;top:848px;width:756px;height:1.2px;background:#a8474e;"></div>
<svg class="a" style="left:895px;top:845px" width="8" height="7" viewBox="0 0 8 7"><rect x="1" y="1" width="6" height="5" rx="2" fill="#fff"/></svg>
<div class="a" style="left:870px;top:778px;width:1px;height:78px;background:#5a8ad0;"></div>
<div class="a" style="left:864px;top:778px;width:13px;height:10px;background:#4a78c0;border-radius:3px;"></div>
<div class="t" style="left:670.5px;width:400px;text-align:center;top:781.22px;font-size:6px;color:#ffffff;">30</div>
<div class="a" style="left:427px;top:857px;width:755px;height:4px;background:#3a3a3a;border-radius:2px;"></div>
<div class="a" style="left:1180px;top:796px;width:3px;height:58px;background:#3a3a3a;border-radius:2px;"></div>
<div class="a" style="left:1185px;top:778px;width:140px;height:86px;background:#2b2b2b;"></div>
<div class="a" style="left:1187px;top:781px;width:100px;height:10px;background:#2b2b2b;"></div>
<div class="t" style="left:1193px;top:783.92px;font-size:6px;color:#e0e0e0;">Add Modifier</div>
<svg class="a" style="left:1283px;top:785px" width="6" height="5" viewBox="0 0 6 5"><path d="M1 1.5 L3 3.5 L5 1.5" stroke="#bbb" fill="none"/></svg>
<div class="a" style="left:1293px;top:780px;width:20px;height:10px;background:#3a3a3a;border-radius:2px;"></div>
<svg class="a" style="left:1294px;top:781px" width="18" height="9" viewBox="0 0 18 9"><path d="M1 8 L4 2 L7 8 M2 5 H6" stroke="#aaa" fill="none"/><rect x="10" y="2" width="6" height="6" fill="none" stroke="#aaa"/></svg>
<div class="a" style="left:1315px;top:781px;width:10px;height:47px;background:#232323;"></div>
<div class="a" style="left:1315px;top:830px;width:10px;height:33px;background:#2b2b2b;"></div>
<div class="t" style="left:1296px;top:792px;width:48px;height:8px;font-size:5.8px;color:#ccc;transform:rotate(90deg);transform-origin:24px 4px;text-align:center;">F-Curve</div>
<div class="t" style="left:1296px;top:827px;width:48px;height:8px;font-size:5.8px;color:#ddd;font-weight:bold;transform:rotate(90deg);transform-origin:24px 4px;text-align:center;">Modifiers</div>
<div class="t" style="left:1296px;top:852px;width:48px;height:8px;font-size:5.8px;color:#ccc;transform:rotate(90deg);transform-origin:24px 4px;text-align:center;">View</div>
<!-- sb -->
<div class="a" style="left:320px;top:864px;width:1280px;height:12px;background:#1a1a1a;"></div>
<svg class="a" style="left:324.7px;top:865px" width="6" height="10" viewBox="0 0 6 10"><rect x="0.5" y="0.5" width="5" height="9" rx="2.5" fill="none" stroke="#999"/><rect x="1" y="1" width="2" height="4" fill="#bbb"/></svg>
<div class="t" style="left:332.5px;top:867.42px;font-size:6px;color:#a8a8a8;">Confirm</div>
<svg class="a" style="left:358px;top:865px" width="6" height="10" viewBox="0 0 6 10"><rect x="0.5" y="0.5" width="5" height="9" rx="2.5" fill="none" stroke="#999"/><rect x="1" y="1" width="2" height="4" fill="#bbb"/></svg>
<div class="t" style="left:366px;top:867.42px;font-size:6px;color:#a8a8a8;">Cancel</div>
<div class="a" style="left:389px;top:866px;width:8px;height:8px;border:1px solid #8a8a8a;border-radius:2px;box-sizing:border-box;"></div>
<div class="t" style="left:193.0px;width:400px;text-align:center;top:868.17px;font-size:5px;color:#bbb;">X</div>
<div class="a" style="left:399.5px;top:866px;width:8px;height:8px;border:1px solid #8a8a8a;border-radius:2px;box-sizing:border-box;"></div>
<div class="t" style="left:203.5px;width:400px;text-align:center;top:868.17px;font-size:5px;color:#bbb;">Y</div>
<div class="a" style="left:408.7px;top:866px;width:8px;height:8px;border:1px solid #8a8a8a;border-radius:2px;box-sizing:border-box;"></div>
<div class="t" style="left:212.7px;width:400px;text-align:center;top:868.17px;font-size:5px;color:#bbb;">Z</div>
<div class="t" style="left:417.7px;top:867.42px;font-size:6px;color:#a8a8a8;">Axis</div>
<svg class="a" style="left:433px;top:865px" width="9" height="10" viewBox="0 0 9 10"><path d="M4.5 0.5 L8.5 5 H6.5 V9.5 H2.5 V5 H0.5Z" fill="none" stroke="#999"/></svg>
<div class="a" style="left:442.8px;top:866px;width:8px;height:8px;border:1px solid #8a8a8a;border-radius:2px;box-sizing:border-box;"></div>
<div class="t" style="left:246.8px;width:400px;text-align:center;top:868.17px;font-size:5px;color:#bbb;">X</div>
<div class="a" style="left:452px;top:866px;width:8px;height:8px;border:1px solid #8a8a8a;border-radius:2px;box-sizing:border-box;"></div>
<div class="t" style="left:256.0px;width:400px;text-align:center;top:868.17px;font-size:5px;color:#bbb;">Y</div>
<div class="a" style="left:462px;top:866px;width:8px;height:8px;border:1px solid #8a8a8a;border-radius:2px;box-sizing:border-box;"></div>
<div class="t" style="left:266.0px;width:400px;text-align:center;top:868.17px;font-size:5px;color:#bbb;">Z</div>
<div class="t" style="left:471.9px;top:867.42px;font-size:6px;color:#a8a8a8;">Plane</div>
<div class="a" style="left:490.8px;top:866px;width:8px;height:8px;border:1px solid #8a8a8a;border-radius:2px;box-sizing:border-box;"></div>
<div class="t" style="left:294.8px;width:400px;text-align:center;top:868.17px;font-size:5px;color:#bbb;">C</div>
<div class="t" style="left:500.4px;top:867.42px;font-size:6px;color:#a8a8a8;">Clear Constraints</div>
<div class="a" style="left:549.5px;top:866px;width:8px;height:8px;border:1px solid #8a8a8a;border-radius:2px;box-sizing:border-box;"></div>
<div class="t" style="left:353.5px;width:400px;text-align:center;top:868.17px;font-size:5px;color:#bbb;">B</div>
<div class="t" style="left:559px;top:867.42px;font-size:6px;color:#a8a8a8;">Set Snap Base</div>
<div class="a" style="left:601px;top:866px;width:11.5px;height:8px;border:1px solid #8a8a8a;border-radius:2px;box-sizing:border-box;"></div>
<div class="t" style="left:406.75px;width:400px;text-align:center;top:868.17px;font-size:5px;color:#bbb;">Ctrl</div>
<div class="t" style="left:614.5px;top:867.42px;font-size:6px;color:#a8a8a8;">Snap Invert</div>
<svg class="a" style="left:650.5px;top:865px" width="9" height="10" viewBox="0 0 9 10"><path d="M4.5 0.5 L8.5 5 H6.5 V9.5 H2.5 V5 H0.5Z" fill="none" stroke="#999"/></svg>
<div class="a" style="left:659.5px;top:866px;width:8px;height:8px;border:1px solid #8a8a8a;border-radius:2px;box-sizing:border-box;"></div>
<div class="t" style="left:668.5px;top:867.42px;font-size:6px;color:#a8a8a8;">Snap Toggle</div>
<div class="a" style="left:707px;top:866px;width:8px;height:8px;border:1px solid #8a8a8a;border-radius:2px;box-sizing:border-box;"></div>
<div class="t" style="left:511.0px;width:400px;text-align:center;top:868.17px;font-size:5px;color:#bbb;">G</div>
<div class="t" style="left:715px;top:867.42px;font-size:6px;color:#a8a8a8;">Vert/Edge Slide</div>
<div class="a" style="left:761.5px;top:866px;width:7.5px;height:8px;border:1px solid #8a8a8a;border-radius:2px;box-sizing:border-box;"></div>
<div class="t" style="left:565.25px;width:400px;text-align:center;top:868.17px;font-size:5px;color:#bbb;">R</div>
<div class="t" style="left:769.8px;top:867.42px;font-size:6px;color:#a8a8a8;">Rotate</div>
<div class="a" style="left:791.7px;top:866px;width:8px;height:8px;border:1px solid #8a8a8a;border-radius:2px;box-sizing:border-box;"></div>
<div class="t" style="left:595.7px;width:400px;text-align:center;top:868.17px;font-size:5px;color:#bbb;">S</div>
<div class="t" style="left:800.5px;top:867.42px;font-size:6px;color:#a8a8a8;">Resize</div>
<svg class="a" style="left:823px;top:865px" width="6" height="10" viewBox="0 0 6 10"><rect x="0.5" y="0.5" width="5" height="9" rx="2.5" fill="none" stroke="#999"/><rect x="1" y="1" width="2" height="4" fill="#bbb"/></svg>
<div class="t" style="left:831px;top:867.42px;font-size:6px;color:#a8a8a8;">Automatic Constraint</div>
<svg class="a" style="left:890px;top:865px" width="9" height="10" viewBox="0 0 9 10"><path d="M4.5 0.5 L8.5 5 H6.5 V9.5 H2.5 V5 H0.5Z" fill="none" stroke="#999"/></svg>
<svg class="a" style="left:899.6px;top:865px" width="6" height="10" viewBox="0 0 6 10"><rect x="0.5" y="0.5" width="5" height="9" rx="2.5" fill="none" stroke="#999"/><rect x="1" y="1" width="2" height="4" fill="#bbb"/></svg>
<div class="t" style="left:906px;top:867.42px;font-size:6px;color:#a8a8a8;">Automatic Constraint Plane</div>
<svg class="a" style="left:981px;top:865px" width="9" height="10" viewBox="0 0 9 10"><path d="M4.5 0.5 L8.5 5 H6.5 V9.5 H2.5 V5 H0.5Z" fill="none" stroke="#999"/></svg>
<div class="t" style="left:990px;top:867.42px;font-size:6px;color:#a8a8a8;">Precision Mode</div>
<div class="a" style="left:1036px;top:866px;width:11.5px;height:8px;border:1px solid #8a8a8a;border-radius:2px;box-sizing:border-box;"></div>
<div class="t" style="left:841.75px;width:400px;text-align:center;top:868.17px;font-size:5px;color:#bbb;">Alt</div>
<div class="t" style="left:1049px;top:867.42px;font-size:6px;color:#a8a8a8;">Navigate</div>
<svg class="a" style="left:1566px;top:865px" width="10" height="10" viewBox="0 0 10 10"><rect x="1" y="1" width="8" height="8" fill="none" stroke="#888"/><path d="M1 1 L9 9" stroke="#888"/></svg>
<div class="a" style="left:1578px;top:866px;width:1px;height:8px;background:#555;"></div>
<div class="t" style="left:1581px;top:867.76px;font-size:5.6px;color:#888;">4.3.2</div>
<div class="a" style="left:320px;top:876px;width:1280px;height:28px;background:linear-gradient(to right,#f3dcdc,#f5dede 50%,#f2dcdd);"></div>
<div class="a" style="left:320px;top:900px;width:1280px;height:4px;background:#dfe2e2;"></div>
<svg class="a" style="left:328px;top:880px" width="14" height="14" viewBox="0 0 14 14"><path d="M2 12 Q1 7 5 5 L9 3 Q12 8 9 11 Z" fill="#2a8a9a"/><path d="M3 6 L5 11 M5 5 L7 10" stroke="#cfe" stroke-width="0.8"/><circle cx="9" cy="4" r="3.3" fill="#d02828"/><text x="7.7" y="6" font-size="5" fill="#fff" font-family="Liberation Sans" font-weight="bold">1</text></svg>
<div class="t" style="left:345px;top:881.42px;font-size:6px;color:#333;">NZ - SA</div>
<div class="t" style="left:345px;top:889.42px;font-size:6px;color:#d03030;">Live</div>
<svg class="a" style="left:799px;top:882px" width="12" height="12" viewBox="0 0 12 12"><rect x="0" y="0" width="5.6" height="5.6" fill="#1a8ad8"/><rect x="6.4" y="0" width="5.6" height="5.6" fill="#1a8ad8"/><rect x="0" y="6.4" width="5.6" height="5.6" fill="#1a8ad8"/><rect x="6.4" y="6.4" width="5.6" height="5.6" fill="#1a8ad8"/></svg>
<div class="a" style="left:818.5px;top:881px;width:107.5px;height:15px;background:#fbf4f4;border-radius:8px;border:0.5px solid #e0d0d0;"></div>
<svg class="a" style="left:824px;top:883px" width="11" height="11" viewBox="0 0 11 11"><circle cx="5" cy="4.5" r="3.5" fill="none" stroke="#222" stroke-width="1.1"/><path d="M7.5 7 L10 9.5" stroke="#222" stroke-width="1.2"/></svg>
<div class="t" style="left:836.5px;top:885.75px;font-size:6.2px;color:#555;">Search</div>
<svg class="a" style="left:903px;top:882px" width="19" height="13" viewBox="0 0 19 13"><path d="M1 11 L8 4 L10 6 L3 12Z" fill="#e8d090"/><rect x="11" y="2" width="7" height="10" rx="3" fill="#4a8ae0"/></svg>
<svg class="a" style="left:931px;top:883px" width="12" height="11" viewBox="0 0 12 11"><rect x="0" y="2" width="6" height="8" fill="#222"/><rect x="3" y="0" width="8" height="8" fill="#fff" stroke="#444" stroke-width="0.8"/></svg>
<svg class="a" style="left:954px;top:881px" width="14" height="14" viewBox="0 0 14 14"><circle cx="7" cy="7" r="6" fill="#3ab0a0"/><path d="M7 1 A6 6 0 0 1 13 7 L7 7Z" fill="#e05090"/><path d="M1 7 A6 6 0 0 0 7 13 V7Z" fill="#f0b030"/><rect x="5" y="9" width="8" height="4" fill="#444"/></svg>
<svg class="a" style="left:976px;top:881px" width="14" height="13" viewBox="0 0 14 13"><rect x="0" y="2" width="14" height="10" rx="1" fill="#f0c030"/><rect x="0" y="0.5" width="6" height="3" fill="#e0a820"/><rect x="2" y="6" width="10" height="3" fill="#3a8ae0"/></svg>
<svg class="a" style="left:998px;top:881px" width="14" height="14" viewBox="0 0 14 14"><circle cx="7" cy="7" r="6.5" fill="#1aa0c8"/><path d="M3 9 Q5 3 10 5 Q8 9 12 10 Q8 14 3 9Z" fill="#5ad070"/><circle cx="8" cy="7" r="2.3" fill="#f5dcdc"/></svg>
<svg class="a" style="left:1020px;top:881px" width="14" height="14" viewBox="0 0 14 14"><rect x="0" y="1" width="14" height="12" rx="1.5" fill="#2a4a90"/><rect x="4" y="4" width="2.7" height="2.7" fill="#f04030"/><rect x="7.3" y="4" width="2.7" height="2.7" fill="#60c030"/><rect x="4" y="7.3" width="2.7" height="2.7" fill="#30a0f0"/><rect x="7.3" y="7.3" width="2.7" height="2.7" fill="#f0c020"/></svg>
<svg class="a" style="left:1042px;top:881px" width="14" height="14" viewBox="0 0 14 14"><rect x="5" y="1" width="9" height="11" rx="1" fill="#40a0f0"/><rect x="0" y="3" width="9" height="9" rx="1" fill="#1a6ac8"/><circle cx="4.5" cy="7.5" r="2.3" fill="none" stroke="#fff" stroke-width="1.2"/></svg>
<svg class="a" style="left:1064px;top:881px" width="14" height="14" viewBox="0 0 14 14"><circle cx="7" cy="7" r="6.5" fill="#e04030"/><path d="M7 7 L1.4 10.2 A6.5 6.5 0 0 0 10.5 12.5Z" fill="#30a050"/><path d="M7 7 L10.5 12.5 A6.5 6.5 0 0 0 13 4 H7Z" fill="#f0c020"/><circle cx="7" cy="7" r="3" fill="#fff"/><circle cx="7" cy="7" r="2.2" fill="#3a80e0"/></svg>
<div class="a" style="left:1083px;top:878px;width:21px;height:22px;background:#fbeeee;border-radius:3px;"></div>
<svg class="a" style="left:1086px;top:881px" width="15" height="14" viewBox="0 0 15 14"><circle cx="9" cy="7.5" r="4.5" fill="none" stroke="#e87d0d" stroke-width="2"/><circle cx="9" cy="7.5" r="1.8" fill="#2a5a9a"/><path d="M1 4.5 L7 4.5 M2 9 L6 6.5" stroke="#e87d0d" stroke-width="1.8"/></svg>
<div class="a" style="left:1088px;top:898px;width:10px;height:2px;background:#3a6ad0;border-radius:1px;"></div>
<div class="a" style="left:1069px;top:898px;width:4px;height:1.5px;background:#888;border-radius:1px;"></div>
<svg class="a" style="left:1108px;top:881px" width="15" height="15" viewBox="0 0 15 15"><circle cx="7" cy="8" r="6" fill="#222"/><path d="M4 6 L10 10 M10 6 L4 10" stroke="#eee" stroke-width="0.9"/><circle cx="11.5" cy="3.5" r="3" fill="#e02020"/></svg>
<div class="a" style="left:1113px;top:898px;width:4px;height:1.5px;background:#888;border-radius:1px;"></div>
<svg class="a" style="left:1450px;top:885px" width="8" height="6" viewBox="0 0 8 6"><path d="M1 5 L4 2 L7 5" stroke="#333" fill="none" stroke-width="1"/></svg>
<svg class="a" style="left:1464px;top:883px" width="11" height="11" viewBox="0 0 11 11"><rect x="0.5" y="1" width="9" height="8" fill="none" stroke="#e87d20" stroke-width="1"/><circle cx="8" cy="8" r="2.5" fill="#f07a20"/></svg>
<svg class="a" style="left:1480px;top:883px" width="12" height="10" viewBox="0 0 12 10"><path d="M1 8 Q0 4 4 4 Q5 1 8 2 Q11 3 10 6 Q12 8 9 9Z" fill="none" stroke="#444" stroke-width="0.9"/></svg>
<div class="t" style="left:1497px;top:880.34px;font-size:5.5px;color:#333;">ENG</div>
<div class="t" style="left:1499px;top:888.34px;font-size:5.5px;color:#333;">US</div>
<svg class="a" style="left:1518px;top:883px" width="10" height="10" viewBox="0 0 10 10"><rect x="0.5" y="0.5" width="7" height="8" fill="none" stroke="#333"/><rect x="5" y="1" width="3" height="8" fill="#333"/></svg>
<svg class="a" style="left:1530px;top:883px" width="11" height="11" viewBox="0 0 11 11"><path d="M1 4 H3 L6 1 V10 L3 7 H1Z" fill="none" stroke="#333"/><path d="M8 3 Q10 5.5 8 8" stroke="#333" fill="none"/></svg>
<div class="t" style="left:1557px;top:882.59px;font-size:5.8px;color:#333;">13:38</div>
<div class="t" style="left:1547.5px;top:890.59px;font-size:5.8px;color:#333;">2025/02/10</div>
<svg class="a" style="left:1582px;top:883px" width="10" height="11" viewBox="0 0 10 11"><path d="M2 8 V4.5 A3 3 0 0 1 8 4.5 V8 H9 V9 H1 V8Z" fill="#2a5ab8"/><circle cx="5" cy="10" r="1" fill="#2a5ab8"/></svg>
</body></html>
